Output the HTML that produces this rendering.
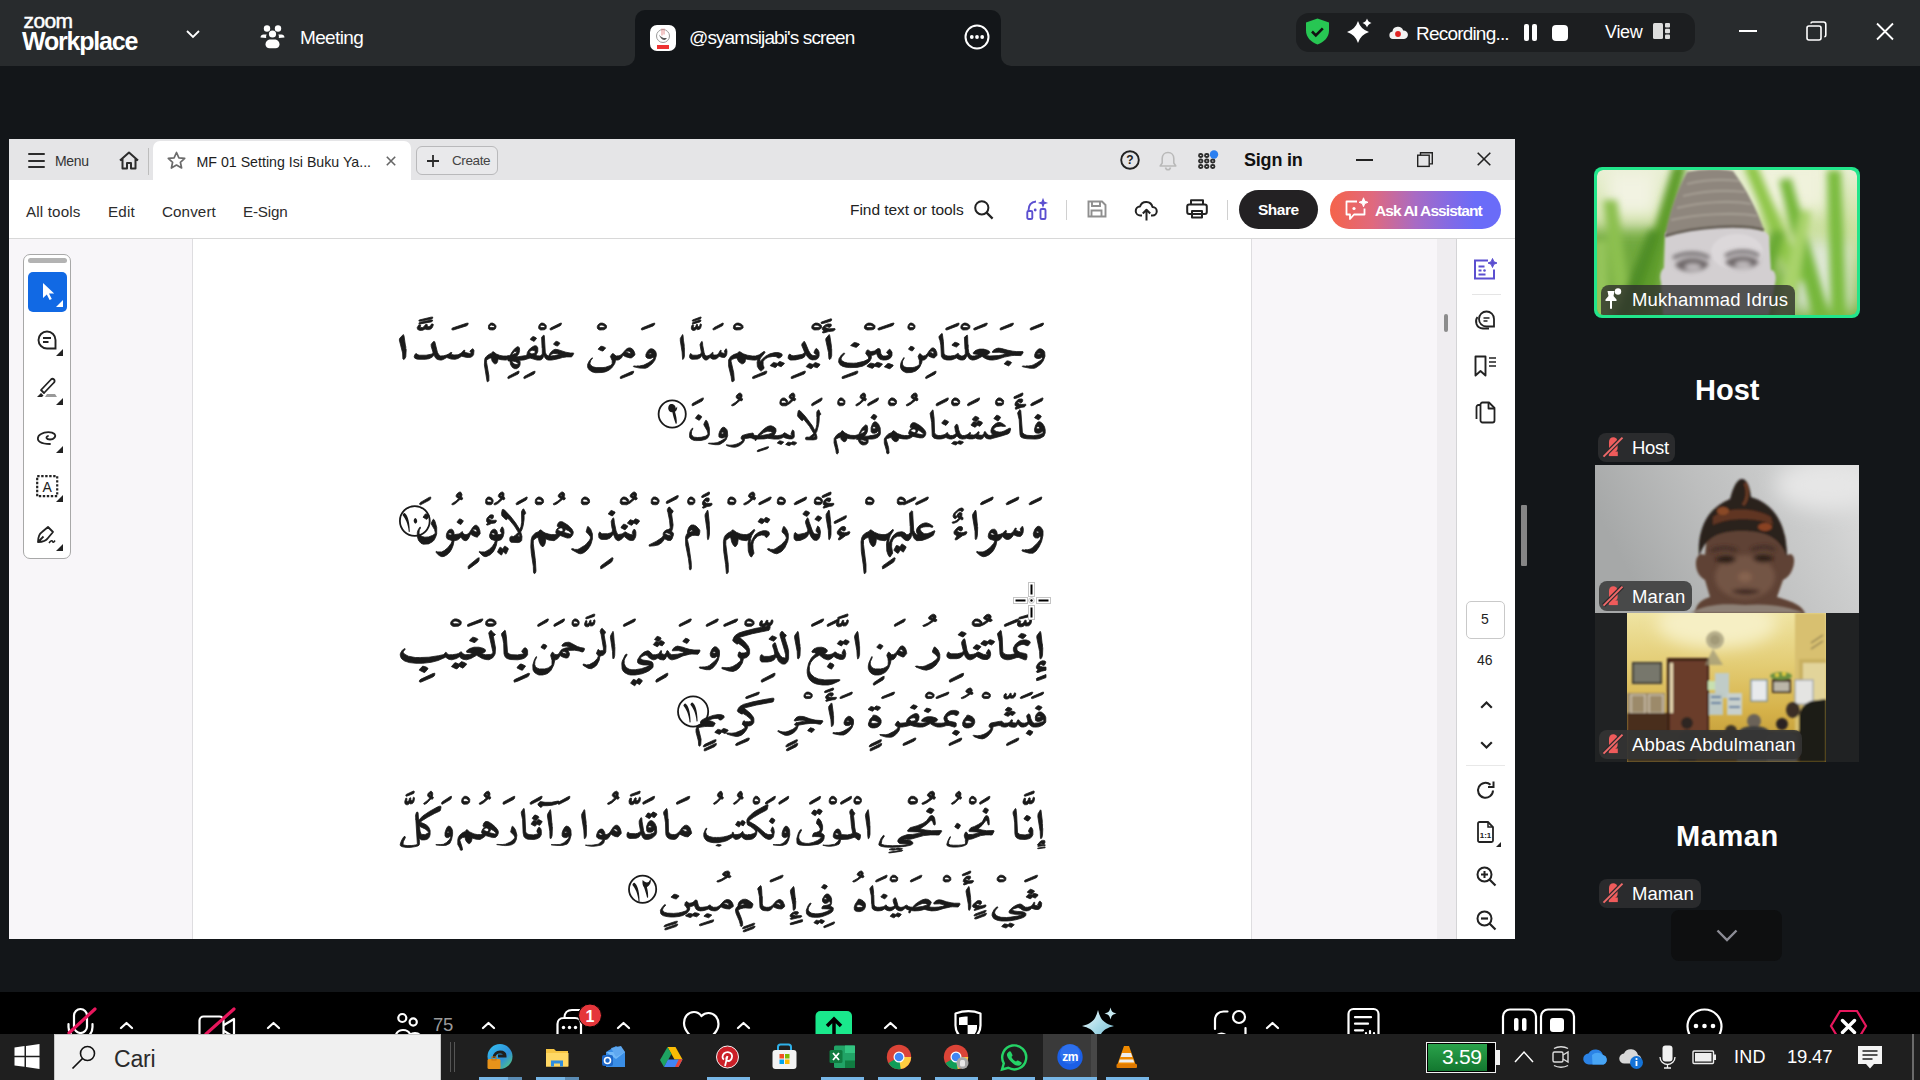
<!DOCTYPE html>
<html><head><meta charset="utf-8">
<style>
*{box-sizing:border-box;margin:0;padding:0}
html,body{width:1920px;height:1080px;overflow:hidden;background:#131619;font-family:"Liberation Sans",sans-serif}
.a{position:absolute}
.t{position:absolute;white-space:nowrap;line-height:1}
svg{overflow:visible}
</style></head><body>
<div class="a" style="left:0px;top:0px;width:1920px;height:66px;background:#282b2d;"></div>
<div class="a" style="left:625px;top:56px;width:386px;height:10px;background:#131619;"></div>
<div class="a" style="left:635px;top:10px;width:366px;height:56px;background:#131619;border-radius:10px 10px 0 0"></div>
<div class="a" style="left:625px;top:56px;width:10px;height:10px;background:#282b2d;border-radius:0 0 10px 0"></div>
<div class="a" style="left:1001px;top:56px;width:10px;height:10px;background:#282b2d;border-radius:0 0 0 10px"></div>
<div class="t" style="left:23.5px;top:9.9px;font-size:21px;font-weight:400;color:#fff;letter-spacing:-0.6px;-webkit-text-stroke:0.5px #fff">zoom</div>
<div class="t" style="left:22px;top:28.5px;font-size:25px;font-weight:700;color:#fff;letter-spacing:-1.2px;">Workplace</div>
<svg class="a" style="left:186px;top:30px;" width="14" height="9" viewBox="0 0 14 9"><path d="M1 1l6 6 6-6" fill="none" stroke="#fff" stroke-width="1.8"/></svg>
<svg class="a" style="left:260px;top:24px;" width="25" height="25" viewBox="0 0 25 25"><g fill="#fff"><circle cx="7" cy="4.5" r="3.2"/><circle cx="18" cy="4.5" r="3.2"/><circle cx="12.5" cy="10" r="3.6"/><path d="M0.5 13.5c0-2 1.5-3 3-3h3.2c-0.6 1-0.8 2.2-0.5 3.5z"/><path d="M24.5 13.5c0-2-1.5-3-3-3h-3.2c0.6 1 0.8 2.2 0.5 3.5z"/><path d="M5.5 20.5c0-3.3 2.5-5 5-5h4c2.5 0 5 1.7 5 5c0 2.2-1.8 3.8-4 3.8h-6c-2.2 0-4-1.6-4-3.8z"/></g></svg>
<div class="t" style="left:300px;top:28.1px;font-size:19px;font-weight:400;color:#fff;letter-spacing:-0.65px;">Meeting</div>
<div class="a" style="left:650px;top:25px;width:26px;height:26px;background:#fff;border-radius:7px;overflow:hidden"><svg width="26" height="26" viewBox="0 0 26 26"><circle cx="13" cy="11" r="6.5" fill="none" stroke="#999" stroke-width="1"/><path d="M9 9.5c2 3 5 4 8 3.5l-2 2c-3 0-5-2-6-5.5z" fill="#555"/><path d="M12 3.5v7M14 3.5v6" stroke="#d77" stroke-width="0.8"/><rect x="7" y="20" width="12" height="4" fill="#e33"/></svg></div>
<div class="t" style="left:689px;top:27.5px;font-size:19px;font-weight:400;color:#fff;letter-spacing:-0.9px;">@syamsijabi's screen</div>
<svg class="a" style="left:964px;top:24px;" width="26" height="26" viewBox="0 0 26 26"><circle cx="13" cy="13" r="11.5" fill="none" stroke="#fff" stroke-width="2"/><circle cx="7.8" cy="13" r="1.9" fill="#fff"/><circle cx="13" cy="13" r="1.9" fill="#fff"/><circle cx="18.2" cy="13" r="1.9" fill="#fff"/></svg>
<div class="a" style="left:1296px;top:13px;width:399px;height:39px;background:#1c1e20;border-radius:13px"></div>
<svg class="a" style="left:1305px;top:18px;" width="25" height="27" viewBox="0 0 25 27"><path d="M12.5 0.5L24 4.5v8c0 7-5 11.5-11.5 14c-6.5-2.5-11.5-7-11.5-14v-8z" fill="#27c653"/><path d="M7 13.5l3.8 3.8 7-7" fill="none" stroke="#111" stroke-width="2.6"/></svg>
<svg class="a" style="left:1344px;top:17px;" width="28" height="28" viewBox="0 0 28 28"><g fill="#fff"><path d="M14 4Q16.6 12.4 25 15Q16.6 17.6 14 26Q11.4 17.6 3 15Q11.4 12.4 14 4z"/><path d="M23 1.5Q24 5 27.5 6Q24 7 23 10.5Q22 7 18.5 6Q22 5 23 1.5z"/></g></svg>
<svg class="a" style="left:1389px;top:27px;" width="19" height="12" viewBox="0 0 19 12"><path d="M3.8 12a3.8 3.8 0 0 1-0.4-7.5a5.6 5.6 0 0 1 10.8-1a4.2 4.2 0 0 1 0.9 8.5z" fill="#f2f2f2"/><circle cx="9" cy="7" r="2.9" fill="#e02424"/></svg>
<div class="t" style="left:1416px;top:23.6px;font-size:19px;font-weight:400;color:#fff;letter-spacing:-0.8px;">Recording...</div>
<div class="a" style="left:1524px;top:24px;width:5px;height:17px;background:#fff;border-radius:2px"></div>
<div class="a" style="left:1532px;top:24px;width:5px;height:17px;background:#fff;border-radius:2px"></div>
<div class="a" style="left:1552px;top:25px;width:16px;height:16px;background:#fff;border-radius:4px"></div>
<div class="t" style="left:1605px;top:23.1px;font-size:18px;font-weight:400;color:#fff;letter-spacing:-0.3px;">View</div>
<svg class="a" style="left:1653px;top:23px;" width="17" height="16" viewBox="0 0 17 16"><g fill="#ddd"><rect x="0" y="0" width="10" height="16" rx="1.5"/><rect x="12" y="0" width="5" height="4.5" rx="1"/><rect x="12" y="5.7" width="5" height="4.5" rx="1"/><rect x="12" y="11.4" width="5" height="4.6" rx="1"/></g></svg>
<div class="a" style="left:1739px;top:30px;width:18px;height:2px;background:#fff;"></div>
<svg class="a" style="left:1806px;top:21px;" width="21" height="20" viewBox="0 0 21 20"><g fill="none" stroke="#fff" stroke-width="1.6"><rect x="1" y="5" width="14" height="14" rx="2"/><path d="M5 2.5c0-1 0.7-1.5 1.5-1.5h11c1.2 0 2.3 1 2.3 2.3v11c0 0.8-0.5 1.5-1.5 1.5"/></g></svg>
<svg class="a" style="left:1876px;top:23px;" width="18" height="17" viewBox="0 0 18 17"><path d="M1 0.5l16 16M17 0.5l-16 16" stroke="#fff" stroke-width="1.8"/></svg>
<div class="a" style="left:9px;top:139px;width:1506px;height:800px;background:#fff;"></div>
<div class="a" style="left:9px;top:139px;width:1506px;height:41px;background:#e5e5e7;"></div>
<div class="a" style="left:153px;top:141px;width:258px;height:39px;background:#fff;border-radius:7px 7px 0 0"></div>
<div class="a" style="left:9px;top:238px;width:1506px;height:1px;background:#d8d8d8;"></div>
<div class="a" style="left:9px;top:239px;width:183px;height:700px;background:#f8f6f9;"></div>
<div class="a" style="left:192px;top:239px;width:1px;height:700px;background:#dedde0;"></div>
<div class="a" style="left:1251px;top:239px;width:186px;height:700px;background:#f8f6f9;"></div>
<div class="a" style="left:1251px;top:239px;width:1px;height:700px;background:#dedde0;"></div>
<div class="a" style="left:1437px;top:239px;width:19px;height:700px;background:#efedf0;"></div>
<div class="a" style="left:1456px;top:239px;width:1px;height:700px;background:#d4d4d6;"></div>
<div class="a" style="left:28px;top:153px;width:17px;height:2px;background:#2c2c2c;border-radius:1px"></div>
<div class="a" style="left:28px;top:159.5px;width:17px;height:2px;background:#2c2c2c;border-radius:1px"></div>
<div class="a" style="left:28px;top:166px;width:17px;height:2px;background:#2c2c2c;border-radius:1px"></div>
<div class="t" style="left:55px;top:154.1px;font-size:14px;font-weight:400;color:#333;letter-spacing:-0.3px;">Menu</div>
<svg class="a" style="left:118px;top:151px;" width="22" height="19" viewBox="0 0 22 19"><path d="M2 9.5L11 1.5l9 8M4.5 7.5v10h4.5v-5.5h4v5.5h4.5v-10" fill="none" stroke="#2c2c2c" stroke-width="2" stroke-linejoin="round"/></svg>
<div class="a" style="left:148px;top:148px;width:1px;height:27px;background:#bdbdbd;"></div>
<svg class="a" style="left:167px;top:151px;" width="19" height="19" viewBox="0 0 19 19"><path d="M9.5 1.5l2.4 5.3 5.8 0.6-4.3 3.9 1.2 5.7-5.1-2.9-5.1 2.9 1.2-5.7-4.3-3.9 5.8-0.6z" fill="none" stroke="#6b6b6b" stroke-width="1.7" stroke-linejoin="round"/></svg>
<div class="t" style="left:196.5px;top:155.0px;font-size:14.2px;font-weight:400;color:#1e1e1e;letter-spacing:0.0px;">MF 01 Setting Isi Buku Ya...</div>
<svg class="a" style="left:386px;top:156px;" width="10" height="10" viewBox="0 0 10 10"><path d="M0.8 0.8l8.4 8.4M9.2 0.8l-8.4 8.4" stroke="#666" stroke-width="1.6"/></svg>
<div class="a" style="left:416px;top:146px;width:82px;height:29px;background:#e9e9eb;border:1.5px solid #b9b9bb;border-radius:6px"></div>
<svg class="a" style="left:427px;top:155px;" width="12" height="12" viewBox="0 0 12 12"><path d="M6 0v12M0 6h12" stroke="#2a2a2a" stroke-width="1.8"/></svg>
<div class="t" style="left:452px;top:154.0px;font-size:13.5px;font-weight:400;color:#444;letter-spacing:-0.4px;">Create</div>
<svg class="a" style="left:1120px;top:150px;" width="20" height="20" viewBox="0 0 20 20"><circle cx="10" cy="10" r="8.8" fill="none" stroke="#222" stroke-width="1.9"/><text x="10" y="14.3" font-family="Liberation Sans" font-weight="700" font-size="12" text-anchor="middle" fill="#222">?</text></svg>
<svg class="a" style="left:1159px;top:151px;" width="18" height="20" viewBox="0 0 18 20"><path d="M9 1.5c-3.5 0-5.8 2.6-5.8 6v4.5l-2 3h15.6l-2-3v-4.5c0-3.4-2.3-6-5.8-6zM6.5 16.5c0.4 1.5 1.3 2.3 2.5 2.3s2.1-0.8 2.5-2.3" fill="none" stroke="#b9b9b9" stroke-width="1.6" stroke-linejoin="round"/></svg>
<svg class="a" style="left:1198px;top:152px;" width="19" height="18" viewBox="0 0 19 18"><g fill="none" stroke="#2e2e2e" stroke-width="1.8"><rect x="1" y="2.0" width="3.5" height="3" rx="1.5"/><rect x="7" y="2.0" width="3.5" height="3" rx="1.5"/><rect x="1" y="7.5" width="3.5" height="3" rx="1.5"/><rect x="7" y="7.5" width="3.5" height="3" rx="1.5"/><rect x="13" y="7.5" width="3.5" height="3" rx="1.5"/><rect x="1" y="13.0" width="3.5" height="3" rx="1.5"/><rect x="7" y="13.0" width="3.5" height="3" rx="1.5"/><rect x="13" y="13.0" width="3.5" height="3" rx="1.5"/></g><circle cx="16" cy="2.5" r="4.2" fill="#2b7ff0"/></svg>
<div class="t" style="left:1244px;top:151.3px;font-size:18px;font-weight:700;color:#111;letter-spacing:-0.2px;">Sign in</div>
<div class="a" style="left:1356px;top:159px;width:17px;height:2px;background:#222;"></div>
<svg class="a" style="left:1417px;top:152px;" width="16" height="15" viewBox="0 0 16 15"><g fill="none" stroke="#222" stroke-width="1.4"><rect x="0.7" y="3.2" width="11.5" height="11.2"/><path d="M3.5 3.2v-2.5h11.8v11.2h-3"/></g></svg>
<svg class="a" style="left:1477px;top:152px;" width="14" height="14" viewBox="0 0 14 14"><path d="M0.7 0.7l12.6 12.6M13.3 0.7l-12.6 12.6" stroke="#222" stroke-width="1.6"/></svg>
<div class="t" style="left:26px;top:203.5px;font-size:15.2px;font-weight:400;color:#2c2c2c;letter-spacing:0.15px;">All tools</div>
<div class="t" style="left:108px;top:203.5px;font-size:15.2px;font-weight:400;color:#2c2c2c;letter-spacing:0.2px;">Edit</div>
<div class="t" style="left:162px;top:203.5px;font-size:15.2px;font-weight:400;color:#2c2c2c;letter-spacing:0.1px;">Convert</div>
<div class="t" style="left:243px;top:203.5px;font-size:15.2px;font-weight:400;color:#2c2c2c;letter-spacing:-0.2px;">E-Sign</div>
<div class="t" style="left:850px;top:202.3px;font-size:15.5px;font-weight:400;color:#222;letter-spacing:-0.05px;">Find text or tools</div>
<svg class="a" style="left:974px;top:200px;" width="20" height="19" viewBox="0 0 20 19"><circle cx="7.8" cy="7.8" r="6.6" fill="none" stroke="#222" stroke-width="2"/><path d="M12.6 12.6l6 6" stroke="#222" stroke-width="2.2"/></svg>
<svg class="a" style="left:1026px;top:198px;" width="23" height="22" viewBox="0 0 23 22"><g fill="none" stroke="#5b4fd0" stroke-width="1.9"><path d="M2.5 12.5c0-5 2.5-8.5 7.5-9"/><rect x="1.3" y="13" width="5" height="8" rx="1.3"/><rect x="14.5" y="11" width="5" height="10" rx="1.3"/></g><circle cx="9.2" cy="12" r="1.4" fill="#5b4fd0"/><path d="M17 1.5l0.9 2.5 2.5 0.9-2.5 0.9-0.9 2.5-0.9-2.5-2.5-0.9 2.5-0.9z" fill="#5b4fd0" stroke="#5b4fd0" stroke-width="1.2"/></svg>
<div class="a" style="left:1066px;top:200px;width:1px;height:20px;background:#d0d0d0;"></div>
<svg class="a" style="left:1087px;top:200px;" width="20" height="18" viewBox="0 0 20 18"><g fill="none" stroke="#8f8f8f" stroke-width="1.9"><path d="M1.5 1.5h13.5l3.5 3.5v11.5h-17z"/><path d="M5 1.5v4.5h8v-4.5M4.5 16.5v-6h10v6"/></g></svg>
<svg class="a" style="left:1135px;top:200px;" width="23" height="21" viewBox="0 0 23 21"><g fill="none" stroke="#222" stroke-width="2" stroke-linejoin="round"><path d="M7 15.5h-1.5a4.5 4.5 0 0 1-0.5-9a6.5 6.5 0 0 1 12.5 0.5a4 4 0 0 1 0 8.5h-1.5"/><path d="M11.5 20.5v-10M7.8 13.5l3.7-3.7 3.7 3.7"/></g></svg>
<svg class="a" style="left:1186px;top:199px;" width="22" height="20" viewBox="0 0 22 20"><g fill="none" stroke="#222" stroke-width="2" stroke-linejoin="round"><path d="M5 5.5v-4.3h12v4.3"/><rect x="1.2" y="5.5" width="19.6" height="9.5" rx="2"/><rect x="6" y="12" width="10" height="6.5"/></g></svg>
<div class="a" style="left:1227px;top:200px;width:1px;height:20px;background:#d0d0d0;"></div>
<div class="a" style="left:1239px;top:190px;width:79px;height:39px;background:#232123;border-radius:20px"></div>
<div class="t" style="left:1258px;top:201.8px;font-size:15.5px;font-weight:700;color:#fff;letter-spacing:-0.5px;">Share</div>
<div class="a" style="left:1330px;top:191px;width:171px;height:38px;border-radius:19px;background:linear-gradient(90deg,#f5634a 0%,#e0697e 25%,#a86bc4 50%,#7f6ae8 72%,#6a6cf8 85%,#6a6cf8 100%)"></div>
<svg class="a" style="left:1344px;top:197px;" width="25" height="25" viewBox="0 0 25 25"><g fill="none" stroke="#fff" stroke-width="1.8" stroke-linejoin="round"><path d="M13 4.5h-10.5v13h3.5v4.5l4-4.5h10.5v-6"/></g><circle cx="10" cy="11.5" r="1.6" fill="#fff"/><path d="M19.5 0.8l1.2 3.3 3.3 1.2-3.3 1.2-1.2 3.3-1.2-3.3-3.3-1.2 3.3-1.2z" fill="#fff" stroke="#fff" stroke-width="1"/></svg>
<div class="t" style="left:1375px;top:202.5px;font-size:15.5px;font-weight:700;color:#fff;letter-spacing:-0.9px;">Ask AI Assistant</div>
<div class="a" style="left:23px;top:254px;width:48px;height:305px;background:#fff;border:1.3px solid #a8a8a8;border-radius:7px"></div>
<div class="a" style="left:28px;top:258px;width:39px;height:5px;background:#b3b3b3;border-radius:3px"></div>
<div class="a" style="left:28px;top:272px;width:39px;height:40px;background:#1169e4;border-radius:5px"></div>
<svg class="a" style="left:42px;top:282px;" width="13" height="19" viewBox="0 0 13 19"><path d="M1 1v15l3.8-3.5 2.8 5.5 2.2-1.1-2.8-5.4h5.2z" fill="#fff"/></svg>
<svg class="a" style="left:56px;top:300px;" width="7" height="7" viewBox="0 0 7 7"><path d="M7 0v7h-7z" fill="#fff"/></svg>
<svg class="a" style="left:37px;top:330px;" width="21" height="21" viewBox="0 0 21 21"><path d="M10 1.5a8.5 8.5 0 1 0 0 17h8.5v-8.5a8.5 8.5 0 0 0-8.5-8.5z" fill="none" stroke="#222" stroke-width="1.9"/><path d="M6 8h8M6 12h5.5" stroke="#222" stroke-width="1.9"/></svg>
<svg class="a" style="left:56px;top:349px;" width="7" height="7" viewBox="0 0 7 7"><path d="M7 0v7h-7z" fill="#222"/></svg>
<svg class="a" style="left:36px;top:378px;" width="23" height="21" viewBox="0 0 23 21"><path d="M8 15l10-10.5a2 2 0 0 0-3-3l-10 10.5z" fill="none" stroke="#222" stroke-width="1.8" stroke-linejoin="round"/><path d="M1 19l4-4 2.5 2.5-1.5 1.5z" fill="#222"/><path d="M9 19h12l-2-3h-8z" fill="#999"/></svg>
<svg class="a" style="left:56px;top:398px;" width="7" height="7" viewBox="0 0 7 7"><path d="M7 0v7h-7z" fill="#222"/></svg>
<svg class="a" style="left:36px;top:429px;" width="23" height="17" viewBox="0 0 23 17"><path d="M4 13c-3-1.5-3-6 1-8c4-2.5 11-2.5 13.5 0c2 2.2-0.5 5.5-4.5 5.5c-4 0-4.5-2.5-2-3.5M4 13c2.5 1.5 6 2 10 2" fill="none" stroke="#222" stroke-width="1.8" stroke-linecap="round"/></svg>
<svg class="a" style="left:56px;top:446px;" width="7" height="7" viewBox="0 0 7 7"><path d="M7 0v7h-7z" fill="#222"/></svg>
<svg class="a" style="left:36px;top:475px;" width="23" height="23" viewBox="0 0 23 23"><rect x="1.2" y="1.2" width="20" height="20" fill="none" stroke="#222" stroke-width="2.2" stroke-dasharray="2.4 1.6"/><text x="11.2" y="16.5" font-family="Liberation Sans" font-size="14" text-anchor="middle" fill="#222">A</text></svg>
<svg class="a" style="left:56px;top:495px;" width="7" height="7" viewBox="0 0 7 7"><path d="M7 0v7h-7z" fill="#222"/></svg>
<svg class="a" style="left:36px;top:525px;" width="23" height="20" viewBox="0 0 23 20"><path d="M2 17c0-4 1-8 4-10l6-5 5 5-5 6c-2 3-6 4-10 4zM2 17l5.5-5.5" fill="none" stroke="#222" stroke-width="1.8" stroke-linejoin="round"/><path d="M13 18c1.5-2 3-3 3.5-1.5s1.5 0.5 2.5-1" fill="none" stroke="#222" stroke-width="1.5"/></svg>
<svg class="a" style="left:56px;top:544px;" width="7" height="7" viewBox="0 0 7 7"><path d="M7 0v7h-7z" fill="#222"/></svg>
<svg class="a" style="left:1473px;top:258px;" width="24" height="22" viewBox="0 0 24 22"><g fill="none" stroke="#5b4fd0" stroke-width="2"><path d="M15 2.5h-13v18h19v-9"/><path d="M5.5 8.5h6M5.5 12.5h3M5.5 16.5h7"/></g><circle cx="11.5" cy="12.5" r="1.3" fill="#5b4fd0"/><path d="M19.5 0.5l1.3 3.2 3.2 1.3-3.2 1.3-1.3 3.2-1.3-3.2-3.2-1.3 3.2-1.3z" fill="#5b4fd0" stroke="#5b4fd0" stroke-width="1"/></svg>
<div class="a" style="left:1472px;top:294px;width:29px;height:1px;background:#e5e5e5;"></div>
<svg class="a" style="left:1474px;top:310px;" width="22" height="20" viewBox="0 0 22 20"><path d="M12.5 1.5a7.5 7.5 0 1 0 0 15h7.5v-7.5a7.5 7.5 0 0 0-7.5-7.5z" fill="none" stroke="#222" stroke-width="1.8"/><path d="M9.5 8h6M9.5 11h4" stroke="#222" stroke-width="1.6"/><path d="M3.5 7c-3 4-1.5 11 5.5 11.5h6" fill="none" stroke="#222" stroke-width="1.8"/></svg>
<svg class="a" style="left:1474px;top:355px;" width="23" height="22" viewBox="0 0 23 22"><path d="M1.5 1.5h10v19l-5-4.5-5 4.5z" fill="none" stroke="#222" stroke-width="1.9" stroke-linejoin="round"/><path d="M15 3h7M15 7h7M15 11h7" stroke="#222" stroke-width="1.7"/></svg>
<svg class="a" style="left:1475px;top:401px;" width="21" height="22" viewBox="0 0 21 22"><g fill="none" stroke="#222" stroke-width="1.8" stroke-linejoin="round"><path d="M5 4h-1.5a2 2 0 0 0-2 2v12"/><path d="M5.5 3.5a2 2 0 0 1 2-2h6.5l5.5 5.5v12.5a2 2 0 0 1-2 2h-10a2 2 0 0 1-2-2z"/><path d="M13.5 1.5v6h6"/></g></svg>
<div class="a" style="left:1466px;top:601px;width:39px;height:38px;background:#fff;border:1px solid #c9c9c9;border-radius:5px"></div>
<div class="t" style="left:1481px;top:611.8px;font-size:14px;font-weight:400;color:#222;letter-spacing:0px;">5</div>
<div class="t" style="left:1477px;top:653.0px;font-size:14px;font-weight:400;color:#222;letter-spacing:0px;">46</div>
<svg class="a" style="left:1480px;top:701px;" width="13" height="8" viewBox="0 0 13 8"><path d="M1.2 6.8l5.3-5.3 5.3 5.3" fill="none" stroke="#222" stroke-width="2.2"/></svg>
<svg class="a" style="left:1480px;top:741px;" width="13" height="8" viewBox="0 0 13 8"><path d="M1.2 1.2l5.3 5.3 5.3-5.3" fill="none" stroke="#222" stroke-width="2.2"/></svg>
<div class="a" style="left:1466px;top:765px;width:39px;height:1px;background:#e8e8e8;"></div>
<svg class="a" style="left:1475px;top:780px;" width="21" height="21" viewBox="0 0 21 21"><path d="M18 10.5a7.5 7.5 0 1 1-2.5-5.8" fill="none" stroke="#222" stroke-width="2"/><path d="M18.5 1.5v5.5h-5.5" fill="none" stroke="#222" stroke-width="2"/></svg>
<svg class="a" style="left:1476px;top:821px;" width="26" height="26" viewBox="0 0 26 26"><path d="M2 2.5a1.5 1.5 0 0 1 1.5-1.5h8.5l5 5v13.5a1.5 1.5 0 0 1-1.5 1.5h-12a1.5 1.5 0 0 1-1.5-1.5z" fill="none" stroke="#222" stroke-width="1.8"/><path d="M12 1v5h5" fill="none" stroke="#222" stroke-width="1.5"/><text x="9.5" y="17" font-family="Liberation Sans" font-weight="700" font-size="8" text-anchor="middle" fill="#222">1:1</text><path d="M25 21v5h-5z" fill="#222"/></svg>
<svg class="a" style="left:1476px;top:866px;" width="21" height="21" viewBox="0 0 21 21"><circle cx="8.5" cy="8.5" r="7" fill="none" stroke="#222" stroke-width="2"/><path d="M13.5 13.5l6 6" stroke="#222" stroke-width="2.2"/><path d="M5 8.5h7M8.5 5v7" stroke="#222" stroke-width="2"/></svg>
<svg class="a" style="left:1476px;top:910px;" width="21" height="21" viewBox="0 0 21 21"><circle cx="8.5" cy="8.5" r="7" fill="none" stroke="#222" stroke-width="2"/><path d="M13.5 13.5l6 6" stroke="#222" stroke-width="2.2"/><path d="M5 8.5h7" stroke="#222" stroke-width="2.2"/></svg>
<div class="a" style="left:1444px;top:314px;width:4px;height:18px;background:#8c8c8c;border-radius:2px"></div>
<svg class="a" style="left:0;top:0" width="1920" height="1080" viewBox="0 0 1920 1080"><g fill="#1a1a1a" fill-rule="evenodd"><path stroke="#1a1a1a" stroke-width="0.8" d="M936.1 371.2 934.5 371.6 926.4 376.3 925.7 376.9 925.7 378.4 926.4 378.6 934.9 374.2 935.8 373.1ZM857.9 371.2 856.5 371.2 843.2 376.3 842.1 376.9 842.1 378.4 843.2 378.6 856.5 374.0 857.6 372.9ZM805.4 371.2 804.2 371.2 792.2 376.3 791.2 376.9 791.2 378.4 792.2 378.6 804.2 374.0 805.1 372.9ZM766.9 371.2 765.6 371.2 753.6 376.3 752.6 376.9 752.6 378.4 753.6 378.6 765.6 374.0 766.5 372.9ZM633.7 371.2 631.6 371.6 621.1 376.3 620.3 376.9 620.3 378.4 621.1 378.6 632.2 374.2 633.4 373.1ZM535.1 371.2 533.3 371.6 524.6 376.3 523.9 376.9 523.9 378.4 524.6 378.6 533.8 374.2 534.8 373.1ZM519.1 371.2 518.1 371.2 508.6 376.3 507.9 376.9 507.9 378.4 508.6 378.6 518.1 374.0 518.9 372.9ZM887.8 363.6 884.3 366.8 889.2 368.7 889.9 368.7 893.1 365.9 893.1 365.1 889.2 363.6ZM820.0 364.3 815.6 362.6 814.6 363.0 813.0 364.5 809.6 363.4 808.9 363.6 806.1 366.6 810.8 368.7 811.8 368.3 813.4 366.6 817.2 367.8 819.4 365.7ZM882.5 364.0 878.3 362.4 876.9 362.4 874.8 364.0 871.6 363.2 870.2 363.2 867.4 365.5 867.1 366.4 872.0 368.3 873.0 368.1 874.8 366.2 879.0 367.4 880.1 366.8ZM784.3 363.2 780.2 361.5 779.5 361.5 777.3 363.4 773.5 362.4 770.3 365.3 770.3 365.7 775.1 367.6 775.7 367.4 777.6 365.3 781.1 366.8 784.3 363.8ZM1006.9 360.9 1004.5 363.2 1004.3 364.0 1008.7 365.9 1011.0 363.6 1011.6 362.6 1009.9 361.5 1008.1 360.9ZM781.4 353.6 778.3 352.6 774.8 352.6 770.0 353.8 765.6 356.2 762.4 358.9 760.2 361.7 759.9 359.7 760.5 358.1 765.0 352.6 764.7 351.6 763.7 351.6 759.3 354.8 755.5 356.0 752.3 356.0 747.3 355.2 743.2 353.8 740.0 351.8 739.0 351.8 737.1 353.4 733.7 354.6 730.5 356.7 728.6 359.9 728.6 366.2 731.1 376.5 731.8 381.4 733.0 381.8 734.3 380.3 733.7 372.7 731.1 361.5 731.1 360.1 732.4 359.3 734.9 358.3 736.8 358.1 738.7 361.7 741.6 363.8 742.8 363.8 744.4 362.8 745.1 361.9 745.4 359.9 746.0 358.9 748.2 359.5 753.3 360.1 755.2 360.1 757.4 359.7 757.7 359.9 757.1 362.4 757.4 366.6 759.3 369.7 760.5 370.8 761.5 370.8 764.0 368.5 764.0 367.2 763.1 365.1 763.1 361.5 765.0 359.1 768.1 357.3 772.9 356.4 776.0 356.6 777.9 357.9 778.6 358.1 779.5 357.9 781.4 356.7 782.1 355.8 782.1 354.4ZM759.6 361.7 759.9 361.5 760.2 361.7 759.9 361.9ZM1041.7 349.1 1039.7 348.7 1037.9 349.5 1035.8 352.0 1034.7 354.6 1034.7 356.9 1035.3 357.7 1037.3 358.5 1039.4 358.5 1040.3 358.3 1041.7 357.3 1042.3 357.9 1042.3 358.7 1041.5 359.7 1036.7 363.0 1033.2 364.9 1031.4 365.5 1028.8 365.9 1025.8 365.9 1025.5 366.2 1022.6 365.9 1022.3 366.4 1022.6 366.8 1030.2 368.3 1034.1 368.3 1036.1 367.6 1040.6 364.3 1043.2 360.9 1045.0 356.2 1044.7 352.2 1043.8 350.6ZM1037.3 353.8 1039.1 353.0 1040.9 354.0 1038.8 354.6 1037.6 354.2ZM653.0 349.1 650.9 348.7 648.8 349.7 647.4 351.4 645.9 354.4 645.9 356.9 647.1 358.1 648.3 358.5 650.6 358.5 653.0 357.3 653.6 358.5 652.4 359.9 648.3 362.8 643.8 365.1 639.6 365.9 636.6 365.9 636.3 366.2 633.7 365.9 633.4 366.2 633.7 366.8 639.6 368.1 645.3 368.3 647.7 367.4 652.4 363.6 654.8 360.3 656.3 355.8 656.3 353.4 655.7 351.6 654.5 350.1ZM648.6 353.8 650.3 353.0 651.8 354.0 650.0 354.6 649.2 354.4ZM890.2 349.5 889.5 349.3 888.8 349.7 886.7 352.2 886.7 352.8 888.1 353.8 888.8 355.2 886.0 356.0 883.2 356.0 881.8 355.2 880.8 353.4 880.1 349.3 879.4 348.7 878.0 348.5 874.4 351.0 871.3 351.6 870.2 351.4 868.1 349.9 867.4 349.9 866.4 351.2 865.7 353.4 868.5 357.1 868.5 359.1 863.9 361.3 856.5 363.0 853.7 363.2 847.7 363.0 844.2 362.1 841.4 360.3 841.1 358.7 841.8 356.9 844.6 353.8 844.6 353.2 843.9 353.0 841.4 355.0 839.0 358.7 838.6 362.1 840.0 364.7 842.8 366.4 846.0 367.2 849.8 367.6 856.9 367.4 862.5 366.2 867.4 363.6 869.9 361.1 871.3 358.3 871.3 355.6 874.1 354.8 876.5 353.6 878.3 357.7 880.1 359.3 883.2 360.1 886.4 359.9 888.5 359.3 890.6 357.9 892.0 355.4 892.0 352.2ZM935.4 349.3 933.5 347.9 932.4 347.9 931.5 348.3 929.8 349.9 927.1 354.0 925.4 355.4 923.8 356.0 922.2 355.8 921.3 354.6 919.9 353.6 919.2 354.2 918.1 356.6 919.4 360.5 919.4 364.5 917.1 366.2 914.4 367.2 912.3 367.6 907.0 367.6 904.4 366.8 903.0 365.5 902.4 364.0 902.6 361.1 904.2 358.3 904.2 357.7 903.7 357.7 901.4 361.5 900.5 364.5 900.5 367.6 901.9 370.2 903.7 371.6 906.5 372.7 911.6 372.5 915.7 371.0 918.5 368.7 920.1 366.4 921.8 362.6 922.2 360.3 924.3 359.9 925.4 359.3 926.4 358.3 928.0 355.4 928.9 356.2 931.7 357.5 933.3 357.9 934.2 357.9 934.9 357.5 937.0 355.2 936.8 352.6ZM929.8 351.8 930.8 351.2 932.4 351.2 933.3 351.8 933.8 352.6 933.8 353.4 933.5 353.6 932.6 353.4ZM632.5 349.1 630.4 347.9 628.9 347.9 627.7 348.3 625.9 349.5 622.0 354.0 620.0 355.4 618.8 355.8 616.1 356.0 613.1 353.6 612.2 353.8 610.4 356.4 612.2 360.7 612.2 364.0 610.4 365.5 605.7 367.2 603.0 367.6 596.1 367.6 592.9 366.8 590.5 364.9 589.9 363.2 590.8 360.5 592.6 358.1 592.0 357.7 589.3 360.9 587.8 364.0 587.5 365.5 587.8 367.8 589.3 370.0 592.3 371.9 595.5 372.7 602.1 372.5 605.1 371.9 608.6 370.4 611.6 368.1 613.7 365.3 614.9 363.2 615.5 360.5 616.1 360.1 617.6 360.1 619.1 359.7 621.5 357.9 622.6 355.8 623.2 355.4 625.6 356.7 629.8 357.9 631.3 357.9 632.8 356.9 634.9 355.0 634.9 353.8 634.0 351.2ZM625.6 351.8 626.8 351.2 628.9 351.2 630.4 352.2 630.7 353.4 630.4 353.6 629.2 353.4ZM910.7 346.3 908.6 348.9 908.6 349.3 911.4 350.8 912.3 351.0 914.1 348.7 914.4 347.9 912.7 346.7ZM600.9 346.3 598.5 348.5 598.2 349.3 602.1 351.0 603.0 351.0 605.7 347.9 603.9 346.9 602.1 346.3ZM854.1 342.6 850.6 345.5 855.5 347.3 856.5 347.3 859.3 344.7 859.3 344.0 856.2 342.8ZM954.9 342.2 952.0 344.7 952.0 345.3 956.4 347.1 958.8 344.9 959.4 344.0 957.6 343.0ZM689.6 357.5 690.5 358.7 692.1 359.3 697.5 359.1 699.8 358.1 700.9 356.9 701.8 355.4 703.2 358.5 704.6 359.7 705.7 360.1 706.4 360.1 707.7 359.5 710.0 357.5 712.0 358.9 713.2 359.3 715.7 359.1 717.5 358.1 719.1 356.2 721.8 357.3 724.5 357.5 725.9 356.4 726.8 354.2 727.0 351.2 726.5 349.1 726.1 348.7 724.5 350.8 724.5 351.8 725.2 353.2 725.0 353.4 723.1 353.2 721.3 352.4 720.9 352.0 721.3 350.5 720.4 350.3 718.6 353.4 717.2 354.6 716.3 355.0 714.3 355.0 713.2 354.6 712.7 354.2 713.2 352.8 712.9 352.4 712.3 352.4 711.6 353.4 709.3 355.2 707.7 355.8 705.9 356.0 704.8 354.6 704.1 352.6 702.7 345.3 702.5 342.4 702.1 341.4 701.4 341.8 700.0 344.7 701.2 351.4 701.2 353.2 700.7 353.8 699.3 354.6 697.1 355.2 693.0 355.2 692.1 355.0 691.2 353.8 690.5 353.6 689.6 355.6ZM555.8 341.4 553.6 344.0 553.6 344.3 556.1 345.7 557.6 346.1 559.6 343.8 559.8 343.0 558.3 342.0 556.8 341.4ZM414.2 356.2 414.5 357.9 416.3 358.9 418.2 359.3 425.4 359.3 429.0 358.7 431.9 357.3 433.8 355.6 434.5 355.8 435.2 357.5 436.6 358.9 437.7 359.5 440.3 360.1 441.4 360.1 443.2 359.5 446.8 357.5 451.2 359.1 455.1 359.3 458.0 358.5 461.7 356.2 466.0 357.3 468.2 357.5 470.7 357.3 472.5 356.2 473.6 354.6 474.0 350.5 472.9 348.7 471.5 349.5 470.0 351.0 470.0 351.6 471.1 352.8 470.7 353.4 469.3 353.4 465.7 352.6 464.6 352.0 464.9 350.3 463.8 350.3 461.3 353.0 458.0 354.8 454.0 355.0 451.5 354.4 451.2 354.0 451.9 352.6 450.8 352.4 448.6 354.0 446.4 355.0 443.5 355.8 440.6 356.0 438.8 354.8 437.4 352.2 434.8 341.8 434.1 341.4 433.4 341.6 431.2 344.3 431.2 346.3 433.0 352.2 432.7 353.4 431.2 354.2 426.1 355.2 419.6 355.2 417.8 354.8 417.1 354.0 416.0 353.6 415.3 354.0ZM804.2 341.2 802.0 343.8 801.7 345.3 804.2 351.2 804.5 353.0 802.0 354.4 793.8 355.8 791.9 355.6 790.0 354.2 789.3 354.2 788.4 356.0 788.1 358.1 788.7 359.1 790.0 359.9 790.9 360.1 795.6 359.9 802.3 358.3 804.5 356.9 805.4 354.8 806.1 354.4 806.7 355.8 809.2 358.7 812.1 359.9 815.6 359.7 817.8 358.5 818.4 357.7 819.1 356.0 819.1 352.2 818.4 350.5 817.2 348.9 816.2 348.5 815.6 348.9 814.0 352.2 814.3 353.2 816.8 355.2 815.9 355.6 813.7 355.6 812.1 355.2 810.5 353.8 808.6 350.6 805.4 343.0ZM532.8 336.5 530.4 339.0 530.4 339.6 534.1 341.4 536.6 338.3 534.8 337.1ZM573.8 353.4 573.3 353.0 570.3 353.0 565.8 352.2 558.1 349.7 555.3 349.3 553.6 349.9 551.6 351.4 550.1 353.2 548.8 355.6 548.3 356.0 546.3 354.6 545.3 352.2 544.3 335.7 543.8 335.1 541.8 336.9 541.6 337.5 542.1 348.3 542.3 348.5 542.3 354.2 540.1 356.0 537.6 355.8 535.8 355.2 536.8 353.8 537.8 351.4 537.8 347.9 537.1 346.5 536.3 345.9 534.8 345.7 532.6 346.7 529.3 349.3 527.4 352.2 526.9 355.0 525.6 355.6 518.1 356.7 516.4 356.6 517.6 355.4 518.9 353.4 519.6 350.6 519.4 347.7 518.1 346.7 517.4 346.7 515.4 348.1 513.6 349.9 511.4 353.0 510.6 354.8 509.6 355.4 506.4 356.0 503.1 356.0 499.9 355.4 496.4 354.0 493.4 351.8 492.6 351.8 491.6 353.2 488.9 354.4 486.4 356.4 485.1 358.1 484.7 359.5 484.4 364.9 487.1 381.6 487.9 381.8 488.9 380.7 488.9 375.7 486.6 362.6 486.6 359.9 489.6 358.3 490.4 358.1 491.4 358.3 492.1 361.1 493.1 362.6 494.6 363.8 495.9 363.8 496.9 363.0 497.6 361.5 498.1 358.9 500.9 359.7 505.6 360.1 507.9 359.5 508.1 360.9 509.9 361.1 510.6 364.7 512.4 367.4 514.6 368.7 516.6 368.7 518.9 367.2 519.9 365.3 520.1 364.3 520.1 361.7 519.6 360.7 519.9 360.3 524.1 359.9 530.1 358.1 537.1 360.1 540.1 360.1 541.3 359.7 542.8 358.3 543.8 355.6 545.3 358.3 546.6 359.5 548.3 360.1 551.6 360.1 557.6 358.9 562.6 357.5 566.6 356.9 571.3 356.9 572.3 356.2ZM511.9 361.3 512.9 361.1 515.6 361.7 516.9 362.4 518.4 363.8 517.1 364.5 514.9 364.3 512.9 363.0ZM550.3 355.8 550.3 355.4 551.6 354.2 553.6 353.4 557.1 353.6 559.6 354.4 554.6 355.6 550.8 356.0ZM517.1 352.0 515.4 353.4 512.4 354.6 511.9 354.4 512.9 353.0 514.6 351.6 516.4 351.4ZM534.1 350.5 535.1 351.6 535.1 352.8 534.1 353.4 532.8 353.8 531.3 353.8 529.6 352.6 529.3 352.0 531.1 350.6 532.8 350.3ZM829.2 334.5 826.0 338.3 825.7 339.8 828.5 352.6 828.9 358.5 829.5 359.5 830.1 359.3 830.8 358.5 831.7 355.6 831.7 348.7 831.4 348.5 831.4 345.9 829.8 335.7ZM682.6 334.5 680.3 338.4 680.3 340.8 682.1 352.0 682.6 359.3 683.0 359.5 683.9 358.1 684.4 356.2 684.4 347.5 684.2 347.3 684.2 344.9 683.5 340.8 683.0 335.3ZM403.3 334.5 399.7 338.3 399.3 340.0 402.6 353.0 402.9 358.9 403.7 359.5 404.7 358.9 405.8 356.7 406.2 349.3 405.8 349.1 405.8 346.3 405.5 346.1 404.0 335.9ZM939.0 336.5 939.0 337.9 939.9 340.2 940.8 345.1 941.4 356.4 942.8 358.5 943.7 359.1 946.4 359.9 948.5 360.1 951.4 359.9 953.5 359.3 956.4 357.9 959.1 359.5 960.3 359.9 962.6 360.1 964.1 359.7 965.3 358.9 967.1 355.6 969.4 358.9 972.1 360.1 974.4 359.9 977.4 358.9 982.1 356.4 983.6 357.5 986.2 358.9 989.5 359.9 992.7 360.1 997.5 359.3 1004.3 357.1 1011.9 355.6 1014.3 355.4 1021.1 355.6 1023.1 352.8 1022.9 351.6 1016.7 351.6 1012.8 351.2 1007.2 350.1 1001.6 348.5 998.3 348.1 996.0 348.7 993.9 349.9 992.7 351.0 992.4 352.4 999.2 352.2 1003.4 353.0 1005.7 353.8 1002.8 354.8 998.3 355.6 989.8 356.0 986.8 355.6 986.2 355.2 989.2 353.4 989.8 352.4 989.5 351.4 987.7 350.3 983.6 349.1 979.7 349.1 977.4 349.7 975.3 350.6 973.3 352.6 973.3 353.8 977.4 354.4 978.3 355.0 974.4 356.0 972.1 356.0 970.3 355.0 968.8 352.4 968.2 348.5 968.2 344.7 967.9 344.5 967.6 336.5 967.3 335.1 967.1 335.1 964.4 337.3 965.0 349.5 965.3 349.7 965.3 354.0 964.7 354.8 963.5 355.6 962.3 356.0 961.1 356.0 958.5 354.4 958.5 353.6 957.6 353.4 955.8 354.8 954.4 355.4 950.5 356.0 947.9 356.0 945.8 355.4 944.0 353.8 943.4 341.6 942.3 333.7 941.9 333.5 941.4 333.7ZM831.1 324.1 827.9 323.9 825.7 324.7 823.5 326.4 822.5 327.6 822.2 329.4 824.1 331.0 822.5 331.8 822.5 332.7 823.8 332.9 828.5 331.6 833.3 331.0 835.2 329.6 834.9 328.6 829.5 328.8 827.9 328.6 825.4 327.6 825.4 327.0 826.0 326.6 827.0 326.6 829.5 327.6 830.4 327.0 831.4 325.7ZM701.2 324.1 700.5 323.9 700.0 324.3 699.8 325.5 699.3 326.2 698.7 326.6 698.2 326.6 697.5 326.0 697.5 324.5 696.6 324.3 695.7 326.4 694.6 327.6 693.9 327.6 693.2 327.0 693.7 325.3 693.2 324.7 692.5 324.7 691.9 325.5 691.4 326.8 691.4 329.0 691.9 329.8 693.0 330.4 694.1 330.4 695.3 330.0 696.4 329.0 697.3 329.6 699.3 329.4 700.5 328.2 700.9 327.2 701.4 325.1ZM433.0 324.1 431.9 323.9 431.2 324.3 430.5 325.9 429.0 326.6 428.3 326.6 427.2 326.0 427.2 324.5 425.8 324.3 423.6 327.0 422.5 327.6 420.7 327.4 420.3 327.0 420.7 324.9 418.9 324.7 417.1 327.8 417.8 329.6 420.0 330.4 422.9 330.2 425.0 329.0 426.9 329.6 429.4 329.6 431.2 328.8 432.3 327.6 433.4 324.7ZM1043.5 323.1 1042.0 323.3 1031.1 327.8 1030.2 328.4 1030.2 329.8 1031.4 330.0 1042.0 325.9 1043.2 324.9ZM1013.4 323.1 1011.3 323.5 1001.0 327.8 1000.1 328.4 1000.1 329.8 1001.0 330.0 1011.9 325.9 1013.1 324.7ZM987.4 323.3 987.1 323.1 985.7 323.3 974.4 328.0 973.8 328.6 973.8 329.8 975.0 330.0 985.4 326.0 986.5 325.3ZM964.1 323.1 962.3 324.1 961.4 325.1 960.9 326.4 960.9 328.0 961.4 329.0 962.6 329.8 963.5 330.0 967.3 329.8 969.7 328.2 970.0 325.9 969.1 324.7 967.6 323.7 965.9 323.1ZM962.6 326.0 963.8 325.3 964.7 325.1 966.2 325.3 968.5 326.6 968.5 327.0 967.6 327.6 963.8 327.6 962.6 326.8ZM959.1 323.1 957.6 323.3 946.7 327.8 945.8 328.4 945.8 329.8 947.0 330.0 957.6 325.9 958.8 324.9ZM910.4 323.1 909.0 324.1 908.4 325.1 907.9 326.4 907.9 328.0 908.4 329.0 909.3 329.8 910.0 330.0 913.0 329.8 914.8 328.2 915.1 325.9 914.4 324.7 913.2 323.7 911.8 323.1ZM909.3 326.0 910.2 325.3 910.9 325.1 912.1 325.3 913.9 326.6 913.9 327.0 913.2 327.6 910.2 327.6 909.3 326.8ZM894.1 323.3 893.8 323.1 892.0 323.3 878.6 328.0 878.0 328.6 878.0 329.8 879.4 330.0 891.7 326.0 893.1 325.3ZM868.1 323.1 866.4 323.9 864.9 325.3 864.3 327.0 864.6 328.6 866.0 329.6 867.4 330.0 872.0 329.8 873.4 329.4 874.8 328.4 875.1 325.9 874.4 324.9 872.0 323.5 870.2 323.1ZM866.4 326.2 867.8 325.3 870.6 325.3 873.0 326.2 873.4 327.0 872.3 327.6 867.8 327.6 866.4 326.8ZM815.3 323.1 813.4 324.1 812.4 325.1 811.8 326.4 811.8 328.0 812.4 329.0 813.7 329.8 814.6 330.0 818.7 329.8 821.3 328.2 821.6 325.9 820.6 324.7 819.1 323.7 817.2 323.1ZM813.7 326.0 814.9 325.3 815.9 325.1 817.5 325.3 820.0 326.6 820.0 327.0 819.1 327.6 814.9 327.6 813.7 326.8ZM736.8 323.1 734.6 324.3 733.7 325.5 733.3 328.2 734.3 329.4 736.2 330.0 740.3 329.8 742.8 328.2 743.2 327.4 742.8 325.5 741.9 324.5 740.0 323.5 738.7 323.1ZM735.2 325.9 736.2 325.3 737.5 325.1 739.0 325.3 741.3 326.4 741.6 327.0 740.3 327.6 736.5 327.6 735.2 327.0ZM723.4 323.3 722.7 323.1 714.1 327.6 712.9 328.8 713.2 330.0 714.8 329.6 722.5 325.7 722.9 325.1ZM654.8 323.1 652.7 323.5 642.3 327.8 641.4 328.4 641.4 329.8 642.3 330.0 653.3 325.9 654.5 324.7ZM600.6 323.1 598.8 324.1 597.9 325.1 597.3 326.4 597.3 328.0 597.9 329.0 599.1 329.8 600.0 330.0 603.9 329.8 606.3 328.2 606.6 325.9 605.7 324.7 604.2 323.7 602.4 323.1ZM599.1 326.0 600.3 325.3 601.2 325.1 602.7 325.3 605.1 326.6 605.1 327.0 604.2 327.6 600.3 327.6 599.1 326.8ZM561.6 323.3 561.3 323.1 560.1 323.3 550.6 328.0 550.1 328.6 550.1 329.8 551.1 330.0 559.8 326.0 560.8 325.3ZM541.3 323.1 540.1 323.9 539.1 325.3 538.6 327.0 538.8 328.6 539.8 329.6 540.8 330.0 544.1 329.8 545.1 329.4 546.1 328.4 546.3 325.9 545.8 324.9 544.1 323.5 542.8 323.1ZM540.1 326.2 541.1 325.3 543.1 325.3 544.8 326.2 545.1 327.0 544.3 327.6 541.1 327.6 540.1 326.8ZM490.9 323.1 489.9 323.7 488.6 325.3 488.4 328.4 488.9 329.2 489.9 329.8 492.9 330.0 494.4 329.6 495.4 328.8 496.1 326.8 495.9 325.7 494.9 324.3 492.6 323.1ZM489.6 326.4 490.6 325.3 491.6 325.1 493.6 325.7 494.9 326.8 493.9 327.6 490.6 327.6ZM468.2 323.1 466.4 323.3 453.0 327.8 451.9 328.4 451.9 329.8 453.3 330.0 466.4 325.9 467.8 324.9ZM700.9 320.1 699.8 320.1 693.2 322.3 692.5 322.7 692.3 323.7 693.2 323.9 700.0 321.9 700.9 321.1ZM432.7 320.1 430.8 320.1 421.1 322.1 418.9 322.9 418.9 323.7 420.3 323.9 431.2 321.9 432.3 321.3ZM831.7 319.0 830.8 318.8 821.3 322.1 821.0 322.7 821.3 323.7 823.8 323.3 830.4 321.3 831.4 320.7ZM701.2 317.2 700.5 317.0 693.0 319.8 692.3 320.3 692.3 321.1 693.2 321.3 700.2 319.0 700.9 318.4ZM432.7 317.0 430.8 317.2 420.0 319.8 418.9 320.3 418.9 321.1 420.3 321.3 431.6 319.0 432.7 318.2Z"/><path stroke="#1a1a1a" stroke-width="0.8" d="M768.5 446.7 766.8 447.0 758.0 450.1 757.3 450.6 757.3 451.6 758.0 451.7 767.3 448.7 768.3 448.0ZM796.6 442.8 795.6 442.2 793.6 441.7 792.6 441.7 791.1 442.8 789.1 442.2 787.8 442.2 785.6 444.4 789.1 445.7 790.1 445.4 791.3 444.2 794.3 445.1 796.4 443.4ZM963.3 441.9 961.9 441.4 959.5 440.8 958.7 441.1 957.4 442.1 954.4 441.4 953.9 441.5 951.5 443.5 955.5 445.0 956.3 444.7 957.7 443.5 960.9 444.4 963.3 442.5ZM779.8 440.8 777.6 442.5 777.3 443.1 780.8 444.4 781.3 444.4 783.6 442.4 783.6 441.9 782.3 441.4ZM724.9 427.6 723.2 427.2 721.7 428.1 719.9 431.0 718.9 433.9 718.9 436.6 719.4 437.3 721.2 437.9 722.9 437.9 723.7 437.8 724.9 437.1 725.4 437.5 725.4 438.1 724.7 438.8 720.7 441.1 717.7 442.4 716.2 442.8 713.9 443.1 711.4 443.1 711.2 443.2 708.6 443.1 708.4 443.4 708.6 443.7 715.2 444.7 718.4 444.7 720.2 444.2 723.9 441.9 726.2 439.6 727.7 435.7 727.4 431.2 726.7 429.4ZM721.2 433.0 722.7 432.1 724.2 433.3 722.4 433.9 721.4 433.5ZM794.1 431.7 793.6 430.6 792.8 429.9 792.3 430.3 791.1 433.5 791.1 434.4 791.8 435.3 791.6 435.7 789.1 435.3 784.8 432.8 784.3 432.8 782.8 434.2 781.1 435.1 777.1 435.7 774.3 435.5 774.0 435.1 774.8 434.2 776.1 431.2 775.8 428.5 773.6 426.7 771.0 425.8 768.8 426.1 766.8 427.0 764.5 428.5 760.3 432.4 757.3 435.7 754.5 435.3 753.7 434.6 753.0 433.0 747.5 433.9 742.2 435.5 741.2 437.2 741.0 438.6 742.5 439.9 742.5 440.5 740.7 442.1 738.7 443.2 736.2 444.2 733.0 445.0 729.9 445.2 726.4 444.8 726.2 445.1 727.2 445.8 731.5 447.0 734.7 447.3 737.0 446.8 739.7 445.5 742.7 443.1 744.2 440.9 744.5 439.1 745.7 438.5 749.5 437.9 751.2 437.9 752.5 438.6 753.5 438.9 754.5 438.9 755.0 439.2 754.8 439.5 755.0 440.4 755.8 440.4 756.3 440.1 756.5 439.4 757.0 439.1 764.0 438.9 767.8 438.3 774.0 439.1 778.6 439.1 780.6 438.6 783.6 437.2 785.1 437.9 789.1 438.9 791.6 438.9 792.3 438.8 793.6 438.1 794.3 436.6ZM772.5 432.4 772.0 433.0 768.8 434.2 760.8 435.7 759.8 435.5 763.8 432.6 767.8 431.2 770.5 431.5ZM916.4 423.4 914.8 422.7 912.7 422.7 911.1 424.0 910.0 427.0 910.5 427.6 911.3 427.6 911.6 428.1 910.0 429.7 908.7 432.4 908.7 433.7 909.5 434.6 909.2 435.1 907.6 435.5 904.4 435.5 901.7 435.1 897.4 433.5 893.9 430.8 893.1 430.8 891.5 432.6 888.6 433.9 885.9 436.4 884.3 438.9 884.3 443.2 886.4 450.3 886.7 453.0 887.5 453.9 888.6 453.6 889.1 452.9 888.6 447.7 886.4 440.1 886.4 439.1 887.5 438.5 889.7 437.8 891.3 437.6 892.6 439.9 894.7 441.5 896.3 441.7 898.2 440.4 898.5 438.9 899.0 438.2 903.0 438.9 907.1 439.1 910.3 438.1 912.9 436.4 919.9 437.9 922.9 437.8 924.7 436.6 925.8 434.2 925.8 432.4 925.0 430.6 922.9 428.1 919.9 425.6ZM916.4 433.0 917.2 432.4 917.8 430.8 918.6 430.3 920.7 431.5 923.4 433.7 923.7 434.6 922.0 434.8 917.2 433.7ZM910.8 430.3 912.9 429.0 914.3 429.0 915.4 429.7 915.9 430.6 915.9 431.7 914.6 432.6 914.0 432.6 911.3 431.5 910.8 431.0ZM877.0 422.5 875.4 421.8 874.2 422.0 872.7 423.4 871.1 427.6 871.1 431.5 871.3 432.1 872.3 433.0 874.7 433.3 876.8 432.4 877.8 431.2 878.5 431.7 878.5 433.0 875.9 434.6 872.0 435.5 870.1 435.5 869.2 436.0 864.9 436.4 864.6 436.2 866.8 433.0 867.5 430.8 867.7 428.5 867.2 425.8 866.3 424.9 865.6 424.9 863.2 427.0 861.7 428.8 858.6 434.6 855.0 435.5 850.7 435.3 848.1 434.6 844.8 432.8 842.6 430.8 841.9 430.8 840.9 432.4 838.5 433.5 836.4 435.3 834.2 438.5 834.0 442.8 835.9 450.0 836.2 452.7 836.6 453.7 837.4 453.9 838.3 453.0 838.3 450.1 835.9 439.6 836.2 438.9 838.3 437.9 840.2 437.6 840.7 438.1 841.2 439.5 842.4 440.8 843.8 441.7 845.0 441.7 846.4 440.4 847.2 438.2 849.8 438.8 854.1 439.1 856.5 438.6 856.7 439.6 857.9 439.6 858.4 439.9 858.9 441.8 860.3 443.8 862.2 444.8 862.9 445.0 865.3 444.8 866.8 444.1 868.0 442.5 868.2 440.4 867.7 439.4 869.2 439.1 872.0 439.1 874.2 438.8 877.8 437.5 879.9 435.1 880.4 433.3 880.2 427.9 878.7 424.5ZM860.3 439.9 861.3 439.8 863.2 440.1 865.1 440.6 866.5 441.7 865.3 442.1 863.2 441.9 861.0 440.9ZM865.3 431.0 863.2 432.8 860.8 433.9 860.3 433.7 861.5 431.7 862.5 430.8 863.4 430.3 864.6 430.3ZM872.7 427.6 873.5 426.7 874.4 426.7 875.9 428.1 874.7 428.8 873.2 428.8 872.7 428.3ZM982.3 422.5 980.9 421.6 978.3 420.7 976.7 422.7 974.8 421.8 973.5 421.8 971.0 424.9 971.3 425.4 974.8 427.2 975.3 427.2 977.2 425.2 979.9 426.3 982.3 423.4ZM706.1 420.2 705.6 420.4 703.9 424.0 703.9 424.9 707.1 430.6 707.9 433.0 707.9 434.4 705.4 436.2 701.1 437.3 697.4 437.5 694.6 437.2 693.6 436.9 691.9 435.3 691.4 434.2 691.6 431.0 692.9 429.0 692.6 427.9 691.1 429.7 690.1 431.7 689.6 433.5 689.6 437.2 690.9 438.9 693.4 440.2 695.6 440.6 701.1 440.5 705.1 439.5 706.4 438.9 708.1 437.6 709.4 434.8 709.4 428.3 707.9 422.9 706.9 420.9ZM944.5 419.8 941.9 422.7 941.9 423.4 945.9 425.4 948.0 422.9 948.6 421.8 946.9 420.7ZM975.1 416.2 972.6 418.9 972.4 419.8 976.4 421.8 979.1 418.2 977.5 417.1ZM996.5 415.3 993.8 418.6 997.8 420.9 998.4 420.7 1000.5 417.7 1000.5 417.1 998.9 415.9 997.3 415.3ZM697.9 414.8 695.4 418.2 698.9 420.2 699.4 420.2 701.6 417.3 701.6 416.4 698.9 414.8ZM1037.2 414.4 1034.5 417.7 1037.7 419.5 1038.8 419.8 1041.2 416.8 1041.2 416.2 1040.1 415.3 1038.0 414.4ZM873.2 414.4 870.8 417.7 874.2 419.8 874.9 419.8 877.0 416.4 875.1 414.8ZM930.1 413.5 931.7 422.7 932.2 435.5 932.8 437.1 934.1 438.2 936.8 438.9 938.7 439.1 941.3 438.9 943.2 438.5 945.9 437.5 948.3 438.6 949.4 438.9 951.5 439.1 954.2 438.3 955.2 437.8 956.9 436.0 959.3 438.3 962.2 439.1 965.2 438.8 966.5 438.2 969.2 438.9 972.6 438.9 975.6 438.1 977.5 438.9 980.9 439.2 982.6 438.6 983.9 436.6 984.4 436.2 985.2 437.5 986.8 438.5 988.4 438.9 990.6 439.1 992.2 438.5 1000.8 436.2 1008.0 433.9 1009.6 432.8 1010.7 429.0 1010.4 428.3 1009.3 428.3 1004.2 431.0 1001.3 431.9 999.2 432.1 996.2 431.5 993.8 429.7 993.5 429.2 994.1 428.3 995.1 427.4 996.7 426.7 1001.0 426.1 1003.4 426.5 1005.6 426.3 1005.3 425.6 1002.4 423.4 1000.2 422.5 998.1 422.5 995.7 423.6 992.7 426.3 991.7 428.1 990.9 430.6 991.1 432.6 992.7 434.4 990.3 435.5 988.4 435.1 986.6 433.5 985.2 431.5 984.2 431.9 983.9 433.5 982.3 435.3 979.3 435.1 978.5 434.2 979.1 433.0 979.1 431.9 978.0 431.7 976.7 433.5 974.5 434.8 973.5 435.1 970.5 434.8 970.0 434.4 970.5 433.7 970.5 432.6 969.7 432.4 968.6 433.7 967.0 434.8 964.4 435.5 962.2 435.5 960.1 433.7 958.7 429.7 957.9 425.4 957.1 424.3 956.0 424.5 954.7 426.7 955.5 431.7 956.0 432.8 956.0 433.5 954.7 434.6 952.6 435.5 950.2 435.5 947.8 433.7 947.8 432.8 946.9 432.6 945.3 434.2 944.0 434.8 940.5 435.5 938.1 435.5 936.2 434.8 935.2 433.9 934.6 432.8 934.1 418.2 933.0 409.9 932.0 410.5ZM818.9 409.9 818.4 409.9 817.7 410.5 816.8 412.1 816.8 416.8 817.0 417.1 816.8 424.3 816.1 427.9 814.9 430.6 812.2 425.6 805.2 416.2 800.1 410.8 799.2 410.3 798.3 410.8 797.6 414.4 797.6 415.9 798.1 416.8 801.3 420.2 802.2 420.7 802.9 420.2 803.6 419.1 809.4 426.3 813.5 433.0 813.5 433.5 812.6 434.6 809.2 437.2 806.8 437.1 805.7 437.6 805.5 438.1 805.7 439.4 806.6 439.8 813.3 439.9 815.4 439.6 816.3 439.4 816.8 438.9 817.0 436.9 815.8 433.0 816.8 431.5 818.4 425.8 819.1 421.6 819.3 415.9 820.7 414.4 820.7 413.7 819.8 412.3ZM814.5 435.5 814.9 437.1 813.3 437.2 813.1 437.1ZM1020.0 409.6 1019.2 410.3 1017.6 413.0 1019.2 419.8 1020.0 434.6 1020.8 436.9 1021.9 437.6 1023.5 438.2 1027.0 438.8 1035.6 439.1 1038.0 438.8 1040.4 438.2 1043.9 436.2 1045.2 433.0 1045.2 429.7 1044.4 426.5 1042.5 423.6 1040.4 422.0 1039.0 421.8 1037.7 422.2 1035.6 425.2 1034.5 429.2 1034.8 431.7 1035.3 432.6 1036.1 433.0 1038.8 433.3 1040.4 432.8 1042.5 431.2 1043.1 431.9 1042.8 433.3 1039.3 434.8 1033.2 435.7 1027.0 435.3 1024.9 434.6 1023.0 433.3 1022.4 432.1 1020.8 410.8ZM1036.6 427.4 1037.4 426.7 1038.5 426.7 1039.9 427.9 1039.9 428.3 1038.8 428.8 1037.2 428.8 1036.6 428.3ZM1021.9 398.9 1019.0 399.1 1017.1 400.4 1015.8 402.0 1015.0 403.8 1015.0 405.1 1015.5 406.0 1016.6 406.7 1015.2 407.8 1015.5 409.2 1016.3 409.2 1021.1 407.4 1024.3 406.9 1025.4 406.0 1025.9 405.1 1025.7 404.2 1021.1 404.5 1019.8 404.2 1017.6 403.1 1017.6 402.4 1018.2 402.0 1019.5 402.2 1020.6 403.1 1021.9 402.4 1022.7 400.9 1022.7 399.5ZM1043.1 398.2 1042.3 397.9 1032.1 403.1 1030.7 404.5 1031.0 405.8 1032.9 405.4 1042.0 400.9 1042.5 400.2ZM998.4 397.9 997.0 398.9 995.9 400.4 995.4 402.4 995.7 404.2 996.7 405.4 997.8 405.8 1001.3 405.6 1002.4 405.1 1003.4 404.0 1003.7 401.1 1003.2 400.0 1001.3 398.4 1000.0 397.9ZM997.0 401.6 998.1 400.4 1000.2 400.4 1002.1 401.6 1002.4 402.4 1001.6 403.1 998.1 403.1 997.0 402.2ZM979.6 397.9 977.7 398.4 968.4 403.3 967.6 404.0 967.6 405.6 968.4 405.8 978.3 401.1 979.3 399.7ZM954.4 397.9 952.8 399.1 952.0 400.2 951.5 401.8 951.5 403.6 952.0 404.7 953.1 405.6 953.9 405.8 957.4 405.6 959.5 403.8 959.8 401.1 959.0 399.7 957.7 398.6 956.0 397.9ZM953.1 401.3 954.2 400.4 955.0 400.2 956.3 400.4 958.5 402.0 958.5 402.4 957.7 403.1 954.2 403.1 953.1 402.2ZM948.3 397.9 946.9 398.2 937.0 403.3 936.2 404.0 936.2 405.6 937.3 405.8 946.9 401.1 948.0 400.0ZM891.3 397.9 889.7 399.1 888.9 400.2 888.3 401.8 888.3 403.6 888.9 404.7 889.9 405.6 890.7 405.8 894.2 405.6 896.3 403.8 896.6 401.1 895.8 399.7 894.5 398.6 892.9 397.9ZM889.9 401.3 891.0 400.4 891.8 400.2 893.1 400.4 895.3 402.0 895.3 402.4 894.5 403.1 891.0 403.1 889.9 402.2ZM878.5 397.9 876.8 398.4 868.4 403.3 867.7 404.0 867.7 405.6 868.4 405.8 877.3 401.1 878.2 399.7ZM840.2 397.9 839.0 398.9 838.1 400.4 837.6 402.4 837.8 404.2 838.8 405.4 839.7 405.8 842.8 405.6 843.8 405.1 844.8 404.0 845.0 401.1 844.5 400.0 842.8 398.4 841.7 397.9ZM839.0 401.6 840.0 400.4 841.9 400.4 843.6 401.6 843.8 402.4 843.1 403.1 840.0 403.1 839.0 402.2ZM822.1 397.9 820.5 398.4 812.4 403.3 811.7 404.0 811.7 405.6 812.4 405.8 820.9 401.1 821.9 399.7ZM703.4 397.9 701.6 398.4 692.9 403.3 692.1 404.0 692.1 405.6 692.9 405.8 702.1 401.1 703.1 399.7ZM1023.0 393.2 1022.2 393.0 1014.1 396.8 1013.9 397.5 1014.1 398.6 1016.3 398.2 1021.9 395.9 1022.7 395.2ZM916.2 393.2 915.6 393.0 914.3 393.2 912.9 393.9 911.9 395.0 911.1 396.4 911.1 397.5 913.5 399.7 910.5 402.2 906.3 404.7 906.5 405.8 907.9 405.8 910.8 404.2 915.4 400.4 917.0 400.9 917.8 400.2 918.0 398.6 916.7 397.9 917.2 396.8 917.2 394.8ZM912.9 396.2 914.0 395.7 914.8 396.4 914.8 397.0 914.6 397.3ZM864.6 393.2 864.1 393.0 862.9 393.2 861.7 393.9 860.8 395.0 860.1 396.4 860.1 397.5 862.2 399.7 859.6 402.2 855.8 404.7 856.0 405.8 857.2 405.8 859.8 404.2 863.9 400.4 865.3 400.9 866.1 400.2 866.3 398.6 865.1 397.9 865.6 396.8 865.6 394.8ZM861.7 396.2 862.7 395.7 863.4 396.4 863.4 397.0 863.2 397.3ZM793.8 393.2 793.3 393.0 792.1 393.2 790.8 393.9 789.8 395.0 789.1 396.4 789.1 397.5 791.3 399.7 787.8 402.7 787.1 400.0 785.3 398.4 784.1 397.9 782.1 398.2 780.8 399.5 780.1 401.1 779.8 403.1 780.3 404.7 782.1 405.8 786.1 405.8 790.1 403.3 793.1 400.4 794.6 400.9 795.6 399.7 795.6 398.6 794.3 397.9 794.8 396.8 794.8 394.8ZM781.3 401.6 782.3 400.4 784.3 400.4 786.1 401.6 786.3 402.4 785.6 403.1 782.3 403.1 781.3 402.2ZM790.8 396.2 791.8 395.7 792.6 396.4 792.6 397.0 792.3 397.3ZM740.2 393.0 739.0 393.2 736.7 395.2 736.2 396.2 736.2 397.7 738.5 399.7 736.0 402.0 731.5 404.9 731.9 405.8 733.0 405.8 735.2 404.7 740.0 400.4 741.2 400.9 742.2 400.4 742.7 398.9 741.5 397.9 742.0 396.6 742.0 395.0 741.5 393.9ZM738.0 396.2 738.5 395.7 739.2 395.9 739.7 397.0 739.5 397.3Z"/><path stroke="#1a1a1a" stroke-width="0.8" d="M895.2 558.0 894.1 557.7 882.9 565.7 882.3 566.6 882.6 568.9 885.4 567.6 893.5 562.2 894.6 560.6ZM613.1 558.0 612.0 557.7 601.1 565.7 600.5 566.6 600.8 568.9 603.5 567.6 611.4 562.2 612.5 560.6ZM479.2 557.7 477.5 558.3 468.9 565.4 468.2 566.3 468.2 568.6 468.9 568.9 478.0 562.2 479.0 560.6ZM508.4 549.0 507.9 548.1 505.2 546.2 504.5 546.2 502.8 549.0 500.8 547.4 499.8 547.4 497.6 551.6 497.6 552.2 501.1 555.1 501.8 554.8 503.0 551.9 503.5 551.9 505.5 553.8 506.2 553.8ZM906.1 546.8 902.5 544.2 901.6 544.2 900.0 547.1 898.0 545.8 896.3 545.5 893.8 550.3 897.4 553.2 898.3 553.2 900.2 550.0 903.3 552.2 905.8 548.1ZM769.1 532.3 768.0 531.4 766.1 530.7 763.1 530.7 759.1 532.1 757.5 533.0 755.0 535.0 752.1 539.7 750.4 543.6 750.2 542.0 750.7 538.5 751.8 535.3 754.8 530.5 754.5 529.6 753.7 529.6 751.2 532.1 749.1 533.7 746.7 534.6 743.7 534.6 740.2 533.9 736.4 532.3 733.1 529.9 732.3 529.9 731.2 531.4 728.3 532.8 725.6 535.0 724.2 537.5 723.4 541.7 723.7 551.3 725.6 564.4 726.4 573.4 727.2 573.7 728.3 572.1 728.3 564.4 725.8 544.5 725.8 540.4 729.1 537.8 730.7 537.5 731.8 542.3 732.9 544.5 734.5 546.5 735.8 546.5 737.5 543.9 738.3 538.8 741.2 540.1 746.4 540.7 748.3 539.7 748.5 540.1 748.0 543.6 748.3 551.0 749.6 555.1 751.0 557.0 751.5 557.0 754.0 553.2 753.1 549.0 752.9 544.2 753.4 541.7 754.5 539.4 757.5 536.2 761.5 535.0 764.2 535.3 765.8 537.2 766.4 537.5 767.2 537.2 769.1 535.0 769.4 534.1ZM502.5 526.9 501.8 527.1 500.3 530.1 500.3 531.2 501.8 533.2 501.1 534.1 499.6 534.6 497.9 534.6 497.4 534.1 497.4 533.0 496.7 530.7 494.9 529.2 493.0 529.4 491.0 531.2 489.5 535.3 489.8 537.5 491.2 539.4 495.4 540.7 494.4 543.3 492.5 546.2 489.3 549.4 484.9 551.9 480.9 551.9 479.4 551.3 479.2 552.2 482.4 555.4 484.1 556.4 486.1 556.7 490.3 554.8 493.2 551.9 494.9 549.0 496.4 545.2 497.1 541.0 501.1 539.7 503.0 536.9 504.0 533.0 503.8 529.6ZM491.5 533.7 492.2 533.0 493.7 533.0 494.9 534.1 495.2 534.8 493.2 535.0 492.5 534.8ZM960.9 526.5 959.5 526.5 958.1 527.1 955.6 529.4 953.9 531.9 954.2 534.1 957.0 535.9 955.0 539.1 955.6 540.1 957.3 539.4 962.5 535.7 965.8 534.6 966.9 532.8 966.7 531.7 965.3 531.7 963.3 532.6 961.1 532.8 959.2 532.3 957.5 531.4 957.3 530.3 957.8 529.9 958.6 529.9 960.6 531.0 961.4 531.0 962.5 529.6 962.5 527.6 962.0 526.9ZM844.0 526.5 842.6 526.5 841.3 527.1 838.8 529.4 837.2 531.9 837.5 534.1 840.2 535.9 838.3 539.1 838.8 540.1 840.5 539.4 845.6 535.7 848.8 534.6 849.9 532.8 849.7 531.7 848.3 531.7 846.4 532.6 844.2 532.8 842.4 532.3 840.7 531.4 840.5 530.3 841.0 529.9 841.8 529.9 843.7 531.0 844.5 531.0 845.6 529.6 845.6 527.6 845.1 526.9ZM784.5 526.7 784.0 526.5 783.4 526.7 782.1 530.7 782.1 532.1 784.8 534.6 786.1 536.9 786.4 538.1 785.3 540.4 781.5 544.5 775.8 548.4 773.7 549.4 770.7 549.4 769.4 548.7 767.7 548.7 767.5 549.0 768.0 550.0 774.0 553.2 776.9 553.8 780.4 552.2 782.1 551.0 785.0 547.4 787.7 541.4 788.3 538.5 788.3 534.1 786.9 529.9ZM588.3 526.5 587.5 526.7 586.1 531.9 588.3 533.9 590.2 536.5 590.5 538.1 589.6 540.1 586.4 543.9 584.5 545.5 579.3 548.7 577.6 549.4 574.7 549.4 573.3 548.7 571.7 548.7 571.7 549.7 578.7 553.5 580.9 553.8 583.4 552.9 585.8 551.3 587.7 549.4 589.9 546.2 591.0 543.9 592.4 539.1 592.4 533.7 590.7 529.2ZM1040.5 526.9 1039.7 526.5 1038.0 526.2 1036.1 527.6 1034.7 529.6 1033.3 533.5 1033.6 535.9 1035.0 537.8 1037.7 538.1 1038.6 537.8 1040.0 536.2 1040.8 537.8 1040.0 539.7 1037.5 542.9 1032.5 547.7 1030.3 549.0 1027.8 549.7 1025.0 549.7 1024.7 550.0 1022.3 549.7 1022.0 550.6 1022.5 551.3 1029.2 553.2 1033.0 553.2 1036.1 551.0 1039.1 546.8 1041.6 541.4 1043.0 535.3 1043.0 531.0 1042.4 529.4ZM1035.8 532.1 1036.6 531.4 1037.7 531.2 1039.1 532.3 1038.6 532.8 1037.2 533.0ZM1022.8 526.7 1022.3 526.2 1020.3 528.7 1020.3 529.9 1021.1 531.4 1020.9 531.7 1018.7 531.4 1016.4 530.5 1015.9 530.1 1016.4 528.3 1015.3 528.0 1013.1 531.7 1011.5 533.0 1010.4 533.5 1007.9 533.5 1006.5 533.0 1005.9 532.6 1006.5 531.0 1006.2 530.5 1005.4 530.5 1002.6 533.2 1000.7 534.1 998.7 534.6 997.6 534.6 997.1 534.1 997.1 533.0 996.3 530.7 994.9 529.4 994.3 529.2 992.1 529.4 990.4 530.5 989.6 531.7 988.5 534.1 988.2 536.5 988.8 538.1 989.6 539.1 994.9 540.7 993.8 543.3 989.9 547.7 986.0 550.6 983.0 551.9 978.6 551.9 976.9 551.3 976.6 552.2 978.8 554.5 981.3 556.1 983.3 556.7 985.7 556.4 989.1 554.8 992.4 551.9 994.3 549.0 996.0 545.2 996.8 541.0 999.9 539.7 1002.6 536.5 1005.1 538.8 1006.5 539.4 1008.7 539.4 1010.6 538.5 1012.0 537.2 1013.7 534.8 1017.0 536.2 1020.3 536.5 1022.0 535.0 1023.1 532.6 1023.4 529.2ZM990.4 533.7 991.3 533.0 992.9 533.0 994.3 534.1 994.6 534.8 992.4 535.0 991.6 534.8ZM478.5 526.9 476.5 525.3 475.3 525.3 474.3 525.8 472.6 527.6 469.6 532.3 467.9 533.9 466.2 534.6 465.0 534.6 464.0 534.1 462.7 533.0 462.5 531.7 461.8 531.7 460.3 533.2 459.1 533.9 454.6 534.6 454.1 534.1 453.9 532.1 452.9 530.1 451.7 529.2 449.7 529.4 448.3 530.5 447.5 531.7 446.5 534.1 446.3 536.5 446.8 538.1 447.5 539.1 452.2 540.7 451.2 543.3 447.8 547.7 444.3 550.6 441.6 551.9 437.7 551.9 436.2 551.3 436.0 552.2 437.9 554.5 440.1 556.1 441.9 556.7 444.1 556.4 447.0 554.8 450.0 551.9 451.7 549.0 453.2 545.2 454.1 540.7 457.3 540.1 459.6 538.5 460.8 536.9 461.8 538.5 463.5 540.1 465.2 540.7 466.7 540.4 467.9 539.4 468.9 537.8 470.6 533.9 471.6 534.8 474.5 536.5 477.2 537.2 478.0 536.5 480.2 533.7 479.9 530.7ZM448.3 533.7 449.0 533.0 450.5 533.0 451.7 534.1 451.9 534.8 450.0 535.0 449.2 534.8ZM472.6 529.9 473.6 529.2 475.3 529.2 476.3 529.9 476.8 530.7 476.8 531.7 476.5 531.9 475.5 531.7ZM693.6 524.9 691.2 525.1 689.8 526.2 688.8 527.6 687.6 530.5 687.4 533.2 686.5 534.4 685.5 537.2 685.7 544.9 688.4 558.6 689.3 565.7 689.3 567.9 689.8 569.8 690.7 569.8 691.2 568.9 691.4 567.6 691.2 562.2 689.1 547.4 687.4 539.4 689.1 537.2 692.2 535.5 695.0 535.3 698.6 535.7 699.3 534.6 699.8 532.1 699.8 530.3 698.3 528.3 696.0 526.0ZM689.5 531.9 689.8 531.0 691.0 530.1 691.7 530.1 693.3 531.2 690.3 532.1ZM623.4 524.2 621.2 526.9 621.0 527.8 625.0 529.9 627.2 527.4 627.8 526.0 625.0 524.4ZM563.2 522.2 562.1 521.7 559.9 521.7 558.6 522.6 557.5 524.4 557.2 526.2 558.3 526.7 558.6 527.4 556.9 529.0 555.9 531.2 555.9 533.0 556.7 533.9 554.8 534.6 551.2 534.6 548.8 534.1 545.2 533.0 543.6 532.1 540.9 529.9 540.1 529.9 538.4 531.7 535.4 533.0 532.2 536.2 531.1 540.1 530.8 546.8 531.3 553.2 533.3 566.3 533.5 572.4 534.3 573.7 535.4 573.0 536.0 571.1 535.4 560.6 533.3 543.9 533.3 540.7 534.6 539.1 536.5 537.8 538.2 537.5 539.2 542.0 540.6 544.9 542.0 546.5 543.3 546.5 544.4 545.2 545.2 543.3 545.8 538.8 548.8 540.1 554.0 540.7 556.7 539.1 560.2 535.5 567.3 538.1 570.3 537.8 572.2 535.7 573.0 534.1 573.3 531.9 571.9 529.0 567.8 525.1ZM563.5 532.3 564.9 531.0 565.1 529.6 565.7 529.4 568.4 530.7 570.6 532.6 571.1 533.5 570.6 533.9 569.5 533.9ZM557.8 529.6 559.1 528.5 560.2 528.0 561.6 528.0 562.7 528.7 563.2 530.7 561.0 531.7 558.6 530.5ZM433.5 519.3 433.0 519.5 431.3 523.1 431.3 524.0 434.5 529.6 435.2 532.1 435.2 533.5 432.8 535.3 428.6 536.9 424.9 537.2 422.2 536.5 421.2 535.9 419.5 534.4 419.0 533.2 419.3 530.1 420.5 528.0 420.2 526.9 418.8 528.7 417.8 530.7 417.3 532.6 417.3 536.5 418.5 540.4 421.0 543.3 423.2 544.2 428.6 543.9 432.5 541.7 433.8 540.4 435.5 537.5 436.7 533.9 436.7 527.4 435.2 522.0 434.3 519.9ZM639.5 520.8 638.4 519.9 635.7 518.8 634.6 519.5 633.5 520.8 630.2 519.7 627.5 522.9 627.5 523.3 631.3 525.3 632.1 525.1 633.8 522.9 636.5 524.4 637.0 524.4 639.5 521.3ZM459.6 518.8 457.3 521.5 457.1 522.4 460.5 524.4 461.0 524.4 463.2 521.3 463.2 520.8 462.3 519.9ZM598.6 533.9 598.9 537.5 600.0 538.8 601.6 539.4 606.8 539.4 610.1 538.1 612.0 535.9 613.3 533.9 615.0 538.1 615.8 539.4 618.0 540.7 618.8 540.7 621.2 539.4 624.2 536.5 628.3 539.7 630.2 540.4 632.9 540.4 633.8 540.1 635.4 537.5 635.9 535.3 635.9 532.1 635.4 530.3 634.3 529.0 633.2 530.3 632.4 532.3 632.4 533.7 633.2 534.6 632.9 534.8 630.8 534.6 628.0 533.5 625.6 531.9 625.0 531.9 622.1 533.9 618.2 534.6 617.4 533.9 616.1 531.0 614.4 522.9 613.9 518.4 613.3 517.9 612.5 518.6 611.2 521.5 611.7 526.5 612.5 529.9 612.2 531.7 610.9 532.8 607.6 533.7 602.4 533.7 601.6 533.5 599.7 531.9ZM807.5 517.7 805.6 521.1 805.6 523.1 807.7 529.6 807.7 531.2 806.9 532.1 804.5 533.2 798.8 534.4 796.9 534.1 795.8 532.8 795.0 532.6 794.5 533.2 794.0 535.3 794.0 538.1 794.5 539.4 796.1 540.7 800.4 540.4 805.6 538.1 807.7 535.9 809.1 532.8 811.3 537.2 813.7 540.1 816.7 540.4 818.6 539.1 819.9 536.5 820.5 531.7 819.4 527.4 817.7 526.0 816.1 529.9 816.1 531.2 818.3 533.7 817.5 534.1 814.8 533.9 813.4 532.8 812.1 530.1 809.1 521.7 808.6 519.3ZM769.9 519.3 766.7 517.5 765.6 517.5 764.0 519.5 761.5 518.4 760.4 518.4 758.0 521.7 761.8 523.8 762.9 523.3 764.2 521.5 767.5 522.9 769.4 520.6ZM817.5 515.9 814.8 519.3 818.6 521.3 819.1 521.3 821.5 518.4 821.5 517.5 818.6 515.9ZM846.4 515.7 845.1 515.9 835.1 521.1 834.2 521.7 834.2 523.3 835.3 523.5 845.1 518.8 846.1 517.7ZM493.2 515.0 491.0 514.8 489.8 515.2 487.1 518.1 486.6 519.3 486.6 521.5 487.8 522.9 486.6 524.0 486.8 525.1 487.8 525.1 491.5 523.5 495.2 522.9 496.4 521.3 496.2 520.2 491.7 520.4 488.8 519.0 488.8 518.6 489.5 517.9 490.5 518.1 491.5 519.0 492.5 518.8 493.5 517.0ZM425.4 513.9 423.0 517.2 426.4 519.3 426.9 519.3 429.1 516.3 429.1 515.4 426.4 513.9ZM805.3 510.9 802.9 513.9 802.9 514.3 806.4 516.3 807.2 516.3 809.4 513.6 809.6 512.7 808.0 511.6 806.4 510.9ZM933.0 526.2 930.2 524.2 926.9 522.9 924.9 522.9 922.1 523.8 919.0 525.8 917.1 528.3 916.5 529.9 916.5 531.9 917.6 534.4 917.3 534.6 916.5 534.4 914.8 533.0 913.7 530.3 912.6 511.4 912.0 510.7 909.8 512.7 909.5 513.4 910.1 525.8 910.3 526.0 910.3 532.6 908.4 534.4 907.8 534.6 906.4 534.4 904.4 532.6 901.9 531.7 897.7 532.3 896.0 533.2 893.2 535.5 891.0 539.1 889.0 543.6 888.8 542.0 889.3 538.5 890.4 535.3 893.5 530.5 893.2 529.6 892.4 529.6 889.9 532.1 887.6 533.7 885.1 534.6 882.0 534.6 878.4 533.9 874.5 532.3 871.1 529.9 870.2 529.9 869.1 531.4 866.0 532.8 863.2 535.0 861.8 537.5 861.0 541.7 861.3 551.3 863.2 564.4 864.1 573.4 864.9 573.7 866.0 572.1 866.0 564.4 863.5 544.5 863.5 540.4 865.2 538.8 866.9 537.8 868.6 537.5 869.7 542.3 870.8 544.5 872.5 546.5 873.9 546.5 875.0 545.2 875.9 542.9 876.4 538.8 879.5 540.1 884.8 540.7 886.8 539.7 887.1 540.1 886.5 543.6 886.8 551.0 888.2 555.1 889.6 557.0 890.1 557.0 892.7 553.2 891.6 546.8 891.8 542.6 893.0 539.7 894.6 537.8 897.7 536.2 900.8 536.2 904.2 539.4 905.8 540.4 907.8 540.7 909.2 540.1 910.9 537.8 912.0 534.1 914.3 538.8 916.8 540.7 922.1 540.4 927.7 538.5 931.4 536.5 933.3 535.3 935.0 531.0 934.7 530.7 933.6 531.0 930.5 532.6 927.1 533.7 924.1 533.7 921.5 531.7 919.9 529.0 920.7 528.0 923.2 527.1 925.8 526.7 929.7 526.7 932.2 527.4 932.8 527.1ZM610.9 510.5 608.2 513.9 612.0 515.9 612.5 515.9 615.0 513.0 615.0 512.1 611.7 510.5ZM975.5 510.0 972.7 514.3 972.5 516.3 975.0 531.2 975.2 538.8 975.8 539.7 976.6 538.8 977.4 535.5 977.7 526.9 977.4 526.7 977.4 523.5 977.2 523.3 976.1 511.6ZM828.8 510.0 826.1 514.5 826.1 517.5 828.3 530.3 828.8 539.4 829.4 539.7 830.5 537.5 831.0 534.6 831.0 525.3 830.7 525.1 830.7 522.4 829.4 510.9ZM707.6 510.0 705.2 514.3 705.0 516.1 707.1 530.7 707.4 538.1 707.8 539.7 708.3 539.4 708.8 538.1 709.5 534.1 709.5 526.2 709.3 526.0 709.3 523.1 708.1 511.4ZM523.7 508.9 522.9 509.1 521.5 511.6 521.7 522.2 521.0 526.5 519.8 529.6 515.4 522.6 510.3 516.1 504.3 509.8 503.3 509.4 502.3 509.6 501.6 513.0 501.8 515.7 505.7 519.5 506.2 519.7 506.9 519.5 507.7 518.4 508.9 519.3 514.4 526.0 518.3 532.3 515.4 535.3 513.5 536.5 511.3 536.2 510.3 536.9 509.8 538.1 509.8 540.4 510.1 541.4 511.1 542.3 518.1 542.6 520.3 542.0 521.7 540.4 522.0 536.5 520.7 531.9 522.0 529.6 523.2 525.6 524.1 519.5 524.1 515.2 525.6 513.6 525.6 512.5ZM519.1 534.6 519.5 535.0 519.8 536.2 518.1 536.5 517.8 535.9ZM962.5 508.0 961.1 508.0 958.6 509.1 954.2 513.0 953.1 515.4 953.1 516.6 953.9 518.1 954.8 518.6 955.9 518.6 957.0 516.6 958.9 518.4 956.4 520.6 954.5 521.5 952.6 522.0 952.0 522.4 952.6 523.3 954.5 523.1 957.5 521.7 960.3 519.0 961.4 519.7 962.8 519.7 963.1 517.7 961.7 516.8 962.0 513.6 961.4 512.7 959.5 512.5 958.6 513.0 957.3 514.8 956.7 516.3 955.0 515.7 955.3 513.9 958.4 511.1 960.3 510.7 961.4 511.4 962.5 511.4 963.1 510.9 963.6 509.4ZM956.7 516.3 957.0 516.1 957.3 516.3 957.0 516.6ZM958.9 515.2 959.5 515.0 960.0 515.7 959.7 515.9ZM669.7 507.1 668.9 507.1 668.4 507.5 667.4 509.4 667.4 511.1 667.9 512.3 669.5 520.2 670.3 528.3 668.2 529.6 666.3 529.9 664.0 531.7 663.2 533.5 663.2 535.9 661.6 537.8 656.1 541.4 649.0 544.9 649.3 546.2 654.2 545.8 658.4 544.9 661.9 542.6 664.7 538.8 667.9 540.4 670.8 540.4 672.1 538.8 673.4 535.0 673.4 533.2 671.6 531.2 672.6 528.5 673.1 524.9 671.6 513.9 673.1 511.6 673.1 510.7 671.6 509.6ZM664.7 533.5 666.1 532.8 667.9 533.0 669.5 533.7 671.0 535.5 670.5 535.7 667.4 535.0 665.3 534.1ZM830.5 498.1 827.8 497.9 826.7 498.3 824.5 500.1 823.2 502.4 823.2 504.4 824.5 505.7 823.2 507.1 823.2 507.8 823.7 508.2 829.4 506.4 832.3 506.0 834.0 504.4 833.7 503.3 829.1 503.5 826.7 502.8 825.6 501.9 826.4 501.0 827.2 501.0 829.1 502.1 830.2 501.2 830.7 500.1ZM709.0 498.1 706.6 497.9 705.0 498.8 703.3 500.8 702.6 502.1 702.4 504.2 703.8 506.0 702.6 506.9 702.6 508.0 703.6 508.2 707.1 506.6 710.7 506.0 712.1 504.4 711.9 503.3 707.8 503.5 706.6 503.3 704.7 502.1 704.7 501.5 705.2 501.0 705.9 501.0 707.8 502.1 708.6 501.5 709.3 499.9ZM1041.9 497.2 1041.1 497.0 1030.6 502.1 1029.2 503.5 1029.4 504.8 1031.4 504.4 1040.8 499.9 1041.3 499.2ZM1018.9 497.2 1018.1 497.0 1007.6 502.1 1006.2 503.5 1006.5 504.8 1008.4 504.4 1017.8 499.9 1018.4 499.2ZM993.2 497.2 992.4 497.0 981.9 502.1 980.5 503.5 980.8 504.8 982.7 504.4 992.1 499.9 992.7 499.2ZM928.3 497.0 926.9 497.2 916.5 502.4 915.7 503.0 915.7 504.6 916.8 504.8 926.9 500.1 928.0 499.0ZM897.2 503.0 898.3 504.4 899.7 504.8 902.5 504.6 904.2 504.8 914.5 500.1 915.7 498.8 915.9 497.0 914.0 497.4 906.1 501.5 905.6 500.8 905.6 499.9 904.4 498.3 901.9 497.0 900.0 497.0 898.8 497.6 897.4 499.4ZM898.6 500.8 899.7 499.4 900.8 499.2 903.0 499.9 904.4 501.2 903.3 502.1 899.7 502.1ZM868.3 497.0 867.2 497.6 865.8 499.4 865.5 503.0 866.0 503.9 867.2 504.6 870.5 504.8 872.2 504.4 873.3 503.5 874.2 501.2 873.9 499.9 872.8 498.3 870.2 497.0ZM866.9 500.8 868.0 499.4 869.1 499.2 871.4 499.9 872.8 501.2 871.6 502.1 868.0 502.1ZM816.9 497.0 815.9 497.6 814.5 499.4 814.2 503.0 814.8 503.9 815.9 504.6 819.1 504.8 820.7 504.4 821.8 503.5 822.6 501.2 822.3 499.9 821.3 498.3 818.8 497.0ZM815.6 500.8 816.7 499.4 817.7 499.2 819.9 499.9 821.3 501.2 820.2 502.1 816.7 502.1ZM806.7 497.2 805.9 497.0 795.6 502.1 794.2 503.5 794.5 504.8 796.4 504.4 805.6 499.9 806.1 499.2ZM779.9 497.0 778.8 497.6 777.5 499.4 777.2 503.0 777.7 503.9 778.8 504.6 782.1 504.8 783.7 504.4 784.8 503.5 785.6 501.2 785.3 499.9 784.2 498.3 781.8 497.0ZM778.6 500.8 779.6 499.4 780.7 499.2 782.9 499.9 784.2 501.2 783.1 502.1 779.6 502.1ZM771.3 497.2 771.0 497.0 769.6 497.2 759.4 502.6 758.8 503.3 758.8 504.6 759.9 504.8 769.4 500.3 770.4 499.4ZM730.4 497.0 729.3 497.6 728.0 499.4 727.7 503.0 728.3 503.9 729.3 504.6 732.6 504.8 734.2 504.4 735.3 503.5 736.1 501.2 735.8 499.9 734.8 498.3 732.3 497.0ZM729.1 500.8 730.2 499.4 731.2 499.2 733.4 499.9 734.8 501.2 733.7 502.1 730.2 502.1ZM690.3 497.0 688.8 498.1 688.1 499.2 687.6 500.8 687.6 502.6 688.1 503.7 689.1 504.6 689.8 504.8 692.9 504.6 694.8 502.8 695.0 500.1 694.3 498.8 693.1 497.6 691.7 497.0ZM689.1 500.3 690.0 499.4 690.7 499.2 691.9 499.4 693.8 501.0 693.8 501.5 693.1 502.1 690.0 502.1 689.1 501.2ZM653.7 497.0 652.7 497.6 651.4 499.4 651.1 503.0 651.6 503.9 652.7 504.6 655.8 504.8 657.4 504.4 658.4 503.5 659.2 501.2 659.0 499.9 657.9 498.3 655.6 497.0ZM652.4 500.8 653.5 499.4 654.5 499.2 656.6 499.9 657.9 501.2 656.9 502.1 653.5 502.1ZM584.2 497.0 582.3 498.3 581.5 499.7 581.2 502.8 582.0 504.2 583.6 504.8 587.2 504.6 589.4 502.8 589.6 501.9 589.4 499.7 588.5 498.5 586.9 497.4 585.8 497.0ZM582.8 500.1 583.6 499.4 584.7 499.2 586.1 499.4 588.0 500.8 588.3 501.5 587.2 502.1 583.9 502.1 582.8 501.5ZM538.2 497.0 536.3 498.3 535.4 499.7 535.2 502.8 536.0 504.2 537.6 504.8 541.2 504.6 543.3 502.8 543.6 501.9 543.3 499.7 542.5 498.5 540.9 497.4 539.8 497.0ZM536.8 500.1 537.6 499.4 538.7 499.2 540.1 499.4 542.0 500.8 542.2 501.5 541.2 502.1 537.9 502.1 536.8 501.5ZM527.3 497.2 526.6 497.0 517.4 502.1 516.1 503.5 516.4 504.8 518.1 504.4 526.3 499.9 526.8 499.2ZM488.0 497.0 487.1 497.6 485.8 499.4 485.6 503.0 486.1 503.9 487.1 504.6 490.0 504.8 491.5 504.4 492.5 503.5 493.2 501.2 493.0 499.9 492.0 498.3 489.8 497.0ZM486.8 500.8 487.8 499.4 488.8 499.2 490.8 499.9 492.0 501.2 491.0 502.1 487.8 502.1ZM430.8 497.0 429.1 497.4 420.5 502.4 419.8 503.0 419.8 504.6 420.5 504.8 429.6 500.1 430.6 498.8ZM678.4 495.8 678.1 495.6 676.8 495.8 666.8 501.2 666.3 501.9 666.3 503.3 667.4 503.5 676.5 499.0 677.6 498.1ZM831.0 492.0 829.1 492.5 822.6 495.6 822.1 496.1 822.1 497.4 823.2 497.6 830.5 494.7 831.0 494.3ZM753.7 492.2 753.1 492.0 751.8 492.2 750.4 492.9 749.4 494.0 748.5 495.4 748.5 496.5 751.0 498.8 748.0 501.2 743.7 503.7 743.9 504.8 745.3 504.8 748.3 503.3 752.9 499.4 754.5 499.9 755.3 499.2 755.6 497.6 754.2 497.0 754.8 495.8 754.8 493.8ZM750.4 495.2 751.5 494.7 752.3 495.4 752.3 496.1 752.1 496.3ZM709.5 492.2 708.8 492.0 702.4 495.4 701.7 496.1 701.7 497.4 701.9 497.6 703.1 497.4 709.0 494.7 709.5 494.0ZM634.6 492.0 633.2 492.2 630.8 494.3 630.2 495.2 630.2 496.7 632.7 498.8 628.9 501.7 628.6 500.1 627.8 498.8 626.4 497.6 624.8 497.0 623.1 497.0 621.5 498.1 620.4 499.9 620.1 502.6 620.7 503.7 621.8 504.6 626.7 504.8 630.2 503.0 634.3 499.4 635.7 499.9 636.8 499.4 637.3 497.9 635.9 497.0 636.5 495.6 636.5 494.0 635.9 492.9ZM621.8 500.3 622.9 499.4 623.7 499.2 625.0 499.4 627.2 501.0 627.2 501.5 626.4 502.1 622.9 502.1 621.8 501.2ZM632.1 495.2 632.7 494.7 633.5 494.9 634.0 496.1 633.8 496.3ZM562.7 492.0 561.3 492.2 558.9 494.3 558.3 495.2 558.3 496.7 560.8 498.8 558.0 501.0 553.1 503.9 553.7 504.8 554.8 504.8 557.2 503.7 562.4 499.4 563.8 499.9 564.9 499.4 565.4 497.9 564.0 497.0 564.6 495.6 564.6 494.0 564.0 492.9ZM560.2 495.2 560.8 494.7 561.6 494.9 562.1 496.1 561.9 496.3ZM503.0 492.2 502.5 492.0 501.3 492.2 500.1 492.9 499.1 494.0 498.4 495.4 498.4 496.5 500.6 498.8 497.6 501.5 493.9 503.7 494.2 504.8 495.4 504.8 497.9 503.5 502.3 499.4 503.8 499.9 504.5 499.2 505.0 498.1 503.8 497.0 504.0 493.6ZM500.3 495.2 501.1 494.7 501.8 495.4 501.8 495.8 501.3 496.1ZM460.8 492.2 460.3 492.0 459.1 492.2 457.1 493.8 456.1 495.6 456.1 496.3 456.6 497.2 458.6 498.5 456.4 500.8 451.7 503.9 452.2 504.8 453.2 504.8 455.6 503.5 460.0 499.4 461.8 499.9 462.5 499.0 462.7 497.9 461.5 497.0 462.0 494.5ZM458.1 495.2 458.8 494.7 459.8 496.1 459.6 496.3Z"/><path stroke="#1a1a1a" stroke-width="0.8" d="M642.2 680.4 640.1 678.9 638.3 678.4 636.4 680.7 634.5 679.6 633.2 679.4 630.6 683.2 634.5 685.7 635.1 685.5 636.7 682.9 639.6 684.7 642.2 681.2ZM884.2 676.3 882.5 676.8 874.1 682.4 873.4 683.2 873.4 685.0 874.1 685.2 883.0 679.9 884.0 678.6ZM1046.0 674.5 1037.0 678.1 1036.4 678.6 1036.7 680.7 1039.3 680.1 1046.0 677.6ZM963.6 673.3 961.4 673.8 950.3 679.4 949.4 680.1 949.4 681.9 950.3 682.2 962.0 676.8 963.3 675.6ZM775.1 673.3 773.9 673.3 762.2 679.4 761.3 680.1 761.3 681.9 762.2 682.2 773.9 676.6 774.8 675.3ZM668.0 673.5 667.7 673.3 666.4 673.5 657.1 679.1 656.0 680.1 655.8 681.7 656.8 682.2 666.1 677.1 667.5 675.8ZM529.6 673.5 528.3 673.3 514.6 679.6 513.9 680.4 514.3 682.2 517.7 681.2 527.6 676.8 529.0 675.6ZM435.0 673.5 434.7 673.3 433.0 673.5 421.0 679.1 419.7 680.1 419.3 681.7 420.7 682.2 432.7 677.1 434.4 675.8ZM422.7 666.1 419.7 669.2 419.3 670.2 424.1 672.5 424.8 672.5 427.9 668.9 427.9 668.2 426.2 667.1ZM520.1 664.1 517.4 666.9 517.0 667.9 521.1 670.0 522.5 670.2 525.6 666.1 523.5 664.9 521.5 664.1ZM829.9 662.8 827.2 666.6 828.0 667.4 831.5 669.2 833.7 666.1 833.9 664.9 832.6 663.8ZM466.5 663.8 463.7 662.3 462.0 661.8 461.0 661.8 458.9 664.1 455.9 662.8 454.8 662.8 451.4 666.6 456.2 668.9 457.6 668.4 459.3 666.4 463.0 668.2 466.5 664.6ZM1045.0 661.0 1042.2 660.8 1039.6 662.0 1037.7 664.1 1036.4 666.4 1036.4 668.2 1038.3 670.0 1037.0 670.7 1036.4 671.7 1037.0 672.5 1038.3 672.5 1041.5 671.2 1046.0 670.2 1046.0 667.1 1042.8 667.1 1040.6 666.4 1039.3 665.4 1040.2 664.6 1041.8 664.6 1043.1 665.6 1043.8 665.6 1044.7 664.9 1045.7 662.8 1045.7 661.8ZM817.5 647.4 813.9 648.9 811.8 651.5 812.3 652.5 814.8 652.7 816.1 653.4 811.5 657.7 808.6 663.3 807.2 669.7 807.2 673.0 808.0 676.8 809.4 679.4 811.3 681.4 813.7 682.9 816.4 684.0 822.3 685.0 828.3 685.0 832.6 684.0 839.3 680.9 840.2 680.1 839.1 679.6 824.8 679.9 818.3 678.9 814.5 677.3 811.0 674.3 809.9 672.2 809.4 670.5 809.4 666.4 810.7 662.6 812.6 660.0 815.0 657.7 819.1 655.3 819.6 655.3 823.7 658.5 827.5 659.8 828.8 659.8 831.2 658.7 833.9 656.4 836.1 658.0 840.2 659.5 843.4 659.3 844.7 658.0 845.5 655.9 845.8 653.6 845.0 650.4 844.2 649.3 843.7 649.5 842.0 653.0 842.0 653.6 842.9 654.4 842.6 654.9 839.9 654.4 837.4 653.4 835.6 652.1 834.7 652.1 832.9 653.6 831.2 654.2 829.1 654.7 827.2 654.7 824.2 653.8 825.3 653.4 827.2 651.5 827.2 650.0 826.1 648.9 823.9 647.8 821.5 647.2ZM935.4 647.2 934.8 647.0 934.1 647.2 932.5 651.0 932.5 652.3 935.7 654.7 937.3 656.7 937.6 657.7 936.3 659.5 931.9 662.8 925.2 665.9 922.7 666.6 919.2 666.6 917.6 666.1 915.7 666.1 915.4 666.4 916.0 667.1 923.0 669.7 926.5 670.2 930.6 668.9 932.5 667.9 936.0 665.1 939.2 660.3 939.8 658.0 939.8 654.2 938.2 650.2ZM717.1 647.4 716.3 647.0 714.7 646.7 712.9 648.0 711.5 650.0 710.2 653.6 710.5 655.9 711.8 657.5 714.5 657.7 715.3 657.5 716.6 656.2 717.4 657.5 716.6 659.0 714.2 661.5 709.4 665.4 707.3 666.4 704.9 666.9 702.2 666.9 702.0 667.1 699.6 666.9 699.3 667.7 699.9 668.2 706.2 669.7 709.9 669.7 712.9 667.9 715.8 664.6 718.2 660.3 719.5 655.3 719.5 651.2 719.0 649.7ZM712.6 652.3 713.4 651.7 714.5 651.5 715.8 652.5 715.3 653.0 713.9 653.2ZM700.1 650.4 699.6 650.0 694.0 650.0 689.5 649.3 685.5 648.2 682.9 647.2 677.6 646.1 675.4 646.7 673.0 648.7 672.2 650.8 678.3 650.6 682.1 651.5 684.2 652.3 682.3 653.2 677.6 654.2 671.7 654.7 669.6 653.4 668.0 650.8 666.9 650.8 666.1 653.0 664.8 654.4 663.7 654.4 661.4 653.4 661.6 650.8 660.8 650.6 659.2 653.2 658.2 654.0 655.8 654.7 653.4 654.7 652.6 654.4 648.9 651.0 647.3 650.8 644.1 652.1 640.7 654.9 637.7 659.5 637.5 662.3 638.5 663.6 640.4 664.3 643.0 664.9 648.4 665.1 649.4 665.6 646.2 667.1 641.4 668.7 635.3 669.7 631.9 669.7 629.2 669.2 626.6 667.7 625.3 666.1 624.2 663.6 624.2 660.5 625.0 658.2 627.1 654.9 627.1 654.4 626.3 654.0 625.0 655.3 622.3 661.0 621.8 663.3 622.1 668.9 623.1 671.0 624.7 672.7 628.2 674.5 630.6 675.0 635.3 675.0 642.0 673.8 646.2 672.2 649.1 670.7 652.6 667.9 653.1 666.6 653.1 663.8 652.1 662.0 649.4 661.0 642.8 660.0 640.4 658.5 640.4 658.0 642.0 656.4 645.2 655.1 647.0 655.3 649.4 658.0 652.1 659.5 653.4 659.8 655.3 659.5 657.9 658.0 660.0 659.5 663.7 660.0 665.3 659.0 666.9 655.7 668.0 657.5 669.6 659.0 671.5 659.8 672.5 659.8 676.8 658.7 682.9 655.9 689.8 654.2 691.9 654.0 698.0 654.2 699.6 651.9ZM904.5 647.0 902.8 645.9 901.9 645.9 900.4 646.5 895.8 653.0 893.7 654.4 891.5 654.7 889.3 652.3 888.8 652.1 888.3 652.3 886.9 654.9 886.9 655.9 887.9 658.2 888.3 661.5 888.1 665.1 886.9 666.4 883.8 668.2 880.6 668.9 875.3 668.9 873.6 668.4 871.9 667.4 871.0 666.1 870.2 664.1 870.5 661.5 872.2 657.7 872.2 656.7 871.7 656.7 869.0 662.6 868.3 665.9 868.3 668.4 869.5 671.5 870.5 672.7 872.2 674.0 874.8 675.0 878.7 675.0 881.1 674.5 885.0 672.5 886.9 670.7 888.8 667.7 890.5 663.3 891.0 660.0 893.4 659.5 894.1 659.0 895.6 657.2 897.0 654.2 899.2 655.5 902.6 657.0 903.8 657.0 906.7 653.6 906.7 652.7 906.0 649.7ZM899.2 650.2 900.2 649.5 901.6 649.5 902.8 650.4 903.3 651.7 903.1 651.9 901.4 651.7ZM976.0 644.8 973.2 647.6 973.2 648.2 977.9 650.2 981.1 646.7 979.5 645.7 977.0 644.8ZM879.2 644.2 876.7 647.2 878.2 648.2 880.6 649.3 882.8 646.5 882.8 645.7 880.1 644.2ZM543.1 644.2 541.0 647.0 541.0 647.4 543.8 649.1 544.8 649.3 546.6 646.7 546.9 645.9 545.2 644.6ZM584.6 648.9 584.2 648.2 580.7 647.6 577.4 646.5 570.3 642.7 568.9 642.2 565.4 642.5 563.5 643.5 561.9 645.2 562.1 646.1 562.6 646.3 566.3 646.1 568.0 646.5 569.6 647.4 565.4 648.0 562.1 649.3 560.7 650.6 559.1 653.4 558.1 654.2 557.0 654.7 554.8 654.4 552.7 652.1 551.8 652.7 550.6 655.3 552.0 660.3 552.0 665.1 548.3 667.9 544.8 668.9 539.4 668.9 536.8 667.9 535.4 666.4 534.7 664.6 534.9 661.0 536.6 657.5 536.6 656.7 536.1 656.7 534.4 659.8 532.8 665.1 533.0 670.0 534.2 672.0 535.4 673.3 538.9 675.0 542.7 675.0 546.4 674.0 548.3 673.0 551.1 670.2 553.7 665.1 554.8 660.0 557.4 659.3 558.6 658.0 560.0 655.5 562.6 657.0 565.6 658.0 567.5 658.0 568.5 657.0 569.4 654.9 569.4 653.2 568.0 650.8 568.5 650.4 574.6 650.2 579.2 651.0 581.8 651.9 583.0 651.9 583.7 651.2ZM561.7 652.1 562.4 651.5 564.0 651.5 565.4 652.1 567.0 653.6 565.6 653.8 563.5 653.2ZM664.5 642.5 662.7 641.2 660.6 640.5 658.7 642.5 656.8 641.6 655.8 641.6 653.4 644.4 653.4 644.8 657.1 646.7 657.9 646.5 659.2 644.8 662.2 645.9 664.3 643.3ZM994.7 641.6 992.8 640.5 990.3 639.7 989.3 639.9 987.8 641.6 983.9 640.5 981.1 643.1 980.8 644.0 985.2 645.9 985.8 645.9 988.1 643.5 991.6 645.0 994.1 642.7ZM849.1 641.4 847.7 640.5 845.3 639.7 843.1 641.6 840.2 640.5 839.6 640.8 837.2 643.7 841.2 645.9 842.0 645.5 843.4 643.7 846.6 645.0 849.1 642.2ZM946.8 654.9 947.1 657.0 948.7 658.2 950.3 658.7 956.7 658.7 959.8 658.0 962.4 656.2 963.6 654.4 964.3 654.2 965.2 656.4 966.5 658.2 967.4 659.0 969.7 659.8 970.6 659.8 973.5 658.7 976.7 656.4 981.7 659.0 983.9 659.5 987.1 659.5 988.4 659.0 989.7 657.7 990.6 654.9 990.6 653.0 989.7 650.2 988.4 649.3 986.2 653.2 987.4 654.7 987.1 654.9 983.6 654.4 978.6 652.1 977.3 652.3 975.4 653.6 973.5 654.2 970.0 654.7 968.4 653.4 967.1 650.6 964.9 639.3 964.3 638.8 963.6 639.0 961.7 642.0 961.7 644.2 963.3 650.6 963.0 651.9 961.7 652.7 957.3 653.8 951.6 653.8 950.0 653.4 949.4 652.5 948.4 652.1 947.8 652.5ZM685.5 638.2 682.9 641.0 682.9 641.6 686.8 643.5 687.6 642.9 689.5 640.1 687.6 638.8ZM472.6 637.3 469.9 639.7 469.5 640.8 474.0 642.5 475.0 642.5 478.1 639.3 476.4 638.2 473.6 637.3ZM657.1 636.3 654.5 639.5 658.2 641.6 658.7 641.6 660.6 639.5 661.1 638.0 659.2 636.9ZM772.1 635.8 769.3 638.4 769.0 639.3 773.6 641.2 776.0 638.8 776.7 637.8 774.8 636.7ZM1021.1 633.5 1018.2 636.3 1018.2 636.7 1022.0 638.4 1023.3 638.6 1025.9 636.0 1026.2 635.2 1023.9 633.9ZM961.1 631.8 958.2 634.5 958.2 635.0 962.7 636.9 963.3 636.9 965.9 634.3 966.2 633.5 964.3 632.4 962.4 631.8ZM782.5 631.5 781.6 631.5 781.0 632.0 780.0 633.9 780.0 635.4 784.6 650.6 785.6 654.7 785.6 657.5 785.0 658.0 782.5 657.5 780.3 655.7 777.9 651.2 775.4 642.9 774.5 642.7 772.7 644.8 772.7 646.5 773.9 649.7 774.8 654.0 773.3 655.3 769.0 656.4 764.7 656.4 763.8 656.2 762.2 654.9 761.6 654.7 761.0 654.9 760.1 657.0 760.1 660.0 761.0 661.5 761.9 662.0 767.5 662.0 771.4 661.3 774.2 659.8 776.0 657.0 777.0 658.0 778.5 661.3 781.3 663.6 782.8 664.1 784.6 664.1 785.9 663.6 787.7 661.5 788.6 658.5 788.6 651.2 787.7 647.0 785.0 638.4 785.0 637.3 786.2 635.8 786.2 635.0 784.3 633.7 783.4 632.2ZM1040.2 631.3 1037.0 635.4 1036.7 637.3 1039.6 651.5 1039.9 658.2 1040.6 659.0 1041.5 658.2 1042.5 655.5 1042.8 647.4 1042.5 647.2 1042.5 644.2 1042.2 644.0 1040.9 632.8ZM857.4 631.3 855.0 635.0 854.5 636.9 856.9 650.8 857.2 656.2 857.7 659.0 858.2 658.7 858.8 657.7 859.6 654.4 859.6 646.3 859.3 646.1 859.3 643.5 858.0 632.4ZM797.8 631.3 794.8 635.4 794.5 637.3 797.2 651.5 797.5 658.2 798.2 659.0 799.1 658.2 800.0 655.5 800.3 647.4 800.0 647.2 800.0 644.2 799.7 644.0 798.5 632.8ZM613.0 631.3 610.7 635.4 610.4 637.3 612.5 651.5 612.8 658.2 613.3 659.0 614.0 658.2 614.7 655.5 614.9 647.4 614.7 647.2 614.7 644.2 614.4 644.0 613.5 632.8ZM495.5 634.5 493.1 632.8 491.4 630.5 490.4 630.7 488.7 633.0 492.8 651.5 492.8 653.4 490.7 654.4 485.6 654.7 481.5 653.8 484.2 652.5 485.6 651.2 485.2 649.5 482.9 648.2 478.8 647.2 474.0 647.2 469.9 648.5 467.5 650.0 466.8 650.8 466.5 652.1 467.1 652.5 470.2 652.7 472.3 653.4 471.9 653.8 469.5 654.4 465.1 654.7 462.0 653.2 461.7 651.9 460.7 651.9 458.6 653.4 456.9 654.0 452.5 654.7 449.4 654.7 448.4 654.4 446.6 653.4 446.6 652.7 445.6 652.3 444.3 654.0 443.2 654.7 438.5 655.7 428.9 657.2 420.4 657.5 420.0 657.7 419.7 657.5 415.2 657.5 408.4 656.2 404.3 654.0 403.3 652.5 403.3 651.7 405.3 648.9 404.0 648.7 401.9 650.8 400.5 653.2 400.2 654.9 400.9 657.5 401.9 659.0 404.6 661.0 409.4 662.6 415.9 663.3 422.7 663.3 431.3 662.3 438.1 660.5 445.6 657.2 448.7 659.3 451.8 659.8 456.6 658.5 459.3 656.7 460.7 658.0 463.0 659.3 466.5 659.8 470.9 658.5 476.7 655.3 482.2 658.5 485.6 659.5 489.0 659.8 492.8 657.7 494.5 655.3 495.2 653.6 495.5 648.0 493.4 636.5ZM1000.6 630.3 998.4 632.4 997.4 633.9 999.3 641.8 1000.0 654.2 1001.2 657.2 1003.2 658.7 1005.4 659.5 1007.6 659.8 1010.5 659.5 1016.9 657.5 1018.8 657.5 1024.6 659.8 1026.2 659.8 1027.1 657.0 1026.8 654.2 1024.6 653.4 1020.1 652.5 1017.5 650.8 1016.9 649.3 1016.9 647.2 1019.1 645.5 1022.0 644.4 1023.9 644.4 1026.8 645.7 1028.1 645.7 1030.0 643.3 1030.3 642.5 1030.0 641.6 1028.7 640.8 1026.2 639.9 1023.0 639.9 1019.5 641.0 1015.6 644.0 1013.4 647.8 1013.4 650.6 1014.7 653.6 1014.0 654.0 1010.2 654.7 1007.0 654.7 1005.4 654.2 1003.8 653.4 1002.8 651.9 1002.2 637.5 1001.2 630.9ZM504.7 630.3 501.6 633.5 501.6 635.4 502.7 638.0 503.7 643.7 504.0 653.8 504.7 655.9 505.7 657.5 507.1 658.5 510.2 659.5 517.7 659.8 522.1 659.0 524.2 658.2 526.2 656.7 527.6 654.7 527.6 650.6 526.9 649.1 525.6 647.8 524.2 648.0 521.8 651.0 521.8 651.7 523.5 653.4 523.2 654.0 517.4 654.9 511.9 654.7 509.8 654.2 507.5 652.5 506.4 636.9 505.4 630.7ZM602.2 628.3 601.1 629.0 600.1 631.3 601.1 634.5 603.4 648.0 603.4 650.2 602.7 650.6 600.6 650.8 599.7 650.6 598.5 649.5 598.0 649.5 596.6 653.0 596.6 654.0 598.2 655.5 598.2 656.7 597.3 658.5 594.0 662.0 589.3 664.6 586.5 664.9 583.9 664.1 583.0 664.3 583.2 665.4 588.4 668.4 591.4 668.7 595.2 666.6 596.8 664.9 599.2 660.3 599.9 656.2 603.4 655.1 604.8 653.8 605.8 651.9 606.0 645.9 604.1 634.8 605.5 632.6 605.5 631.8 603.2 629.6ZM772.7 620.0 772.1 619.8 771.4 620.0 770.8 621.9 769.6 622.8 768.7 622.8 768.1 622.3 767.8 621.5 768.1 620.6 766.8 620.2 766.2 620.6 765.3 622.8 763.8 623.8 762.8 623.8 762.2 623.4 762.5 620.9 761.0 620.6 759.8 622.6 759.5 624.9 760.1 626.0 762.2 627.1 761.9 627.3 755.8 628.3 744.1 631.3 738.9 633.0 735.5 635.2 734.0 637.1 732.8 639.9 732.8 640.8 733.4 641.6 736.7 644.0 738.0 644.0 738.6 643.5 742.0 645.9 745.6 649.3 746.6 650.6 746.9 651.9 746.0 652.5 744.1 653.0 741.3 653.0 739.8 651.9 738.9 652.1 738.0 654.7 738.0 656.4 740.4 658.7 740.7 660.0 740.1 661.3 736.4 664.3 732.8 666.4 729.7 667.4 726.9 667.7 722.0 667.4 721.7 667.9 722.0 668.7 728.8 671.0 733.1 671.5 736.4 670.2 739.2 667.9 742.3 663.1 743.5 658.5 746.6 657.5 748.4 655.9 749.6 653.6 749.6 649.5 748.1 645.9 744.7 641.8 739.5 637.3 752.4 633.7 769.0 630.3 769.6 629.6 770.2 627.1 769.9 626.0 771.7 624.7 773.0 621.9ZM767.5 626.0 765.6 626.6 764.7 626.4 766.2 625.3ZM595.0 620.2 594.3 619.8 593.8 620.0 593.3 621.9 592.4 622.8 591.7 622.8 591.2 622.3 591.0 621.5 591.2 620.6 590.3 620.2 589.8 620.6 589.1 622.8 587.9 623.8 587.2 623.8 586.8 623.4 587.0 620.9 585.8 620.6 584.6 623.6 584.6 624.9 585.1 626.0 585.8 626.6 587.5 626.8 589.1 626.2 589.8 625.3 590.7 626.0 592.8 625.8 594.3 624.3 595.0 621.9ZM905.3 618.9 903.6 619.3 895.1 624.1 894.4 624.7 894.4 626.2 895.1 626.4 904.0 621.9 905.0 620.6ZM823.7 618.9 821.8 619.3 812.3 624.1 811.5 624.7 811.5 626.2 812.3 626.4 822.3 621.9 823.4 620.6ZM748.1 618.9 746.0 620.2 745.0 621.5 744.7 624.5 745.6 625.8 747.5 626.4 751.5 626.2 753.9 624.5 754.2 623.6 753.9 621.5 753.0 620.4 751.2 619.3 750.0 618.9ZM746.6 621.9 747.5 621.3 748.7 621.1 750.3 621.3 752.4 622.6 752.7 623.2 751.5 623.8 747.8 623.8 746.6 623.2ZM737.7 618.9 735.5 619.3 724.8 624.1 723.8 624.7 723.8 626.2 724.8 626.4 736.1 621.9 737.4 620.6ZM718.4 619.1 718.2 618.9 716.8 619.1 706.8 624.3 706.2 624.9 706.2 626.2 707.3 626.4 716.6 622.1 717.6 621.3ZM691.4 619.1 691.1 618.9 689.8 619.1 679.7 624.3 679.1 624.9 679.1 626.2 680.2 626.4 689.5 622.1 690.6 621.3ZM635.6 619.1 635.3 618.9 634.0 619.1 623.9 624.3 623.4 624.9 623.4 626.2 624.5 626.4 633.7 622.1 634.8 621.3ZM574.6 618.9 573.1 620.0 572.4 621.1 572.0 622.6 572.0 624.3 572.4 625.3 573.4 626.2 574.1 626.4 577.1 626.2 579.0 624.5 579.2 621.9 578.5 620.6 577.4 619.6 576.0 618.9ZM573.4 622.1 574.3 621.3 575.0 621.1 576.2 621.3 578.1 622.8 578.1 623.2 577.4 623.8 574.3 623.8 573.4 623.0ZM564.5 618.9 563.3 619.1 554.6 624.1 553.9 624.7 553.9 626.2 554.8 626.4 563.3 621.9 564.2 620.9ZM548.5 619.1 548.3 618.9 547.1 619.1 538.2 624.3 537.7 624.9 537.7 626.2 538.7 626.4 546.9 622.1 547.8 621.3ZM489.3 618.9 487.0 620.2 485.9 621.5 485.6 624.5 486.6 625.8 488.7 626.4 493.1 626.2 495.8 624.5 496.2 623.6 495.8 621.5 494.8 620.4 492.8 619.3 491.4 618.9ZM487.6 621.9 488.7 621.3 490.0 621.1 491.7 621.3 494.1 622.6 494.5 623.2 493.1 623.8 489.0 623.8 487.6 623.2ZM482.9 618.9 480.5 619.3 468.5 624.1 467.5 624.7 467.5 626.2 468.5 626.4 481.2 621.9 482.5 620.6ZM454.5 618.9 452.5 620.0 451.4 621.1 450.7 622.6 450.7 624.3 451.4 625.3 452.8 626.2 453.8 626.4 458.3 626.2 461.0 624.5 461.3 621.9 460.3 620.6 458.6 619.6 456.6 618.9ZM452.8 622.1 454.2 621.3 455.2 621.1 456.9 621.3 459.6 622.8 459.6 623.2 458.6 623.8 454.2 623.8 452.8 623.0ZM990.3 614.9 988.4 614.2 986.8 614.6 984.9 615.9 983.6 617.6 983.6 618.3 984.3 619.1 986.8 620.4 982.4 623.4 981.7 621.5 979.8 619.8 977.6 618.9 975.1 619.1 973.5 620.2 972.2 622.3 972.2 624.5 973.2 625.8 975.1 626.4 979.8 626.4 984.3 624.5 988.7 621.3 990.9 621.7 992.2 620.4 992.2 619.8 990.6 618.9 991.2 616.6ZM974.1 621.9 975.1 621.3 976.3 621.1 977.9 621.3 980.1 622.6 980.5 623.2 979.2 623.8 975.4 623.8 974.1 623.2ZM986.2 617.2 987.1 616.8 988.4 618.1 988.1 618.3ZM933.8 614.2 932.2 614.4 929.4 616.4 928.7 617.2 928.7 618.7 931.6 620.6 928.4 622.8 922.7 625.6 923.3 626.4 924.6 626.4 927.5 625.3 933.5 621.3 935.1 621.7 936.3 621.3 937.0 619.8 935.4 618.9 936.0 617.6 936.0 616.1 935.4 615.1ZM931.0 617.2 931.6 616.8 932.5 617.0 933.2 618.1 932.9 618.3ZM1031.0 614.2 1030.6 614.0 1019.1 617.4 1018.8 618.9 1016.6 619.3 1005.4 624.1 1004.4 624.7 1004.4 626.2 1005.4 626.4 1017.9 621.5 1018.2 621.9 1017.5 623.0 1017.5 625.3 1018.5 626.4 1019.8 626.8 1021.4 626.8 1023.0 626.4 1024.6 625.3 1025.9 626.0 1028.7 625.8 1030.3 624.5 1031.0 623.4 1031.6 621.1 1031.3 620.0 1030.3 619.8 1029.7 620.2 1029.4 621.5 1028.7 622.3 1027.8 622.8 1027.1 622.8 1026.2 622.1 1026.2 620.4 1024.9 620.2 1023.6 622.6 1022.0 623.8 1021.1 623.8 1020.1 623.2 1020.7 621.3 1020.1 620.6 1018.8 620.9 1018.5 620.2 1019.1 618.7 1020.1 618.9 1030.6 616.4ZM848.0 614.2 847.7 614.0 846.6 614.2 838.3 617.2 837.7 617.6 838.0 619.1 828.0 624.1 827.2 624.7 827.2 626.2 828.0 626.4 836.4 622.6 836.6 622.8 836.4 624.9 836.9 626.0 837.7 626.6 838.5 626.8 840.4 626.6 841.5 626.2 842.3 625.3 843.4 626.0 845.8 625.8 847.4 624.3 848.3 621.9 848.3 620.2 847.4 619.8 846.9 620.0 846.4 621.9 845.3 622.8 844.5 622.8 843.9 622.3 843.7 621.5 843.9 620.6 842.9 620.2 842.3 620.6 841.5 622.8 840.2 623.8 839.3 623.8 838.8 623.4 839.3 618.7 847.4 616.4 848.0 615.3ZM594.7 614.2 594.5 614.0 593.5 614.2 586.3 617.2 585.8 617.6 585.8 618.7 586.5 618.9 594.3 616.4 594.7 615.3Z"/><path stroke="#1a1a1a" stroke-width="0.8" d="M881.7 743.4 879.9 743.9 870.3 748.8 870.0 750.8 871.1 750.8 879.9 746.7 881.4 745.2ZM797.9 743.6 797.6 743.4 796.5 743.6 787.5 748.4 786.7 749.1 786.4 750.6 787.8 750.8 796.2 746.7 797.3 745.4ZM716.4 743.4 714.6 743.9 704.4 748.8 704.1 750.8 705.3 750.8 714.6 746.7 716.1 745.2ZM881.4 739.7 879.7 739.9 871.1 744.1 869.7 745.2 869.2 746.7 870.0 746.9 879.9 742.6 881.1 741.5ZM797.6 739.9 796.5 739.7 787.2 744.3 786.2 745.4 785.9 746.9 787.8 746.5 796.5 742.3ZM716.1 739.7 714.3 739.9 705.3 744.1 703.8 745.2 703.2 746.7 704.1 746.9 714.6 742.6 715.8 741.5ZM1018.8 738.0 1016.9 738.4 1007.4 743.2 1006.6 743.9 1006.6 745.4 1007.4 745.6 1017.4 741.0 1018.5 739.9ZM961.7 738.0 959.8 738.4 949.8 743.2 949.0 743.9 949.0 745.4 949.8 745.6 960.3 741.0 961.5 739.9ZM916.0 738.2 914.9 738.0 903.5 743.4 903.0 744.1 903.2 745.6 906.1 744.7 914.3 741.0 915.4 739.9ZM749.4 738.2 749.1 738.0 747.6 738.2 737.1 743.0 735.9 743.9 735.6 745.2 736.8 745.6 747.3 741.2 748.8 740.2ZM1028.5 730.3 1026.1 733.4 1029.9 735.4 1030.4 735.4 1032.3 733.2 1032.8 731.7 1029.9 730.3ZM954.9 730.3 952.4 733.0 952.4 733.4 955.8 735.2 956.9 735.4 959.5 732.4 959.5 731.9 957.5 730.7ZM728.1 730.1 725.7 729.0 724.2 728.6 723.3 728.6 721.2 730.3 718.8 729.4 717.6 729.4 714.9 731.9 714.9 732.4 719.1 734.3 720.0 734.1 721.8 732.1 724.5 733.4 725.4 733.4 728.1 730.5ZM810.4 727.7 808.0 729.9 807.7 730.7 811.8 732.6 814.5 729.8 814.5 729.4 813.4 728.6ZM851.0 716.9 850.2 716.5 848.6 716.3 846.7 717.4 845.3 719.1 844.0 722.3 844.2 724.3 845.6 725.5 848.3 725.6 849.1 725.5 850.5 724.5 851.3 725.5 850.5 726.6 848.1 728.4 843.1 731.3 841.0 732.1 838.5 732.6 835.8 732.6 835.5 732.8 833.0 732.6 832.8 733.2 833.3 733.7 839.9 735.0 843.7 735.0 846.7 733.4 849.7 730.7 852.1 727.5 853.5 723.8 853.5 720.2 853.0 718.9ZM846.4 721.2 847.2 720.6 848.3 720.4 849.7 721.4 849.1 721.7 847.8 721.9ZM823.0 721.0 822.1 720.6 815.1 720.1 809.9 718.8 803.6 716.5 799.5 716.3 797.3 716.9 796.0 717.8 794.3 720.1 794.3 720.8 795.1 721.0 799.2 720.2 803.1 720.2 805.5 721.0 804.7 721.4 803.1 721.4 797.3 722.5 796.2 722.5 794.6 724.2 794.6 724.9 796.8 725.8 796.2 726.6 793.0 729.2 788.6 731.1 785.9 731.9 782.9 731.9 780.2 731.3 778.2 730.5 777.7 731.3 780.7 733.2 784.8 735.2 787.2 735.4 789.4 735.0 792.7 733.4 794.9 731.7 796.8 729.4 798.4 725.5 799.0 725.1 805.2 724.0 810.1 723.4 815.1 723.4 819.4 724.2 820.8 724.2 822.4 722.3ZM968.8 715.2 967.5 715.2 966.7 715.6 966.7 716.1 963.7 720.1 962.6 723.0 962.9 726.0 964.0 727.1 966.1 727.9 968.8 727.9 972.1 726.8 973.7 725.1 974.8 722.3 974.5 719.7 973.7 718.2 972.1 716.7ZM965.0 721.7 965.8 720.8 967.7 720.4 970.2 721.0 972.3 722.5 970.4 723.2 966.9 723.4 965.0 722.7ZM873.4 715.2 872.6 715.8 872.6 716.5 870.0 719.3 868.3 724.0 868.9 726.2 870.6 727.5 872.3 727.9 874.8 727.9 877.7 727.1 879.9 725.3 881.1 722.9 881.1 720.1 879.9 718.0 877.4 716.1 875.1 715.2ZM870.9 721.9 872.3 720.6 874.0 720.4 877.1 721.4 878.5 722.7 876.8 723.2 873.1 723.4 872.0 723.2 870.9 722.5ZM721.5 714.7 718.2 714.5 713.1 715.4 704.7 718.4 701.4 720.4 700.5 721.9 700.5 723.0 701.1 723.4 698.1 725.3 696.9 727.0 696.0 729.2 696.0 732.1 698.4 741.0 698.7 745.6 699.3 746.2 700.2 745.8 700.8 744.3 701.1 739.3 698.4 728.1 699.9 727.3 704.4 726.6 707.1 726.4 712.8 726.6 713.4 726.4 715.2 723.6 714.9 722.9 712.8 721.7 708.3 720.2 712.2 718.9 714.9 718.4 717.6 718.4 718.8 718.9 719.4 719.9 720.0 720.1 721.2 719.9 722.7 718.9 724.2 717.3 723.9 715.8ZM1045.0 715.6 1043.6 713.7 1041.2 712.0 1040.1 711.9 1038.8 712.0 1037.2 713.3 1036.1 714.8 1035.3 717.1 1035.5 720.4 1037.4 721.4 1039.3 721.4 1041.5 720.8 1042.8 719.7 1043.4 719.7 1043.9 720.8 1042.8 721.7 1039.0 722.9 1034.2 723.2 1032.6 722.3 1030.9 718.9 1029.9 714.7 1029.0 713.9 1028.5 713.9 1027.7 714.5 1026.6 716.1 1028.0 721.5 1026.4 722.7 1024.5 723.2 1022.0 723.0 1020.1 721.7 1018.8 719.9 1017.7 719.9 1016.9 721.9 1015.5 723.0 1013.1 722.7 1012.0 722.1 1012.6 720.1 1011.8 719.7 1011.0 720.1 1009.9 722.1 1008.0 723.0 1004.2 723.2 1002.9 722.5 1002.0 721.2 999.3 721.4 991.0 723.0 989.9 723.8 989.1 725.5 989.1 726.6 990.7 728.3 990.7 729.0 988.8 731.1 986.6 732.8 983.9 734.3 980.4 735.4 977.2 735.8 973.4 735.2 973.1 735.6 974.2 736.7 978.8 738.4 982.3 738.9 984.8 738.2 987.7 736.3 991.0 732.6 992.6 729.6 992.9 727.1 994.2 726.4 998.3 725.6 1000.2 725.6 1001.5 726.6 1003.9 727.1 1006.1 727.0 1008.8 725.8 1009.9 726.6 1011.5 727.1 1014.5 727.3 1015.3 727.1 1016.6 726.2 1017.4 724.3 1018.0 724.2 1020.1 726.4 1021.5 727.0 1023.4 727.1 1025.8 726.4 1027.4 725.3 1028.2 724.2 1029.0 723.8 1030.1 725.3 1032.0 726.6 1033.1 727.0 1036.3 727.1 1038.8 726.8 1042.6 725.3 1045.3 723.0 1045.8 721.7 1045.8 717.6ZM1037.2 717.3 1037.4 716.3 1038.0 716.0 1039.6 716.1 1040.7 717.1 1039.3 717.6 1037.7 717.6ZM1015.5 712.8 1014.7 712.0 1011.5 710.9 1011.0 711.1 1009.6 712.6 1007.7 711.9 1006.6 711.9 1004.5 713.9 1004.2 714.7 1007.7 716.3 1008.3 716.3 1010.1 714.7 1012.8 715.6ZM958.9 712.0 958.0 711.3 955.5 710.4 952.4 710.4 949.8 711.1 948.4 711.9 946.4 713.5 944.1 717.1 943.9 718.9 945.3 722.3 943.9 722.9 941.3 723.2 937.6 723.2 934.8 722.9 934.2 722.5 937.0 720.8 937.6 719.5 937.3 718.9 935.6 717.8 931.6 716.7 927.9 716.7 926.2 717.1 923.7 718.2 922.3 719.3 921.7 720.1 921.7 721.2 925.7 721.7 926.5 722.1 926.2 722.5 922.8 723.2 920.3 723.2 916.9 722.7 916.6 722.5 918.6 719.9 919.1 716.7 918.3 714.5 917.1 713.7 915.4 713.5 912.6 714.7 909.5 716.7 907.2 719.3 906.1 722.7 900.7 723.2 899.5 722.7 898.1 721.0 897.3 721.4 895.3 724.3 895.3 725.3 897.8 727.1 897.8 727.9 896.4 729.4 893.6 731.5 888.5 734.1 885.9 734.7 879.9 734.5 879.9 735.0 881.1 735.6 885.9 737.1 890.5 737.3 892.2 736.9 893.6 736.3 896.4 734.1 899.0 730.7 900.1 727.1 902.4 727.1 907.8 726.0 910.1 725.3 910.9 725.3 913.5 726.2 918.3 727.1 921.4 727.1 922.8 727.0 925.7 726.0 930.2 723.6 933.3 725.6 937.3 727.0 940.4 727.1 943.3 726.6 946.1 725.6 949.0 725.5 954.1 727.1 955.2 727.1 956.1 726.2 956.3 724.7 956.1 723.0 954.6 722.3 949.5 721.2 947.5 719.7 947.0 717.6 947.5 716.3 951.0 714.5 953.2 714.3 956.1 715.4 957.2 715.4 958.6 713.7ZM914.6 718.0 915.7 718.9 915.7 720.2 914.0 721.0 911.5 721.2 909.2 719.7 911.2 718.2 913.2 717.8ZM926.5 708.1 924.0 710.9 927.7 712.6 928.5 712.6 931.1 710.2 931.1 709.6 929.4 708.7ZM1008.0 707.2 1005.5 709.4 1005.3 710.2 1009.3 711.9 1012.0 709.2 1012.0 708.9 1010.4 707.9ZM880.5 707.4 878.8 706.5 876.2 705.9 874.3 707.6 871.7 706.6 870.9 706.6 868.0 709.4 872.6 711.3 874.5 709.2 878.0 710.5 880.2 708.3ZM1037.7 705.7 1035.3 708.1 1035.3 708.5 1038.8 710.2 1039.6 710.2 1042.0 707.6 1042.0 707.2 1040.4 706.3 1038.8 705.7ZM913.2 704.8 910.6 707.0 910.3 707.8 914.6 709.4 915.4 708.9 917.4 706.5 915.4 705.3ZM831.4 702.9 828.7 706.6 828.7 709.1 830.9 719.7 831.4 726.4 832.0 726.6 833.0 725.3 833.6 723.2 833.6 715.6 833.3 715.4 833.3 713.2 832.0 703.7ZM773.7 698.2 772.2 698.2 765.0 699.4 753.0 701.8 743.4 704.4 740.1 706.3 738.6 707.9 737.4 710.4 737.4 711.1 738.0 711.9 741.3 713.9 742.5 713.9 743.1 713.5 746.4 715.6 750.0 718.6 750.9 719.7 751.2 720.8 750.3 721.4 748.5 721.7 745.5 721.7 744.3 720.8 743.4 721.0 742.2 724.3 744.6 726.2 744.9 727.7 744.3 728.4 741.3 730.3 735.3 732.8 731.7 733.2 726.9 733.0 726.6 733.2 726.9 734.1 731.7 735.6 736.2 736.5 737.7 736.5 741.0 735.4 743.7 733.4 746.4 729.9 747.6 727.5 747.6 726.4 748.2 726.0 749.1 726.0 750.9 725.5 752.7 724.3 753.9 722.3 753.9 718.8 753.3 717.1 750.3 713.2 744.0 708.1 756.6 705.0 772.8 702.0 773.4 701.4 774.0 699.2ZM1015.5 693.0 1014.7 692.8 1014.2 693.2 1013.9 694.3 1013.4 695.1 1012.6 695.5 1012.0 695.5 1011.2 694.9 1011.2 693.4 1010.1 693.2 1009.1 695.3 1007.7 696.4 1006.9 696.4 1006.1 695.8 1006.6 694.2 1006.1 693.6 1005.3 693.6 1004.5 694.3 1003.9 695.6 1003.9 697.7 1004.5 698.4 1005.8 699.0 1007.2 699.0 1008.5 698.6 1009.9 697.7 1011.0 698.2 1013.4 698.1 1014.7 696.9 1015.3 696.0 1015.8 694.0ZM833.0 693.0 830.3 692.8 829.2 693.2 827.1 694.7 825.7 696.6 825.7 698.2 827.1 699.4 825.7 700.5 825.7 701.0 826.2 701.4 832.0 699.9 835.0 699.6 836.6 698.2 836.3 697.3 831.7 697.5 829.2 696.9 828.1 696.2 829.0 695.5 829.8 695.5 831.7 696.4 832.8 695.6 833.3 694.7ZM1043.6 692.1 1042.3 692.3 1032.3 696.6 1031.5 697.1 1031.5 698.4 1032.6 698.6 1042.3 694.7 1043.4 693.8ZM1032.8 692.3 1032.6 692.1 1031.2 692.3 1020.9 696.8 1020.4 697.3 1020.4 698.4 1021.5 698.6 1030.9 694.9 1032.0 694.2ZM985.0 692.1 983.7 692.8 982.6 694.2 982.0 695.8 982.3 697.3 983.4 698.2 984.5 698.6 988.0 698.4 989.1 698.1 990.2 697.1 990.4 694.7 989.9 693.8 988.0 692.5 986.6 692.1ZM983.7 695.1 984.8 694.2 986.9 694.2 988.8 695.1 989.1 695.8 988.3 696.4 984.8 696.4 983.7 695.6ZM949.0 692.3 948.1 692.1 937.3 696.4 935.9 697.5 936.2 698.6 938.2 698.2 947.8 694.5 948.4 694.0ZM928.5 692.1 926.8 693.0 926.0 694.0 925.4 695.3 925.4 696.8 926.0 697.7 927.1 698.4 927.9 698.6 931.6 698.4 933.9 696.9 934.2 694.7 933.3 693.6 931.9 692.7 930.2 692.1ZM927.1 694.9 928.2 694.2 929.1 694.0 930.5 694.2 932.8 695.5 932.8 695.8 931.9 696.4 928.2 696.4 927.1 695.6ZM894.7 692.3 894.4 692.1 893.0 692.3 882.2 696.8 881.7 697.3 881.7 698.4 882.8 698.6 892.7 694.9 893.9 694.2ZM852.4 692.3 851.6 692.1 841.2 696.4 839.9 697.5 840.1 698.6 842.0 698.2 851.3 694.5 851.9 694.0ZM806.9 692.1 805.5 692.8 804.4 694.2 803.9 695.8 804.1 697.3 805.2 698.2 806.3 698.6 809.9 698.4 811.0 698.1 812.1 697.1 812.3 694.7 811.8 693.8 809.9 692.5 808.5 692.1ZM805.5 695.1 806.6 694.2 808.8 694.2 810.7 695.1 811.0 695.8 810.1 696.4 806.6 696.4 805.5 695.6ZM759.3 692.1 757.8 692.3 746.7 696.6 745.8 697.1 745.8 698.4 747.0 698.6 757.8 694.7 759.0 693.8ZM971.0 688.2 970.4 688.0 969.1 688.2 966.9 689.5 965.8 691.0 965.8 691.5 966.4 692.3 968.5 693.4 966.1 695.3 961.0 697.9 961.5 698.6 962.6 698.6 965.3 697.5 970.2 694.2 972.1 694.5 972.9 693.8 973.1 692.8 971.8 692.1 972.3 690.1ZM968.0 690.6 968.8 690.2 969.9 691.4 969.6 691.5ZM833.6 688.2 832.8 688.0 825.4 690.8 824.6 691.4 824.6 692.5 824.9 692.7 826.2 692.5 833.0 690.2 833.6 689.7Z"/><path stroke="#1a1a1a" stroke-width="0.8" d="M902.8 850.3 902.5 850.3 901.0 850.3 890.2 852.0 889.0 852.3 888.6 852.8 889.9 852.9 900.7 851.4 902.2 851.0ZM902.5 848.7 898.8 848.1 897.6 848.1 895.7 848.8 893.3 848.4 891.7 848.4 889.0 849.6 893.3 850.3 894.5 850.1 896.0 849.5 899.7 850.0 902.2 849.0ZM1045.1 846.9 1038.1 848.0 1037.6 848.1 1037.8 848.7 1038.6 848.7 1045.1 847.8ZM718.0 844.4 715.8 845.5 718.9 846.3 719.3 846.3 721.1 845.4 721.3 845.0 720.2 844.7ZM1044.9 840.8 1043.8 840.4 1042.3 840.4 1040.7 841.1 1038.4 843.6 1037.6 844.4 1037.6 845.1 1039.2 845.5 1037.8 845.8 1037.6 846.0 1037.8 846.3 1039.2 846.3 1043.1 845.8 1045.1 845.7 1045.1 844.7 1042.8 844.7 1041.2 844.5 1039.9 844.2 1039.9 844.1 1041.2 843.6 1042.0 843.8 1042.8 844.2 1043.6 844.2 1044.9 843.1ZM512.7 826.4 512.1 826.4 510.6 831.9 513.7 835.1 514.8 836.9 514.8 837.8 514.0 839.0 510.8 841.8 505.4 844.2 502.5 844.5 499.9 844.5 497.0 844.4 496.7 844.5 497.3 844.7 503.5 845.5 505.9 845.6 509.5 845.2 511.4 844.8 514.5 843.1 516.3 839.5 516.9 835.1 515.5 830.0 514.0 827.5ZM787.4 826.6 785.9 826.1 784.5 827.1 783.0 830.0 782.1 833.0 782.1 835.8 782.6 836.7 784.1 837.6 785.6 837.6 786.3 837.4 787.4 836.2 787.8 836.9 787.8 837.8 787.2 839.0 783.7 842.7 781.0 844.2 779.7 844.5 777.8 844.6 775.6 844.6 775.4 844.7 773.2 844.6 773.0 844.8 773.2 844.9 778.9 845.5 781.7 845.5 783.2 845.2 786.5 844.0 788.5 840.4 789.8 834.9 789.6 830.3 788.9 828.4ZM784.1 832.1 785.4 831.2 786.7 832.3 785.2 833.0 784.3 832.6ZM568.3 826.6 566.5 826.1 564.9 827.1 563.1 830.0 562.1 833.0 562.1 835.8 562.6 836.7 564.4 837.6 566.2 837.6 567.0 837.4 568.3 836.2 568.8 836.9 568.8 837.8 568.1 839.0 563.9 842.7 560.8 844.2 559.2 844.5 556.8 844.6 554.2 844.6 554.0 844.7 551.3 844.6 551.1 844.8 551.3 844.9 558.1 845.5 561.5 845.5 563.4 845.2 567.3 844.0 569.6 840.4 571.2 834.9 570.9 830.3 570.2 828.4ZM564.4 832.1 566.0 831.2 567.5 832.3 565.7 833.0 564.7 832.6ZM450.2 826.6 448.7 826.1 447.1 827.3 446.1 829.4 445.0 832.8 445.0 835.8 445.8 837.2 446.7 837.6 448.5 837.6 450.2 836.2 450.6 837.6 449.8 839.2 446.7 842.4 443.4 844.3 440.4 844.6 438.2 844.6 438.0 844.7 436.0 844.6 435.8 844.7 436.0 844.9 440.4 845.4 444.5 845.5 446.3 845.2 449.8 843.4 451.5 839.7 452.6 834.4 452.6 831.6 452.2 829.6 451.3 827.7ZM446.9 832.1 448.2 831.2 449.3 832.3 448.0 833.0 447.4 832.8ZM619.1 826.6 617.2 825.2 615.9 825.2 614.9 825.7 613.3 827.1 609.9 832.3 608.1 833.9 606.3 834.6 605.0 834.4 604.7 832.3 603.1 829.6 602.1 829.1 600.8 829.1 599.7 829.6 598.4 830.7 597.4 832.6 596.6 834.9 596.6 836.9 597.9 838.3 598.9 838.8 602.9 839.5 601.6 841.5 598.2 844.2 593.2 845.0 591.6 845.2 587.4 845.2 585.9 845.0 585.4 845.2 587.7 845.8 590.6 846.2 592.9 846.3 595.8 846.1 598.9 845.5 601.3 844.9 603.7 843.1 604.7 839.7 607.3 839.0 608.9 837.6 611.0 833.9 612.3 835.1 615.1 836.5 618.0 836.9 621.2 833.5 621.2 832.1 620.4 829.1ZM598.7 833.7 599.5 833.0 600.8 833.0 602.1 833.9 602.6 834.9 600.3 835.1 599.2 834.6ZM613.1 829.8 614.1 829.1 615.9 829.1 617.2 830.3 617.5 831.6 617.2 831.9 616.2 831.6ZM956.8 823.4 954.7 826.8 957.9 828.9 958.4 828.9 960.0 826.6 960.4 825.0 957.9 823.4ZM489.2 822.2 487.6 821.5 485.5 821.5 483.9 822.9 482.9 825.9 483.4 826.6 484.2 826.6 484.5 827.1 482.9 828.7 481.6 831.4 481.6 832.8 482.4 833.7 482.1 834.2 480.5 834.6 477.4 834.6 474.0 833.9 469.6 831.9 467.2 829.8 466.4 829.8 465.4 831.4 462.8 832.6 459.6 835.3 458.3 837.6 457.8 839.7 457.8 844.5 459.9 848.3 460.2 849.7 460.7 850.3 461.5 850.3 462.5 849.9 462.2 847.6 459.9 840.4 460.2 839.2 462.5 837.6 464.6 837.2 465.1 837.8 465.6 840.1 466.9 842.2 468.5 843.6 469.8 843.6 471.4 841.5 472.2 838.1 476.1 839.2 480.0 839.5 483.1 837.8 485.8 835.6 492.6 837.6 495.4 837.4 497.3 835.8 498.3 833.3 498.3 831.4 497.5 829.6 495.4 827.1 492.6 824.5ZM489.2 832.1 489.9 831.4 490.5 829.8 491.2 829.4 493.3 830.5 495.9 832.8 496.2 833.7 494.6 833.9 489.9 832.8ZM483.7 829.4 485.8 828.0 487.1 828.0 488.1 828.7 488.6 829.6 488.6 830.7 487.3 831.6 486.8 831.6 484.2 830.5 483.7 830.0ZM745.2 822.2 744.3 821.3 742.5 820.4 741.9 820.4 740.3 822.5 739.0 821.5 737.7 821.3 735.5 824.8 738.6 826.8 739.3 826.8 740.6 824.5 743.2 825.9 745.2 822.9ZM542.2 821.8 541.7 821.1 539.1 819.7 538.0 819.7 536.4 821.5 534.6 820.6 533.6 820.6 531.5 823.2 531.2 824.3 534.6 826.1 535.4 826.1 537.0 824.1 539.1 825.2 539.8 825.2ZM819.2 818.8 818.2 818.6 817.7 819.0 816.7 821.5 816.5 823.6 818.7 825.7 820.1 828.4 820.1 830.3 818.7 831.4 816.7 832.3 813.8 833.0 812.9 834.6 812.4 836.5 812.6 836.7 814.8 836.5 818.9 836.7 820.9 837.2 821.4 837.8 817.7 840.4 813.1 842.4 808.7 843.4 806.0 843.4 802.6 842.7 801.7 842.2 799.7 840.4 799.0 838.8 798.7 837.2 799.2 834.4 801.7 830.0 801.2 829.4 800.2 830.0 798.5 832.8 796.8 838.5 797.0 843.1 797.8 844.2 799.5 844.9 801.9 845.2 804.1 845.4 809.0 845.4 811.1 845.2 813.8 844.9 818.4 844.2 821.1 842.7 823.1 840.8 824.0 838.8 824.3 835.6 823.3 834.2 820.9 833.0 822.6 829.4 822.6 825.7 821.1 821.3ZM771.4 818.1 769.4 821.1 769.4 821.5 771.6 823.2 773.0 823.6 774.7 820.9 774.9 819.9 773.6 818.8 772.3 818.1ZM654.9 823.4 653.0 821.3 651.2 820.6 649.9 820.9 648.3 822.2 646.5 826.6 646.8 831.2 647.8 832.1 650.4 832.3 652.0 831.9 654.1 830.3 654.6 830.7 654.6 832.1 653.3 833.0 650.2 834.2 645.7 834.6 644.4 832.8 643.6 830.5 642.1 821.8 641.8 818.3 641.3 817.6 640.8 817.9 639.2 820.9 639.2 823.8 640.5 831.0 640.0 831.9 637.6 833.3 635.5 833.7 629.8 833.5 628.2 831.9 627.4 832.8 626.9 834.6 627.2 836.9 628.0 837.8 629.8 838.5 636.1 838.3 638.4 837.4 639.5 836.5 641.0 833.9 642.9 837.8 644.7 839.2 647.6 839.5 649.9 839.0 652.5 837.8 655.7 835.1 656.7 832.3 656.4 826.8ZM648.3 826.6 649.1 825.7 650.2 825.7 651.7 827.1 650.4 827.7 648.9 827.7 648.3 827.3ZM1026.4 815.6 1024.0 818.6 1024.0 819.0 1027.2 820.9 1028.2 821.1 1030.6 818.1 1030.6 817.4 1029.0 816.3 1027.4 815.6ZM988.1 816.5 987.2 815.6 985.6 816.0 984.9 816.7 982.7 821.1 981.3 822.5 978.6 824.3 974.5 826.4 970.9 827.7 969.5 829.4 968.8 831.0 969.3 831.6 976.1 831.9 978.1 832.3 978.8 832.8 978.6 833.0 972.4 834.4 968.6 834.6 967.9 834.2 966.5 832.1 966.1 831.9 965.4 832.3 964.3 834.9 964.3 836.2 965.4 839.5 965.4 841.8 965.6 842.0 965.4 844.1 963.1 844.7 961.8 844.9 958.4 845.2 953.4 845.2 950.4 844.9 949.1 844.3 948.6 843.6 948.8 840.8 950.4 837.4 950.4 836.7 950.0 836.7 948.2 840.1 946.8 844.2 947.0 845.5 948.6 846.3 950.0 846.7 952.9 847.1 956.6 847.1 959.5 846.8 962.5 846.3 964.7 845.5 966.8 844.3 968.4 839.5 971.8 839.0 980.8 835.6 985.8 834.9 989.9 834.9 990.1 835.1 992.2 834.9 994.0 831.6 994.0 830.7 993.5 830.5 986.7 830.7 982.0 830.0 978.1 828.9 982.0 825.4 985.8 820.6 986.5 820.6 987.2 821.3 988.3 825.0 989.2 824.8 989.2 821.1 988.8 818.1ZM933.3 816.0 932.4 815.6 931.4 815.6 929.9 816.3 926.5 820.9 922.8 823.4 917.3 825.7 910.2 827.7 908.4 829.4 907.4 831.0 908.0 831.6 917.3 831.9 920.0 832.3 921.0 832.8 920.7 833.0 912.4 834.4 907.4 834.6 901.9 836.5 899.4 838.1 897.9 840.1 897.9 842.0 899.4 843.4 907.7 844.0 908.7 844.2 905.0 844.9 898.8 845.5 892.7 845.7 887.7 845.5 884.6 845.2 882.2 844.5 881.3 843.6 881.9 839.9 884.3 836.2 884.3 835.8 883.4 835.3 881.0 838.5 879.1 843.1 878.8 844.4 879.1 845.3 881.0 846.3 884.6 847.0 889.6 847.3 893.3 847.3 899.4 847.0 904.7 846.4 908.0 845.8 911.1 845.0 913.0 843.6 912.7 842.2 910.8 840.8 908.0 840.1 904.3 839.9 904.0 839.7 904.3 839.5 906.5 839.2 908.4 839.5 911.4 839.0 923.7 835.6 930.5 834.9 936.1 834.9 936.4 835.1 939.1 834.9 941.6 831.6 941.6 830.7 941.0 830.5 931.7 830.7 925.3 830.0 920.0 828.9 926.2 824.8 930.8 820.6 931.4 820.6 932.7 821.5 933.6 824.5 934.2 825.0 935.1 824.8 935.4 823.6 934.8 819.0 934.2 817.2ZM534.6 815.1 532.3 818.1 532.3 818.6 535.4 820.4 536.4 820.6 538.8 817.4 538.8 817.0 537.8 816.0 535.7 815.1ZM657.0 814.0 653.8 812.1 652.8 812.1 651.0 814.2 648.9 813.0 647.8 813.0 645.5 816.5 649.1 818.6 649.9 818.3 651.5 816.3 653.8 817.6 654.6 817.6 656.7 814.9ZM1040.5 809.8 1038.1 813.7 1037.8 816.5 1040.2 831.6 1040.5 838.3 1041.0 838.8 1042.0 837.4 1042.5 835.1 1042.8 828.2 1042.5 828.0 1042.5 824.1 1042.3 823.8 1042.3 821.1 1041.0 810.3ZM868.1 809.6 865.9 813.5 865.4 815.6 867.6 830.5 867.8 836.2 868.3 838.8 868.8 838.5 869.3 837.6 870.0 834.4 870.0 825.7 869.8 825.4 869.8 822.7 868.5 810.8ZM584.3 809.6 581.7 814.2 581.7 817.0 583.8 830.0 584.3 838.5 584.8 838.8 585.9 837.2 586.4 834.9 586.4 824.8 586.1 824.5 586.1 821.8 585.4 817.0 584.8 810.5ZM550.3 809.6 547.7 814.0 547.4 816.0 549.8 831.2 550.0 838.1 550.6 838.8 551.3 838.1 552.1 835.6 552.4 826.8 552.1 826.6 552.1 823.4 551.9 823.2 550.8 811.2ZM852.2 809.1 851.5 809.1 850.5 810.1 849.8 811.4 849.8 813.0 850.5 815.6 851.5 826.6 852.7 833.3 850.8 834.2 847.4 834.9 841.3 834.6 840.8 832.3 839.6 829.8 838.4 829.1 837.2 829.1 836.2 829.6 835.0 830.7 834.0 832.6 833.3 834.9 833.3 836.9 834.5 838.3 836.4 839.0 838.9 839.2 839.1 839.7 837.9 841.5 834.7 844.2 830.1 845.0 828.7 845.2 824.8 845.2 823.3 845.0 822.8 845.2 825.7 845.9 827.7 846.2 829.9 846.3 832.6 846.1 835.5 845.5 838.9 844.3 839.8 843.1 840.6 840.1 841.1 839.5 847.9 839.2 851.5 838.3 854.2 837.2 855.9 838.1 858.1 839.9 859.5 839.7 860.3 837.8 860.5 834.9 859.5 833.9 856.4 832.6 855.6 831.9 854.7 827.1 853.9 818.3 853.5 816.0 854.9 813.3 853.2 811.2ZM835.2 833.7 835.9 833.0 837.2 833.0 838.4 833.9 838.9 834.9 836.7 835.1 835.7 834.6ZM822.3 811.2 821.8 810.5 819.2 809.1 818.4 809.1 816.7 811.2 814.8 810.1 813.8 810.1 811.9 812.6 811.6 813.5 814.8 815.6 815.5 815.6 817.0 813.3 819.9 814.7ZM1015.4 808.5 1013.1 811.9 1013.1 814.0 1013.9 816.7 1014.7 822.9 1014.9 833.7 1015.4 836.0 1016.2 837.4 1017.3 838.3 1019.6 839.2 1025.3 839.5 1028.7 838.8 1030.3 838.1 1031.9 836.7 1032.9 834.6 1032.9 830.3 1032.4 828.7 1031.3 827.3 1030.3 827.5 1028.5 830.7 1028.5 831.4 1029.8 833.3 1029.5 833.9 1025.1 834.9 1020.9 834.6 1019.4 834.2 1017.5 832.3 1016.7 815.6 1016.0 808.9ZM666.4 808.5 663.7 811.9 663.7 814.0 664.6 816.7 665.5 822.9 665.8 833.7 666.1 835.3 667.3 837.4 669.3 838.8 671.1 839.2 674.4 839.5 676.2 838.8 677.4 837.8 679.7 834.2 684.8 836.5 688.0 836.9 691.6 833.5 691.6 832.6 690.1 828.0 688.9 826.4 686.8 825.2 685.7 825.2 683.9 825.9 682.1 827.7 679.1 831.9 676.2 834.2 674.7 834.6 672.6 834.6 670.8 834.2 669.0 832.8 668.5 831.2 668.2 818.8 667.9 818.6 667.6 812.8 667.0 808.9ZM682.4 829.8 683.6 829.1 685.4 829.1 686.8 830.0 687.4 831.4 687.1 831.6 685.1 831.4ZM523.6 808.5 521.3 811.9 521.3 813.5 522.6 819.7 523.1 832.8 523.9 836.5 525.5 838.3 527.8 839.2 533.8 839.5 537.0 838.8 539.6 837.4 541.2 834.9 541.4 833.5 541.2 830.0 540.6 828.4 539.6 827.3 538.5 827.5 537.0 830.3 537.0 831.9 538.0 833.3 537.8 833.9 533.3 834.9 529.1 834.6 527.3 833.9 525.7 832.1 524.9 814.9 524.2 808.7ZM984.9 808.0 982.7 811.4 985.4 813.3 986.5 813.5 988.3 810.5 988.3 809.6 986.3 808.2ZM929.3 808.0 926.8 810.5 926.5 811.7 930.5 813.5 931.4 813.5 934.2 810.1 933.6 809.4 930.5 808.0ZM440.8 806.2 439.5 806.2 437.3 807.1 429.5 811.4 422.7 816.0 419.0 819.9 418.5 819.0 418.1 813.0 417.7 812.1 416.8 812.1 416.4 812.6 415.7 814.7 415.5 816.7 415.7 817.0 415.7 820.2 415.9 820.4 417.4 844.4 415.7 844.9 413.7 845.3 411.8 845.5 407.2 845.6 405.0 845.3 403.5 844.8 403.0 844.4 403.3 841.8 405.4 837.6 405.4 836.9 405.0 836.5 404.1 836.5 402.6 838.5 401.3 841.1 400.2 844.3 400.4 845.7 401.1 846.2 402.2 846.7 404.1 847.1 406.3 847.4 410.2 847.4 414.4 846.8 416.8 846.3 417.9 845.9 419.0 845.2 419.4 844.4 419.4 839.5 419.2 839.2 419.4 838.5 421.6 839.9 424.4 839.9 426.6 839.5 427.9 838.8 428.8 837.8 429.5 836.7 430.1 834.4 430.1 830.5 429.2 828.2 428.4 826.8 426.4 825.0 423.8 823.6 420.1 822.2 422.5 820.4 427.7 817.2 434.5 813.5 439.9 811.0 440.4 810.3 441.0 807.5ZM419.4 826.6 419.6 826.4 425.1 828.9 427.9 831.2 428.8 832.6 425.5 834.4 424.7 834.6 421.8 834.4 420.9 833.5 420.1 831.2ZM767.9 804.6 764.0 806.2 754.8 811.4 751.1 814.4 748.4 817.2 747.4 818.8 746.9 819.9 746.9 822.7 747.6 825.0 750.6 826.6 753.5 828.7 755.0 830.3 755.9 831.9 753.9 833.5 750.4 834.6 748.0 834.6 747.8 834.9 745.2 834.6 743.2 833.0 743.0 831.6 742.3 831.6 741.0 833.3 739.9 833.9 737.1 834.6 735.1 834.6 734.4 834.4 733.6 833.5 733.3 832.3 732.7 832.1 732.3 832.6 732.0 833.7 731.2 834.6 727.4 836.0 723.5 836.9 719.8 837.4 716.5 837.4 716.3 837.6 716.1 837.4 713.2 837.4 709.5 836.5 707.7 835.6 706.4 834.2 705.6 832.1 706.0 830.3 706.9 828.9 706.9 828.4 706.2 828.2 705.6 828.9 703.8 833.3 703.8 836.2 704.5 838.3 706.2 840.4 708.2 841.5 710.4 842.2 713.6 842.7 718.0 842.7 724.4 841.5 727.4 840.4 732.7 837.2 734.7 839.0 735.8 839.5 738.4 839.0 740.3 837.8 741.4 836.7 743.2 838.5 746.0 839.7 750.4 839.5 752.8 838.8 755.2 836.9 756.5 834.6 757.2 830.5 762.9 836.2 765.5 838.3 768.6 839.5 770.5 839.2 771.9 838.5 773.0 837.4 773.6 836.0 774.3 832.1 773.8 828.9 772.7 826.8 772.3 827.1 770.8 830.5 772.3 833.5 771.6 834.2 770.3 834.6 768.1 834.6 765.3 833.3 759.6 828.2 755.0 824.8 748.9 821.3 749.3 820.6 753.3 817.6 760.0 813.5 766.6 810.1 767.3 809.1 768.1 805.2ZM1034.5 797.7 1033.7 797.2 1033.2 797.4 1032.6 799.5 1031.6 800.4 1030.8 800.4 1030.3 800.0 1030.0 799.0 1030.3 798.1 1029.2 797.7 1028.7 798.1 1028.0 800.4 1026.6 801.6 1025.9 801.6 1025.3 801.1 1025.6 798.4 1024.3 798.1 1023.0 801.3 1023.0 802.7 1023.5 803.9 1024.3 804.6 1026.1 804.8 1028.0 804.1 1028.7 803.2 1029.8 803.9 1032.1 803.6 1033.7 802.0 1034.5 799.5ZM640.5 797.7 639.7 797.2 639.2 797.4 638.7 799.3 637.6 800.4 636.8 800.4 636.1 799.5 636.3 798.1 635.3 797.7 634.5 798.6 633.7 800.6 632.7 801.6 631.9 801.6 631.4 801.1 631.6 799.0 631.4 798.1 630.3 798.1 629.8 798.6 629.0 800.9 629.3 803.6 630.8 804.8 632.9 804.6 634.7 803.2 635.8 803.9 638.1 803.6 639.7 801.8 640.2 800.4ZM414.4 797.7 413.7 797.2 413.3 797.4 412.9 799.5 412.0 800.4 411.3 800.4 410.9 800.0 410.7 799.0 410.9 798.1 410.0 797.7 409.6 798.1 408.9 800.4 407.8 801.6 407.2 801.6 406.8 801.1 407.0 798.4 405.9 798.1 404.8 801.3 404.8 802.7 405.2 803.9 405.9 804.6 407.4 804.8 408.9 804.1 409.6 803.2 410.5 803.9 412.4 803.6 413.7 802.0 414.4 799.5ZM989.9 796.3 988.3 796.7 980.4 801.8 979.7 802.5 979.7 804.1 980.4 804.3 988.8 799.5 989.7 798.1ZM971.8 796.3 970.4 797.4 969.7 798.6 969.3 800.2 969.3 802.0 969.7 803.2 970.6 804.1 971.3 804.3 974.3 804.1 976.1 802.3 976.3 799.5 975.6 798.1 974.5 797.0 973.1 796.3ZM970.6 799.7 971.5 798.8 972.2 798.6 973.3 798.8 975.2 800.4 975.2 800.9 974.5 801.6 971.5 801.6 970.6 800.6ZM911.4 796.3 909.9 797.2 908.7 798.8 908.0 800.9 908.4 802.7 909.6 803.9 910.8 804.3 914.8 804.1 916.0 803.6 917.3 802.5 917.6 799.5 917.0 798.4 914.8 796.7 913.3 796.3ZM909.9 800.0 911.1 798.8 913.6 798.8 915.7 800.0 916.0 800.9 915.1 801.6 911.1 801.6 909.9 800.6ZM856.6 796.3 855.2 797.4 854.4 798.6 853.9 800.2 853.9 802.0 854.4 803.2 855.4 804.1 856.1 804.3 859.3 804.1 861.2 802.3 861.5 799.5 860.8 798.1 859.5 797.0 858.1 796.3ZM855.4 799.7 856.4 798.8 857.1 798.6 858.3 798.8 860.3 800.4 860.3 800.9 859.5 801.6 856.4 801.6 855.4 800.6ZM851.5 796.3 850.3 796.5 841.3 801.8 840.6 802.5 840.6 804.1 841.5 804.3 850.3 799.5 851.3 798.4ZM831.8 796.3 830.6 797.2 829.6 798.8 829.1 800.9 829.4 802.7 830.4 803.9 831.3 804.3 834.5 804.1 835.5 803.6 836.4 802.5 836.7 799.5 836.2 798.4 834.5 796.7 833.3 796.3ZM830.6 800.0 831.6 798.8 833.5 798.8 835.2 800.0 835.5 800.9 834.7 801.6 831.6 801.6 830.6 800.6ZM820.6 796.5 819.9 796.3 810.7 801.6 809.4 802.9 809.7 804.3 811.4 803.9 819.7 799.3 820.1 798.6ZM788.7 796.3 787.6 796.5 779.5 801.8 778.9 802.5 778.9 804.1 779.7 804.3 787.6 799.5 788.5 798.4ZM775.4 796.3 773.8 796.7 766.2 801.8 765.5 802.5 765.5 804.1 766.2 804.3 774.3 799.5 775.1 798.1ZM755.4 796.3 754.3 797.2 753.5 798.8 753.0 800.9 753.3 802.7 754.1 803.9 755.0 804.3 757.9 804.1 758.7 803.6 759.6 802.5 759.8 799.5 759.4 798.4 757.9 796.7 756.8 796.3ZM754.3 800.0 755.2 798.8 757.0 798.8 758.5 800.0 758.7 800.9 758.1 801.6 755.2 801.6 754.3 800.6ZM689.8 796.3 687.7 796.7 677.4 801.8 676.5 802.5 676.5 804.1 677.4 804.3 688.3 799.5 689.5 798.1ZM654.6 796.3 652.8 796.7 643.6 801.8 642.9 802.5 642.9 804.1 643.6 804.3 653.3 799.5 654.3 798.1ZM569.9 796.3 568.6 796.5 559.4 801.6 558.9 801.1 557.6 801.1 551.6 802.3 545.1 802.3 540.4 801.6 539.1 802.5 538.0 803.9 538.0 805.0 540.4 807.3 541.4 807.3 542.7 805.7 547.4 805.7 552.1 805.2 556.6 804.1 557.9 803.4 558.4 804.3 559.2 804.3 568.6 799.5 569.6 798.4ZM542.2 796.5 541.9 796.3 540.6 796.5 530.7 802.0 530.2 802.7 530.2 804.1 531.2 804.3 540.4 799.7 541.4 798.8ZM514.8 796.3 513.5 796.5 503.8 801.8 503.0 802.5 503.0 804.1 504.1 804.3 513.5 799.5 514.5 798.4ZM464.6 796.3 463.0 797.4 462.2 798.6 461.7 800.2 461.7 802.0 462.2 803.2 463.3 804.1 464.1 804.3 467.5 804.1 469.6 802.3 469.8 799.5 469.0 798.1 467.7 797.0 466.2 796.3ZM463.3 799.7 464.3 798.8 465.1 798.6 466.4 798.8 468.5 800.4 468.5 800.9 467.7 801.6 464.3 801.6 463.3 800.6ZM451.5 796.3 450.0 796.7 442.3 801.8 441.7 802.5 441.7 804.1 442.3 804.3 450.4 799.5 451.3 798.1ZM959.3 791.2 958.1 791.5 956.1 793.5 955.6 794.4 955.6 796.0 957.7 798.1 955.4 800.4 951.3 803.4 951.8 804.3 952.7 804.3 954.7 803.2 959.1 798.8 960.2 799.3 961.1 798.8 961.6 797.2 960.4 796.3 960.9 794.9 960.9 793.3 960.4 792.2ZM957.2 794.4 957.7 794.0 958.4 794.2 958.8 795.4 958.6 795.6ZM933.3 791.5 932.7 791.2 931.1 791.5 929.6 792.2 928.4 793.3 927.4 794.7 927.4 795.8 930.2 798.1 926.8 800.6 921.9 803.2 922.2 804.3 923.7 804.3 927.1 802.7 932.4 798.8 934.2 799.3 935.1 798.6 935.4 797.0 933.9 796.3 934.5 795.1 934.5 793.1ZM929.6 794.4 930.8 794.0 931.7 794.7 931.7 795.4 931.4 795.6ZM741.4 791.5 741.0 791.2 739.9 791.5 738.2 793.1 737.3 794.9 737.3 795.6 737.7 796.5 739.5 797.9 737.5 800.2 733.3 803.4 733.8 804.3 734.7 804.3 736.8 802.9 740.8 798.8 742.3 799.3 743.0 798.4 743.2 797.2 742.1 796.3 742.5 793.8ZM739.0 794.4 739.7 794.0 740.6 795.4 740.3 795.6ZM721.5 791.5 721.1 791.2 720.0 791.5 718.2 793.1 717.4 794.9 717.4 795.6 717.8 796.5 719.6 797.9 717.6 800.2 713.4 803.4 713.9 804.3 714.7 804.3 716.9 802.9 720.9 798.8 722.4 799.3 723.1 798.4 723.3 797.2 722.2 796.3 722.6 793.8ZM719.1 794.4 719.8 794.0 720.7 795.4 720.4 795.6ZM617.2 791.5 616.7 791.2 615.4 791.5 614.1 792.2 613.1 793.3 612.3 794.7 612.3 795.8 614.6 798.1 611.5 800.9 607.6 803.2 607.8 804.3 609.1 804.3 611.8 802.9 616.5 798.8 618.0 799.3 618.8 798.6 619.3 797.4 618.0 796.3 618.3 792.8ZM614.4 794.4 615.1 794.0 615.9 794.7 615.9 795.1 615.4 795.4ZM488.9 791.5 488.4 791.2 487.1 791.5 485.8 792.2 484.7 793.3 483.9 794.7 483.9 795.8 486.3 798.1 483.4 800.6 479.2 803.2 479.5 804.3 480.8 804.3 483.7 802.7 488.1 798.8 489.7 799.3 490.5 798.6 490.7 797.0 489.4 796.3 489.9 795.1 489.9 793.1ZM485.8 794.4 486.8 794.0 487.6 794.7 487.6 795.4 487.3 795.6ZM431.2 791.2 430.1 791.5 428.1 793.5 427.7 794.4 427.7 796.0 429.7 798.1 427.5 800.4 423.6 803.4 424.0 804.3 424.9 804.3 426.8 803.2 431.0 798.8 432.1 799.3 432.9 798.8 433.4 797.2 432.3 796.3 432.7 794.9 432.7 793.3 432.3 792.2ZM429.2 794.4 429.7 794.0 430.3 794.2 430.8 795.4 430.5 795.6ZM1034.2 791.2 1033.9 791.0 1032.9 791.2 1024.8 794.4 1024.3 794.9 1024.3 796.0 1025.1 796.3 1033.7 793.5 1034.2 792.4ZM640.0 791.0 630.8 794.4 630.3 794.9 630.3 796.0 631.1 796.3 639.7 793.5 640.2 791.7ZM414.2 791.2 414.0 791.0 413.1 791.2 406.3 794.4 405.9 794.9 405.9 796.0 406.5 796.3 413.7 793.5 414.2 792.4Z"/><path stroke="#1a1a1a" stroke-width="0.8" d="M755.1 926.3 754.9 926.1 753.7 926.3 744.3 930.0 743.4 930.5 743.1 931.7 744.6 931.8 753.4 928.6 754.6 927.6ZM677.8 924.1 675.9 924.4 665.1 928.3 664.8 929.8 666.1 929.8 675.9 926.6 677.4 925.4ZM1014.3 924.7 1012.8 923.9 1010.6 923.2 1009.7 923.2 1008.0 924.7 1006.0 924.1 1004.3 923.9 1002.0 925.9 1001.7 926.6 1006.0 928.1 1008.3 926.3 1011.4 927.4ZM754.9 923.4 753.7 923.2 744.0 926.8 742.8 927.6 742.6 928.8 744.6 928.5 753.7 925.2ZM834.7 922.0 833.8 921.9 824.2 926.1 823.7 926.6 824.0 927.8 826.4 927.1 833.3 924.2 834.3 923.4ZM677.4 921.2 675.5 921.4 666.1 924.6 664.5 925.4 663.9 926.6 664.8 926.8 675.9 923.4 677.1 922.5ZM713.7 919.8 711.5 920.2 700.5 923.9 699.5 924.4 699.5 925.6 700.5 925.8 712.2 922.2 713.4 921.4ZM802.7 919.8 802.4 919.7 801.2 919.8 790.6 923.1 790.1 923.4 790.4 924.7 792.6 924.4 802.4 921.7ZM824.5 920.9 821.4 919.5 820.6 919.5 819.2 921.0 817.5 920.4 816.1 920.2 813.9 922.7 817.1 924.2 817.8 924.2 819.4 922.5 822.1 923.7 824.0 921.9ZM706.8 913.8 704.3 915.6 704.0 916.3 708.7 917.8 711.8 915.1 709.9 914.3 708.1 913.8ZM986.6 913.4 986.3 913.3 985.1 913.4 975.7 917.1 974.9 917.6 974.6 918.8 976.0 919.0 984.9 915.8 986.0 914.8ZM901.3 914.4 900.3 913.8 897.8 912.9 896.8 913.4 895.8 914.4 892.7 913.6 890.2 916.0 890.2 916.3 893.7 917.8 894.5 917.6 896.0 916.0 898.8 917.1 900.0 916.1ZM699.5 914.1 698.3 913.4 695.7 912.8 694.5 912.8 692.6 914.1 689.7 913.4 688.5 913.4 685.6 915.6 685.6 916.0 690.1 917.5 691.0 917.3 692.9 915.8 696.7 916.8 699.5 914.4ZM797.8 911.7 795.2 911.6 792.9 912.4 791.2 913.8 790.1 915.3 790.1 916.5 791.8 917.6 790.6 918.2 790.1 918.8 790.6 919.3 791.8 919.3 797.2 918.0 800.4 917.6 801.8 916.5 801.8 916.0 801.2 915.6 795.8 915.8 793.8 915.3 792.6 914.6 793.5 914.1 794.9 914.1 796.1 914.8 796.7 914.8 797.5 914.3 798.4 912.9 798.4 912.2ZM986.3 910.6 985.1 910.4 975.4 913.9 974.3 914.8 974.0 916.0 976.0 915.6 985.1 912.4ZM1041.1 902.1 1040.3 901.3 1039.4 901.3 1037.7 904.6 1037.7 905.2 1038.6 905.7 1038.3 906.1 1035.4 905.3 1034.3 904.6 1034.8 903.2 1034.8 902.5 1034.3 902.3 1033.7 902.5 1033.1 904.0 1031.7 905.7 1030.0 906.7 1027.4 907.3 1025.4 907.2 1023.4 905.9 1022.8 905.2 1021.1 904.2 1019.7 904.0 1016.6 905.0 1013.4 906.8 1010.6 909.2 1009.1 911.2 1009.1 912.8 1010.6 913.6 1015.1 914.3 1020.8 914.4 1022.0 914.8 1017.7 916.0 1010.9 917.1 1006.6 917.5 1001.1 917.3 998.6 916.6 996.3 915.5 994.9 913.6 994.6 912.2 995.4 910.2 998.0 907.3 997.1 906.8 996.6 907.0 994.0 909.7 992.3 913.1 992.0 915.3 993.1 917.8 994.0 918.7 996.6 920.0 998.3 920.5 1001.7 921.0 1006.9 921.0 1010.6 920.7 1015.7 919.8 1021.1 918.3 1023.7 917.3 1025.7 915.8 1026.0 913.8 1025.4 912.9 1024.3 912.2 1022.0 911.7 1017.1 911.4 1014.0 910.9 1012.3 910.0 1012.3 909.5 1014.0 908.7 1017.4 907.7 1018.8 907.7 1020.3 908.4 1022.3 909.9 1024.8 910.7 1026.3 910.9 1028.6 910.6 1030.6 909.4 1031.7 908.2 1034.3 909.2 1036.0 909.5 1038.3 909.5 1040.0 908.5 1041.4 906.3 1041.7 903.2ZM980.6 900.7 978.3 900.5 976.9 901.1 973.1 904.4 972.6 905.5 972.6 906.7 974.0 907.7 976.0 908.4 974.0 909.7 974.3 910.6 984.6 907.5 985.7 906.7 986.0 905.0 984.6 905.0 982.3 905.7 980.0 905.9 977.4 905.3 976.0 904.4 976.0 904.0 976.9 903.4 978.0 903.6 979.4 904.4 980.6 904.4 981.4 903.4 981.4 901.5ZM732.4 902.8 730.8 900.7 729.2 899.8 727.0 899.6 725.7 899.9 723.8 901.1 719.7 905.5 717.5 906.8 716.3 907.2 713.4 907.3 710.6 905.9 710.6 905.2 709.6 905.0 707.7 906.3 706.2 906.8 702.1 907.3 700.2 907.3 698.6 906.3 697.0 900.3 695.4 900.1 694.5 900.7 693.8 901.7 692.0 902.8 689.7 903.2 688.5 903.0 687.9 902.3 686.3 901.5 685.3 902.5 684.7 905.2 686.3 907.0 687.2 908.7 686.9 910.2 685.3 911.1 681.9 912.2 678.7 912.9 673.7 913.4 667.3 913.1 664.8 912.4 662.9 911.2 662.6 909.2 663.6 907.5 665.8 905.0 664.8 904.6 662.6 906.7 660.4 910.2 660.7 913.6 662.0 914.9 663.6 915.8 667.0 916.6 670.5 917.0 674.3 917.0 679.0 916.5 682.8 915.5 686.6 913.4 689.1 910.6 689.7 909.0 689.7 906.8 692.6 906.1 694.2 905.2 696.1 909.2 698.0 910.4 700.2 910.9 703.0 910.7 705.2 910.2 708.4 909.0 711.2 910.4 712.5 910.7 715.0 910.9 716.6 910.6 718.5 909.5 721.0 906.8 722.6 907.7 726.0 908.7 729.5 909.0 733.3 906.5 733.3 905.3ZM723.5 903.4 724.8 902.8 727.0 902.8 728.6 903.8 728.9 905.0 728.6 905.2 727.3 905.0ZM860.0 899.2 858.7 899.2 858.0 899.6 858.0 900.1 855.2 904.2 854.2 907.2 854.4 909.9 855.5 910.9 857.5 911.6 860.0 911.6 863.0 910.6 864.5 909.0 865.5 906.5 865.3 903.8 864.5 902.3 863.0 900.7ZM856.5 905.9 857.2 905.0 859.0 904.6 861.2 905.2 863.3 906.7 861.5 907.3 858.2 907.5 856.5 906.8ZM745.4 899.2 742.6 899.4 740.0 901.1 738.8 902.6 738.0 904.8 738.0 905.9 736.3 907.7 735.4 909.9 736.0 913.3 739.1 920.5 740.3 924.4 740.3 925.6 740.8 926.3 742.0 926.3 742.6 925.6 742.6 922.5 741.1 917.6 738.0 910.0 740.8 908.7 743.7 908.0 745.7 907.9 749.7 908.2 751.7 908.0 752.9 905.0 752.9 903.8 750.6 901.7 747.4 899.8ZM740.6 905.2 740.8 904.4 742.3 903.6 743.1 903.6 745.1 904.6 741.1 905.3ZM674.0 894.3 671.1 896.9 671.1 897.2 674.3 898.6 676.2 899.0 678.7 896.7 679.0 895.9 677.1 894.9 675.2 894.3ZM883.4 894.0 880.9 896.7 880.9 897.0 884.4 898.8 884.9 898.8 886.9 896.5 887.2 895.5 885.4 894.5ZM828.8 894.3 827.8 894.0 826.6 894.0 824.7 895.3 822.5 899.0 822.5 901.3 823.3 902.5 824.9 903.4 827.3 903.0 829.2 901.3 830.4 902.8 830.4 903.4 829.0 904.6 828.0 905.0 823.0 905.9 822.1 907.2 821.8 908.5 822.1 908.7 828.0 908.9 830.0 909.2 830.4 909.7 826.8 911.6 822.3 913.1 818.0 913.8 815.4 913.8 812.0 913.3 811.1 912.9 809.2 911.6 808.5 910.4 808.2 909.2 808.7 907.2 811.1 903.6 810.6 903.0 809.6 903.6 808.0 905.9 806.3 910.2 806.5 913.6 807.3 914.8 808.9 916.1 811.3 917.0 813.5 917.3 818.2 917.3 820.4 917.0 823.0 916.3 827.6 914.6 830.2 913.3 832.1 911.9 833.1 910.4 833.3 908.0 832.3 907.0 830.2 906.3 831.1 904.6 831.6 902.8 831.6 899.0 830.7 896.5ZM824.0 898.4 824.7 897.8 825.9 897.8 827.1 898.8 826.1 899.4 824.9 899.4 824.0 898.8ZM1038.0 894.7 1036.6 894.0 1033.7 893.2 1032.0 894.9 1030.0 894.2 1028.6 894.2 1026.0 896.9 1030.0 898.8 1031.1 898.4 1032.6 896.9 1034.8 898.0 1035.4 898.0 1038.0 895.5ZM1030.3 889.3 1027.4 891.8 1027.4 892.4 1031.7 894.2 1034.6 891.1 1032.6 889.9ZM968.8 886.4 966.3 890.1 966.0 891.6 968.3 904.2 968.5 909.5 969.0 910.4 969.5 910.2 970.0 909.5 970.8 907.0 970.8 900.3 970.6 900.1 970.6 897.6 969.3 887.6ZM793.5 886.4 790.6 890.1 790.4 891.8 792.9 904.6 793.2 909.9 793.8 910.4 794.6 909.9 795.5 908.0 795.8 900.9 795.5 900.7 795.5 898.0 795.2 897.8 794.1 887.8ZM869.8 888.8 871.3 895.9 871.6 903.8 871.8 904.0 872.1 908.0 872.8 909.2 874.3 910.2 876.1 910.7 877.9 910.9 880.4 910.7 881.9 910.4 884.4 909.0 884.9 909.0 886.7 910.2 888.2 910.7 890.0 910.9 892.2 910.2 894.0 909.0 895.2 907.7 896.0 908.9 897.8 910.2 899.0 910.7 901.0 910.9 902.3 910.6 905.3 908.2 907.1 909.4 909.4 910.2 908.8 911.6 908.8 912.8 909.6 912.9 910.1 912.8 910.9 910.9 911.4 910.6 914.6 910.9 918.7 910.7 922.4 910.0 924.0 909.4 925.0 909.4 926.7 910.0 931.5 910.9 935.5 910.7 938.1 910.2 943.9 908.4 950.4 907.0 952.4 906.8 958.2 907.0 960.0 904.4 959.7 903.2 954.4 903.2 951.2 902.8 946.4 901.7 941.6 900.1 938.8 899.8 936.8 900.3 935.0 901.5 934.0 902.6 933.8 904.0 939.6 903.8 943.1 904.6 945.1 905.3 942.6 906.3 938.8 907.0 934.8 907.3 931.0 907.2 929.2 906.7 931.3 902.5 930.5 901.1 928.0 899.4 925.5 899.0 922.4 899.8 919.2 901.5 915.9 903.8 912.4 907.2 910.1 907.0 908.6 906.5 906.8 905.2 906.1 905.2 903.6 906.8 901.8 907.3 900.3 907.3 899.3 907.0 898.0 905.7 896.0 898.6 895.2 897.8 894.7 897.8 893.2 899.6 893.2 901.5 894.5 905.5 893.2 906.7 891.0 907.3 889.0 907.3 886.7 906.1 886.4 905.0 885.7 905.0 883.9 906.5 882.9 906.8 879.6 907.3 877.4 907.3 875.4 906.7 874.1 905.0 873.8 895.1 873.6 894.9 873.6 892.0 872.8 886.1 872.6 885.5 871.8 885.9ZM927.7 904.4 926.5 905.2 922.2 906.5 916.4 907.3 914.6 907.2 918.9 904.8 922.7 903.4 925.2 903.4ZM760.6 885.5 758.0 888.0 757.7 889.5 758.3 890.7 759.4 896.5 760.0 907.3 761.2 909.2 762.0 909.9 764.0 910.6 768.0 910.9 770.6 910.0 773.5 906.8 774.6 907.5 778.1 908.7 781.2 909.0 782.1 908.7 784.6 906.7 784.6 905.2 782.6 900.9 780.3 899.6 778.9 899.6 776.3 900.9 772.3 905.5 770.3 906.8 768.3 907.3 766.3 907.3 764.3 906.8 763.2 906.1 762.6 905.2 762.3 903.2 762.3 896.5 762.0 896.3 761.7 890.1 761.2 886.2ZM775.8 903.4 776.9 902.8 778.9 902.8 780.1 903.4 780.6 904.2 780.6 905.0 780.3 905.2 779.2 905.0ZM823.7 884.5 821.4 887.4 824.9 889.3 825.4 889.1 827.3 886.6 827.3 886.1 825.9 885.1ZM970.3 876.2 967.8 876.0 966.0 876.8 964.2 878.5 963.5 879.7 963.2 881.4 964.8 883.0 963.5 883.7 963.5 884.7 964.5 884.9 968.3 883.5 972.1 883.0 973.6 881.6 973.3 880.6 969.0 880.8 967.8 880.6 965.8 879.7 965.8 879.1 966.3 878.7 967.0 878.7 969.0 879.7 969.8 879.1 970.6 877.8ZM1037.7 875.4 1037.4 875.2 1036.0 875.4 1025.1 880.1 1024.6 880.6 1024.6 881.8 1025.7 882.0 1035.7 878.1 1036.8 877.4ZM1000.3 875.2 998.6 876.2 997.7 877.2 997.1 878.5 997.1 880.1 997.7 881.0 998.9 881.8 999.7 882.0 1003.4 881.8 1005.7 880.3 1006.0 877.9 1005.1 876.8 1003.7 875.8 1002.0 875.2ZM998.9 878.1 1000.0 877.4 1000.9 877.2 1002.3 877.4 1004.6 878.7 1004.6 879.1 1003.7 879.7 1000.0 879.7 998.9 878.9ZM945.9 875.2 944.1 876.4 943.4 877.6 943.1 880.3 943.9 881.4 945.4 882.0 948.6 881.8 950.7 880.3 950.9 879.5 950.7 877.6 949.9 876.6 948.4 875.6 947.4 875.2ZM944.6 877.9 945.4 877.4 946.4 877.2 947.6 877.4 949.4 878.5 949.6 879.1 948.6 879.7 945.6 879.7 944.6 879.1ZM921.9 875.4 921.7 875.2 920.4 875.4 910.9 880.1 910.4 880.6 910.4 881.8 911.4 882.0 920.2 878.1 921.2 877.4ZM892.7 875.2 891.5 876.0 890.5 877.4 890.0 879.1 890.2 880.6 891.2 881.6 892.2 882.0 895.5 881.8 896.5 881.4 897.5 880.5 897.8 877.9 897.3 877.0 895.5 875.6 894.2 875.2ZM891.5 878.3 892.5 877.4 894.5 877.4 896.3 878.3 896.5 879.1 895.8 879.7 892.5 879.7 891.5 878.9ZM887.2 875.4 886.4 875.2 876.9 879.7 875.6 880.8 875.9 882.0 877.6 881.6 886.2 877.8 886.7 877.2ZM783.2 875.4 782.9 875.2 781.5 875.4 770.6 880.1 770.0 880.6 770.0 881.8 771.2 882.0 781.2 878.1 782.3 877.4ZM970.8 871.2 970.0 871.0 962.5 874.3 962.2 874.9 962.5 875.8 964.5 875.4 969.8 873.5 970.6 872.9ZM862.0 871.2 861.5 871.0 860.2 871.2 858.2 872.5 857.2 874.1 857.2 874.7 857.7 875.4 859.7 876.6 857.5 878.5 852.7 881.2 853.2 882.0 854.2 882.0 856.7 880.8 861.2 877.4 863.0 877.8 863.8 877.0 864.0 876.0 862.8 875.2 863.3 873.1ZM859.2 873.7 860.0 873.3 861.0 874.5 860.7 874.7ZM728.6 871.2 727.9 871.0 726.4 871.2 724.8 871.8 723.5 872.7 722.6 873.9 722.6 874.9 725.4 876.8 721.6 879.1 716.9 881.0 717.2 882.0 718.8 882.0 721.9 880.8 727.6 877.4 729.5 877.8 730.5 877.2 731.1 876.2 729.5 875.2 729.8 872.3ZM725.1 873.7 726.0 873.3 727.0 873.9 727.0 874.3 726.4 874.5Z"/><circle cx="672.2" cy="414" r="13.6" fill="none" stroke="#1a1a1a" stroke-width="1.8"/><path transform="translate(672.2 414.0)" d="M-1.5 -10C1.5 -10.5 3.8 -8 3.5 -5.5L5 -7.5C5.2 -5 4.3 -3.2 2.8 -2.2C3.8 1.5 4.8 5 4.6 9.6L3.5 9.8C2 5.5 1 2.5 0.2 -1.8C-1.8 -1.5 -3.8 -2.8 -4 -5.5C-4 -8 -3 -9.6 -1.5 -10z"/><circle cx="414.8" cy="521" r="14.9" fill="none" stroke="#1a1a1a" stroke-width="1.8"/><path transform="translate(407.8 522.5)" d="M-3.2 -9.5C-1 -8 1.8 -3 2 9.2L1 9.4C0.2 1 -2.5 -4 -5.2 -7.2C-5 -8.6 -4.2 -9.6 -3.2 -9.5z"/><path transform="translate(415.3 521.0)" d="M0 -3C1.6 -2 2.2 -0.5 1.8 1C1.2 2.2 0.4 2.6 0 2.8C-1 1.8 -1.8 0.6 -1.6 -0.8C-1.3 -2 -0.6 -2.8 0 -3z"/><circle cx="693.1" cy="711.5" r="15.1" fill="none" stroke="#1a1a1a" stroke-width="1.8"/><path transform="translate(688.6 713.0)" d="M-3.2 -9.5C-1 -8 1.8 -3 2 9.2L1 9.4C0.2 1 -2.5 -4 -5.2 -7.2C-5 -8.6 -4.2 -9.6 -3.2 -9.5z"/><path transform="translate(695.6 712.0)" d="M-3.2 -9.5C-1 -8 1.8 -3 2 9.2L1 9.4C0.2 1 -2.5 -4 -5.2 -7.2C-5 -8.6 -4.2 -9.6 -3.2 -9.5z"/><circle cx="642.6" cy="889.3" r="13.6" fill="none" stroke="#1a1a1a" stroke-width="1.8"/><path transform="translate(637.6 892.3)" d="M-3.2 -9.5C-1 -8 1.8 -3 2 9.2L1 9.4C0.2 1 -2.5 -4 -5.2 -7.2C-5 -8.6 -4.2 -9.6 -3.2 -9.5z"/><path transform="translate(646.1 888.5)" d="M-3.5 -8.5C-1.5 -6.5 0.5 -5.5 2.5 -6.5L4.5 -9.5C5.5 -6.5 4 -3.5 0.8 -1.2C1.8 2.5 2.2 6 2 9L1 9.2C0 5 -1 2 -2 -1C-3.5 -3 -4 -5.5 -3.5 -8.5z"/></g></svg>
<svg class="a" style="left:1010px;top:580px;" width="44" height="42" viewBox="0 0 44 42"><g fill="#fff" stroke="#c4c4c4" stroke-width="1"><rect x="18.5" y="2.5" width="6" height="14"/><rect x="18.5" y="25.5" width="6" height="14"/><rect x="3.5" y="17.5" width="14" height="6"/><rect x="26.5" y="17.5" width="14" height="6"/><circle cx="21.5" cy="20.5" r="2.8"/></g><g fill="#000"><rect x="20.5" y="4.5" width="2" height="10"/><rect x="20.5" y="27.5" width="2" height="10"/><rect x="5.5" y="19.5" width="10" height="2"/><rect x="28.5" y="19.5" width="10" height="2"/><circle cx="21.5" cy="20.5" r="1.2"/></g></svg>
<!-- speaker video -->
<div class="a" style="left:1594px;top:167px;width:266px;height:151px;border-radius:8px;background:#22e58b"></div>
<svg class="a" style="left:1597px;top:170px;border-radius:6px;overflow:hidden" width="260" height="145" viewBox="0 0 260 145">
<defs>
<filter id="b8" x="-50%" y="-50%" width="200%" height="200%"><feGaussianBlur stdDeviation="8"/></filter>
<filter id="b3" x="-50%" y="-50%" width="200%" height="200%"><feGaussianBlur stdDeviation="3.5"/></filter>
<filter id="b1" x="-50%" y="-50%" width="200%" height="200%"><feGaussianBlur stdDeviation="1"/></filter><filter id="b2" x="-50%" y="-50%" width="200%" height="200%"><feGaussianBlur stdDeviation="2"/></filter>
<linearGradient id="gbg" x1="0" y1="0" x2="0" y2="1"><stop offset="0" stop-color="#e8eed2"/><stop offset="0.45" stop-color="#c8de98"/><stop offset="1" stop-color="#7cb244"/></linearGradient>
<clipPath id="cl"><rect width="260" height="145" rx="6"/></clipPath>
</defs>
<g clip-path="url(#cl)">
<rect width="260" height="145" fill="url(#gbg)"/>
<g filter="url(#b8)">
<rect x="-20" y="60" width="90" height="100" fill="#6fa83c"/>
<rect x="10" y="0" width="50" height="45" fill="#f2f3e2"/>
<rect x="150" y="-10" width="80" height="50" fill="#f0f2dc"/>
<rect x="195" y="70" width="60" height="70" fill="#dfe8d6"/>
<rect x="170" y="100" width="30" height="50" fill="#7fb546"/>
</g>
<g filter="url(#b3)">
<path d="M76 -5L90 -5L50 150L30 150z" fill="#5e9d2b"/>
<path d="M6 30L20 30L36 150L20 150z" fill="#8cc04f"/>
<path d="M52 60L64 62L34 150L16 150z" fill="#4f8e27"/>
<path d="M-4 70L10 70L14 150L-4 150z" fill="#94c45a"/>
<path d="M146 -5L160 -5L208 110L194 114z" fill="#8fc64a"/>
<path d="M182 10L194 8L234 150L216 150z" fill="#76b73a"/>
<path d="M230 0L244 0L250 150L234 150z" fill="#7cbc3f"/>
<path d="M174 60L188 62L164 150L146 150z" fill="#6aaa34"/>
<path d="M204 40L214 42L194 150L176 150z" fill="#a9d36a"/>
</g>
<!-- face -->
<g filter="url(#b1)">
<path d="M68 64C72 58 90 54 120 54C150 54 168 58 172 66L174 100C178 100 180 106 178 114L172 145L66 145L64 112C62 106 64 100 67 98z" fill="#d3cfd1"/>
<ellipse cx="140" cy="82" rx="26" ry="18" fill="#dcd8da"/>
</g><g filter="url(#b2)">
<path d="M78 95C84 86 104 86 112 94C106 104 84 104 78 95z" fill="#6f696b"/>
<path d="M128 92C136 84 156 84 162 92C156 101 134 101 128 92z" fill="#6f696b"/>
<ellipse cx="96" cy="97" rx="8" ry="3.5" fill="#bdb8ba"/>
<ellipse cx="146" cy="94.5" rx="8" ry="3.5" fill="#bdb8ba"/>
<path d="M76 88C86 82 104 82 112 88M128 86C138 80 154 80 162 86" stroke="#5a5456" stroke-width="3" fill="none"/>
</g><g filter="url(#b1)">
<path d="M90 2C100 -1 124 -2 136 1C150 20 160 40 167 60C145 54 100 56 68 66C72 44 80 20 90 2z" fill="#8e867d"/>
<path d="M68 66C100 56 145 54 167 60" stroke="#5f5850" stroke-width="2.5" fill="none"/>
<path d="M74 50C100 44 140 42 160 46M80 38C104 32 134 30 154 34M86 26C106 21 130 20 148 22M90 14C106 10 126 9 142 11" stroke="#a39b92" stroke-width="2.2" fill="none"/>
</g>
<path d="M4 145V123A8 8 0 0 1 12 115H190A8 8 0 0 1 198 123V145z" fill="rgba(45,45,45,0.78)"/>
</g>
</svg>
<svg class="a" style="left:1605px;top:288px" width="17" height="21" viewBox="0 0 17 21"><path d="M2.5 3h7l-1 5 3 3.5v1.5h-4.5v7.5l-1 0.5-1-0.5v-7.5h-4.5v-1.5l3-3.5z" fill="#fff"/><circle cx="13" cy="3.5" r="3.2" fill="#fff"/></svg>
<div class="t" style="left:1632px;top:290.8px;font-size:18.5px;color:#fff;letter-spacing:0.2px">Mukhammad Idrus</div>

<div class="t" style="left:1695px;top:376px;font-size:29px;font-weight:700;color:#fff;letter-spacing:0px">Host</div>
<div class="a" style="left:1598px;top:433px;width:77px;height:29px;background:#2a2b2d;border-radius:8px"></div>
<svg class="a" style="left:1602px;top:436px" width="22" height="22" viewBox="0 0 22 22"><rect x="7" y="1.2" width="8.6" height="15" rx="4.3" fill="#ef5b5b"/><rect x="6.8" y="15.5" width="9" height="4.6" fill="#ef5b5b"/><path d="M1.5 20.6L20.5 1.6" stroke="#2b2b2d" stroke-width="4.2"/><path d="M1.5 20.6L20.5 1.6" stroke="#f06a6a" stroke-width="1.9"/></svg>
<div class="t" style="left:1632px;top:439px;font-size:18.5px;color:#fff;letter-spacing:-0.3px">Host</div>

<!-- Maran video -->
<svg class="a" style="left:1595px;top:465px;overflow:hidden" width="264" height="148" viewBox="0 0 264 148">
<defs>
<linearGradient id="mw" x1="0" y1="0.3" x2="1" y2="0"><stop offset="0" stop-color="#a6a8a8"/><stop offset="0.4" stop-color="#bdbebe"/><stop offset="0.75" stop-color="#cdcece"/><stop offset="1" stop-color="#dedede"/></linearGradient>
<filter id="mb" x="-50%" y="-50%" width="200%" height="200%"><feGaussianBlur stdDeviation="10"/></filter>
<filter id="mb1" x="-50%" y="-50%" width="200%" height="200%"><feGaussianBlur stdDeviation="1.2"/></filter><filter id="mb2" x="-50%" y="-50%" width="200%" height="200%"><feGaussianBlur stdDeviation="2"/></filter>
</defs>
<rect width="264" height="148" fill="url(#mw)"/>
<ellipse cx="230" cy="20" rx="50" ry="25" fill="#e6e6e6" filter="url(#mb)"/>
<g filter="url(#mb1)">
<path d="M100 150C100 140 105 135 115 132L110 115C104 112 100 104 101 96C102 90 106 88 110 90L112 70L160 60L190 70L192 90C196 88 200 90 199 98C198 106 194 112 188 115L182 132C192 135 210 140 210 150z" fill="#5f4334"/>
<path d="M104 92C102 60 115 42 135 34C138 22 142 14 147 14C152 14 155 22 156 32C176 38 192 55 192 92C185 72 170 66 147 66C124 66 110 72 104 92z" fill="#2c221e"/>
<path d="M118 52C130 42 160 42 176 52L178 60C162 52 134 52 118 60z" fill="#6e3a20" opacity="0.8"/>
<path d="M150 18C154 26 152 36 148 40" stroke="#6a3a22" stroke-width="3" fill="none"/>
<ellipse cx="128" cy="46" rx="6" ry="4" fill="#8a4a26"/>
<ellipse cx="170" cy="62" rx="7" ry="4" fill="#8a4222"/>
</g>
<g filter="url(#mb2)">
<ellipse cx="150" cy="112" rx="30" ry="22" fill="#735444"/>
<path d="M120 94C126 90 136 90 142 94C136 100 126 100 120 94z" fill="#2a1c16"/>
<path d="M157 93C163 89 173 89 179 93C173 99 163 99 157 93z" fill="#2a1c16"/>
<path d="M116 86C124 82 136 82 142 86M156 85C164 81 174 81 180 85" stroke="#3a2820" stroke-width="3" fill="none"/>
<ellipse cx="150" cy="112" rx="7" ry="5" fill="#86644f"/>
<path d="M136 126C144 123 156 123 166 126C158 131 144 131 136 126z" fill="#3e2820"/>
</g>
<path d="M95 148C110 140 125 138 150 140C175 138 195 142 210 148z" fill="#8d8076" filter="url(#mb1)"/>
<rect x="4" y="116" width="93" height="30" rx="8" fill="rgba(62,62,62,0.9)"/>
</svg>
<svg class="a" style="left:1602px;top:585px" width="22" height="22" viewBox="0 0 22 22"><rect x="7" y="1.2" width="8.6" height="15" rx="4.3" fill="#ef5b5b"/><rect x="6.8" y="15.5" width="9" height="4.6" fill="#ef5b5b"/><path d="M1.5 20.6L20.5 1.6" stroke="#2b2b2d" stroke-width="4.2"/><path d="M1.5 20.6L20.5 1.6" stroke="#f06a6a" stroke-width="1.9"/></svg>
<div class="t" style="left:1632px;top:588.4px;font-size:18.5px;color:#fff;letter-spacing:0.2px">Maran</div>

<!-- Abbas video -->
<div class="a" style="left:1595px;top:613px;width:264px;height:149px;background:#202223"></div>
<svg class="a" style="left:1627px;top:613px;overflow:hidden" width="199" height="149" viewBox="0 0 199 149">
<defs>
<linearGradient id="rw" x1="0" y1="0" x2="0" y2="1"><stop offset="0" stop-color="#efe4a2"/><stop offset="0.35" stop-color="#e3cc74"/><stop offset="0.65" stop-color="#d6b24a"/><stop offset="1" stop-color="#b8902e"/></linearGradient>
<filter id="rb" x="-50%" y="-50%" width="200%" height="200%"><feGaussianBlur stdDeviation="0.8"/></filter>
<filter id="rb2" x="-50%" y="-50%" width="200%" height="200%"><feGaussianBlur stdDeviation="8"/></filter>
</defs>
<rect width="199" height="149" fill="url(#rw)"/>
<ellipse cx="90" cy="10" rx="60" ry="25" fill="#f6efc4" filter="url(#rb2)"/>
<g filter="url(#rb)">
<rect x="168" y="0" width="31" height="149" fill="#d8c070"/>
<path d="M184 30l12-8M184 36l12-8" stroke="#8a7a50" stroke-width="1.5"/>
<rect x="172" y="46" width="27" height="70" fill="#c9b060"/>
<rect x="176" y="50" width="23" height="66" fill="#e2d49a"/>
<rect x="5" y="49" width="30" height="22" fill="#3e3a30"/><rect x="7" y="51" width="26" height="18" fill="#77776c"/>
<rect x="0" y="80" width="38" height="22" fill="#9c8a6a"/>
<path d="M4 82h14v18h-14zM22 82h14v18h-14z" fill="none" stroke="#d8d0c0" stroke-width="1.2"/>
<rect x="0" y="100" width="40" height="49" fill="#4a2e1e"/>
<rect x="40" y="45" width="42" height="75" fill="#3e2418"/>
<rect x="43" y="48" width="37" height="72" fill="#6a3e2a"/>
<rect x="43" y="50" width="3" height="50" fill="#e8d8b0"/>
<circle cx="88" cy="27" r="9" fill="#b6ae8a"/><circle cx="88" cy="27" r="5" fill="#a29a78"/>
<path d="M86 36l-8 16h18z" fill="#9a9478" opacity="0.7"/>
<rect x="81" y="68" width="8" height="9" fill="#c8e0b0"/>
<rect x="88" y="60" width="14" height="25" fill="#c0ccc8"/>
<rect x="82" y="80" width="14" height="22" fill="#bcc8c4"/><rect x="100" y="80" width="15" height="22" fill="#c8d0cc"/>
<path d="M84 84h10M84 90h10M102 86h11M102 94h11" stroke="#5a7aa0" stroke-width="2"/>
<rect x="124" y="67" width="16" height="21" fill="#e8eaec" stroke="#6a88a8" stroke-width="1.2"/>
<rect x="145" y="66" width="19" height="14" fill="#4a3828"/><rect x="147" y="69" width="15" height="9" fill="#bbb6a8"/>
<ellipse cx="154" cy="63" rx="11" ry="4" fill="#6a9040"/><circle cx="150" cy="62" r="2" fill="#e8d040"/><circle cx="157" cy="61" r="2" fill="#e8d040"/>
<rect x="168" y="67" width="18" height="24" fill="#e4e4e2" stroke="#9aa0a8" stroke-width="1.2"/>
<rect x="0" y="118" width="199" height="31" fill="#3a3024"/>
<circle cx="60" cy="110" r="6" fill="#2e2620"/>
<path d="M52 149v-22c0-6 4-10 8-10s9 4 9 10v22z" fill="#2e2a26"/>
<circle cx="104" cy="118" r="6" fill="#3a3028"/>
<circle cx="127" cy="108" r="7" fill="#6a6258"/>
<path d="M110 149v-26c0-6 6-10 17-10s17 4 17 10v26z" fill="#3c3c3c"/>
<circle cx="155" cy="111" r="6" fill="#2a2420"/>
<path d="M140 149v-22c0-5 6-9 15-9s15 4 15 9v22z" fill="#444"/>
<path d="M172 149v-45c0-8 6-14 12-16l15-2v63z" fill="#1c1a18"/>
<ellipse cx="166" cy="97" rx="7" ry="8" fill="#3a2e26"/>
</g>
</svg>
<div class="a" style="left:1599px;top:730px;width:203px;height:29px;background:rgba(52,52,52,0.88);border-radius:8px"></div>
<svg class="a" style="left:1602px;top:733px" width="22" height="22" viewBox="0 0 22 22"><rect x="7" y="1.2" width="8.6" height="15" rx="4.3" fill="#ef5b5b"/><rect x="6.8" y="15.5" width="9" height="4.6" fill="#ef5b5b"/><path d="M1.5 20.6L20.5 1.6" stroke="#2b2b2d" stroke-width="4.2"/><path d="M1.5 20.6L20.5 1.6" stroke="#f06a6a" stroke-width="1.9"/></svg>
<div class="t" style="left:1632px;top:736px;font-size:18.5px;color:#fff;letter-spacing:0.2px">Abbas Abdulmanan</div>

<div class="t" style="left:1676px;top:821.6px;font-size:29px;font-weight:700;color:#fff;letter-spacing:0.6px">Maman</div>
<div class="a" style="left:1599px;top:879px;width:102px;height:29px;background:#2a2b2d;border-radius:8px"></div>
<svg class="a" style="left:1602px;top:882px" width="22" height="22" viewBox="0 0 22 22"><rect x="7" y="1.2" width="8.6" height="15" rx="4.3" fill="#ef5b5b"/><rect x="6.8" y="15.5" width="9" height="4.6" fill="#ef5b5b"/><path d="M1.5 20.6L20.5 1.6" stroke="#2b2b2d" stroke-width="4.2"/><path d="M1.5 20.6L20.5 1.6" stroke="#f06a6a" stroke-width="1.9"/></svg>
<div class="t" style="left:1632px;top:885px;font-size:18.5px;color:#fff;letter-spacing:0px">Maman</div>
<div class="a" style="left:1671px;top:910px;width:111px;height:51px;background:#0e0f10;border-radius:8px"></div>
<svg class="a" style="left:1716px;top:929px" width="22" height="13" viewBox="0 0 22 13"><path d="M1.5 1.5l9.5 9.5 9.5-9.5" fill="none" stroke="#8d8d96" stroke-width="2.4"/></svg>
<div class="a" style="left:1521px;top:505px;width:6px;height:61px;background:#858585;border-radius:1px"></div>

<!-- zoom bottom toolbar -->
<div class="a" style="left:0;top:992px;width:1920px;height:42px;background:#000;overflow:hidden">
<svg class="a" style="left:0;top:0" width="1920" height="42" viewBox="0 992 1920 42">
<g fill="none" stroke="#fff" stroke-width="2.2" stroke-linecap="round" stroke-linejoin="round">
  <!-- mic -->
  <rect x="74" y="1009" width="13" height="24" rx="6.5"/>
  <path d="M68.5 1024v3a12 12 0 0 0 24 0v-3"/>
  <!-- carets -->
  <path d="M121 1028l5.5-5 5.5 5M268 1028l5.5-5 5.5 5M483 1028l5.5-5 5.5 5M618 1028l5.5-5 5.5 5M738 1028l5.5-5 5.5 5M885 1028l5.5-5 5.5 5M1267 1028l5.5-5 5.5 5"/>
  <!-- video -->
  <rect x="199.5" y="1016.5" width="24" height="22" rx="4"/>
  <path d="M224 1025l10-6v18l-10-6"/>
  <!-- participants -->
  <circle cx="402.3" cy="1018" r="4"/><circle cx="413.2" cy="1022" r="3.6"/>
  <path d="M395 1040c0-6 3-10 8-10s6 2 7 4M408 1040c0-4 3-7 7-7s6 3 6 7"/>
  <!-- chat -->
  <path d="M564.5 1017.5c0-4.5 3-7.5 7.5-7.5h9M557.5 1040v-16c0-3.5 2.5-6 6-6h11.5c3.5 0 6 2.5 6 6v16"/>
  <!-- heart -->
  <path d="M701 1044c-10-7-17-13-17-21c0-6 4-11 10-11c4 0 6 2 7.5 4c2-2 4-3 7-3c6 0 10 5 10 11c0 8-8 14-17.5 20z"/>
  <!-- shield -->
  <path d="M955.5 1013.5c8.5-3 17.5-3 25 0v12c0 8-5 12.5-12.5 15.5c-7.5-3-12.5-7.5-12.5-15.5z"/>
  <!-- apps -->
  <path d="M1215 1029v-9c0-5 3.5-8.5 8.5-8.5h4M1245.5 1028v8"/>
  <circle cx="1239" cy="1017" r="6"/>
  <circle cx="1221.5" cy="1040" r="6.5"/>
  <!-- notes -->
  <rect x="1348.5" y="1009" width="30" height="34" rx="5"/>
  <path d="M1355 1017.2h16M1355 1023.7h13M1355 1030.3h8M1366 1034v-1M1370 1034v-3M1374 1034v-1"/>
  <!-- pause stop -->
  <rect x="1503" y="1009.5" width="33" height="34" rx="7"/><rect x="1541" y="1009.5" width="33" height="34" rx="7"/>
  <!-- more -->
  <circle cx="1704.5" cy="1026.5" r="17"/>
</g>
<g fill="#fff">
  <rect x="1514" y="1018" width="4.5" height="13" rx="2"/><rect x="1522" y="1018" width="4.5" height="13" rx="2"/>
  <rect x="1550" y="1018" width="14" height="14" rx="3"/>
  <circle cx="1696" cy="1026" r="2.3"/><circle cx="1704.5" cy="1026" r="2.3"/><circle cx="1713" cy="1026" r="2.3"/>
  <circle cx="563.5" cy="1027.5" r="1.7"/><circle cx="569.5" cy="1027.5" r="1.7"/><circle cx="575.5" cy="1027.5" r="1.7"/>
  <path d="M959 1017.5c3-0.8 6-1 8.6-1v8.5h-8.6z"/><path d="M967.6 1025h9.4v4c-1 5-4.5 8-9.4 10z"/>
</g>
<text x="433" y="1031" font-family="Liberation Sans" font-size="18.5" fill="#9b9b9b" letter-spacing="-0.3">75</text>
<!-- red slashes -->
<path d="M69 1033l26-24M206 1034l28-25" stroke="#e8175d" stroke-width="3.2" stroke-linecap="round"/>
<!-- chat badge -->
<circle cx="590" cy="1015.5" r="11.5" fill="#e5363b" stroke="#000" stroke-width="1"/>
<text x="590" y="1021.5" font-family="Liberation Sans" font-weight="700" font-size="16" fill="#fff" text-anchor="middle">1</text>
<!-- share -->
<rect x="815.5" y="1011" width="36.5" height="30" rx="5" fill="#1ae88c"/>
<path d="M834 1034v-14M827 1026l7-7 7 7" fill="none" stroke="#000" stroke-width="3.5" stroke-linejoin="miter"/>
<!-- AI sparkle -->
<defs><linearGradient id="sp" x1="0" y1="0" x2="1" y2="1"><stop offset="0" stop-color="#f4fbfd"/><stop offset="0.5" stop-color="#a9dbe8"/><stop offset="1" stop-color="#6fb6cf"/></linearGradient></defs>
<path d="M1098 1010c2.5 10 6 13.5 16 16c-10 2.5-13.5 6-16 16c-2.5-10-6-13.5-16-16c10-2.5 13.5-6 16-16z" fill="url(#sp)"/>
<path d="M1110.5 1007.5c1 4 2 5 6 6c-4 1-5 2-6 6c-1-4-2-5-6-6c4-1 5-2 6-6z" fill="#c8eaf2"/>
<!-- end -->
<path d="M1840 1011h17l9 15-9 15h-17l-9-15z" fill="none" stroke="#e8175d" stroke-width="2.2"/>
<path d="M1842.5 1020.5l12 12M1854.5 1020.5l-12 12" stroke="#fff" stroke-width="3.4" stroke-linecap="round"/>
</svg>
</div>

<!-- taskbar -->
<div class="a" style="left:0;top:1034px;width:1920px;height:46px;background:#1f1f1f"></div>
<svg class="a" style="left:14px;top:1044px" width="26" height="25" viewBox="0 0 26 25"><g fill="#fff"><path d="M0.5 3.5l10-1.4v9.6h-10z"/><path d="M12 1.9l13.5-1.9v11.7h-13.5z"/><path d="M0.5 13.2h10v9.6l-10-1.4z"/><path d="M12 13.2h13.5v11.8l-13.5-1.9z"/></g></svg>
<div class="a" style="left:54px;top:1034px;width:387px;height:46px;background:#f0f0f0;border:1px solid #c8c8c8;border-bottom:none"></div>
<svg class="a" style="left:71px;top:1045px" width="26" height="25" viewBox="0 0 26 25"><circle cx="16.5" cy="8.5" r="7" fill="none" stroke="#111" stroke-width="1.6"/><path d="M11.5 13.5l-10 10" stroke="#111" stroke-width="1.7"/></svg>
<div class="t" style="left:114px;top:1047.5px;font-size:23px;color:#2b2b2b;letter-spacing:-0.2px">Cari</div>
<div class="a" style="left:450px;top:1042px;width:1px;height:30px;background:#555"></div>
<div class="a" style="left:454px;top:1042px;width:1px;height:30px;background:#555"></div>

<svg class="a" style="left:0;top:1034px" width="1920" height="46" viewBox="0 1034 1920 46">
<defs>
<linearGradient id="edge" x1="0" y1="0" x2="1" y2="1"><stop offset="0" stop-color="#35c1f1"/><stop offset="0.6" stop-color="#2e8fd8"/><stop offset="1" stop-color="#5bd36f"/></linearGradient>
</defs>
<!-- underlines -->
<g fill="#77b6e6">
<rect x="479" y="1077" width="43" height="3"/><rect x="536" y="1077" width="43" height="3"/><rect x="707" y="1077" width="43" height="3"/>
<rect x="821" y="1077" width="43" height="3"/><rect x="878" y="1077" width="43" height="3"/><rect x="935" y="1077" width="43" height="3"/>
<rect x="992" y="1077" width="43" height="3"/><rect x="1043" y="1077" width="54" height="3"/><rect x="1106" y="1077" width="43" height="3"/>
</g>
<g fill="#5a8bb3"><rect x="508" y="1077" width="14" height="3"/><rect x="565" y="1077" width="14" height="3"/></g>
<!-- edge -->
<circle cx="500" cy="1056.5" r="12.5" fill="url(#edge)"/>
<path d="M494 1058c0-4 3-6 6-6s5 1.5 5 4h-7" fill="none" stroke="#1f1f1f" stroke-width="3"/>
<rect x="487.5" y="1059" width="13" height="10" rx="1.5" fill="#e8931a"/><rect x="492" y="1057" width="4" height="3" fill="none" stroke="#c87512" stroke-width="1"/>
<!-- explorer -->
<path d="M546 1049h8l2 2h12v15.5h-22z" fill="#f6c544"/><rect x="546" y="1053" width="22.5" height="13.5" fill="#ffd865"/>
<path d="M551 1066.5v-6h12v6h-3v-3h-6v3z" fill="#2f8ee0"/>
<!-- outlook -->
<path d="M606 1052l10-6 9 6v15h-19z" fill="#3a8ee6"/><path d="M606 1052l10 7 9-7" fill="#72b9f8"/><path d="M611 1048l10-2 4 6-9 5z" fill="#5fa8f0"/>
<rect x="602" y="1055" width="11" height="11" rx="2" fill="#1d67c8"/><circle cx="607.5" cy="1060.5" r="3" fill="none" stroke="#fff" stroke-width="1.6"/>
<!-- drive -->
<path d="M667.5 1047h8l7 12.5h-8z" fill="#fbbc04"/><path d="M667.5 1047l-7.5 13 4 7 7.5-13z" fill="#1ea362"/><path d="M664 1067l4-7.5h14.5l-4 7.5z" fill="#4285f4"/><path d="M678.5 1067l4-7.5-3.5-0.5-4 8z" fill="#ea4335"/>
<!-- pinterest -->
<circle cx="727.5" cy="1057" r="11" fill="#cb1f27"/><circle cx="727.5" cy="1057" r="11" fill="none" stroke="#f2f2f2" stroke-width="1"/>
<path d="M725 1066l2.5-10M724 1059.5c-2-1-2-4 0-6s6-2 7.5 0.5s0 7-3 7s-2.5-3-1.5-4" fill="none" stroke="#fff" stroke-width="1.8"/>
<!-- store -->
<rect x="772.5" y="1050" width="24" height="19" rx="3" fill="#f3f3f3"/><path d="M778 1050v-3c0-1.5 1-2.5 2.5-2.5h8c1.5 0 2.5 1 2.5 2.5v3" fill="none" stroke="#2fb0e8" stroke-width="2"/>
<rect x="779.5" y="1054" width="4.5" height="4.5" fill="#f25022"/><rect x="785" y="1054" width="4.5" height="4.5" fill="#7fba00"/><rect x="779.5" y="1059.5" width="4.5" height="4.5" fill="#00a4ef"/><rect x="785" y="1059.5" width="4.5" height="4.5" fill="#ffb900"/>
<!-- excel -->
<rect x="834" y="1045.5" width="21" height="22.5" rx="1.5" fill="#21a366"/><rect x="845" y="1045.5" width="10" height="7.5" fill="#33c481"/><rect x="845" y="1060.5" width="10" height="7.5" fill="#107c41"/>
<rect x="829.5" y="1050" width="13" height="13" rx="1.5" fill="#107c41"/><path d="M833 1053l6 7M839 1053l-6 7" stroke="#fff" stroke-width="1.8"/>
<!-- chrome -->
<circle cx="899" cy="1057" r="12.2" fill="#db4437"/><path d="M899 1057l-10.5 6.1a12.2 12.2 0 0 0 12.5 6l5-9.5z" fill="#0f9d58"/><path d="M899 1057h12.2a12.2 12.2 0 0 1-10.5 12.1z" fill="#ffcd40"/>
<circle cx="899" cy="1057" r="5.5" fill="#fff"/><circle cx="899" cy="1057" r="4.3" fill="#4285f4"/>
<circle cx="956" cy="1057" r="12.2" fill="#db4437"/><path d="M956 1057l-10.5 6.1a12.2 12.2 0 0 0 12.5 6l5-9.5z" fill="#0f9d58"/><path d="M956 1057h12.2a12.2 12.2 0 0 1-10.5 12.1z" fill="#ffcd40"/>
<circle cx="956" cy="1057" r="5.5" fill="#fff"/><circle cx="956" cy="1057" r="4.3" fill="#4285f4"/>
<circle cx="962.5" cy="1063" r="6" fill="#a8a8a8"/><rect x="960" y="1060" width="5" height="6.5" rx="1.5" fill="#e8e8e8"/>
<!-- whatsapp -->
<path d="M1002 1069.5l1.8-6.2a12 12 0 1 1 4.5 4.5z" fill="none" stroke="#25d366" stroke-width="2.4"/>
<path d="M1008.5 1052c1-1 2-1 2.5 0l1.5 3c0.3 0.7-0.5 1.5-1 2c1 2 2.5 3.5 4.5 4.5c0.5-0.5 1.3-1.3 2-1l3 1.5c1 0.5 1 1.5 0 2.5c-2 2-5 1.5-8-1s-5.5-5.5-6-8c-0.3-1.5 0.5-2.5 1.5-3.5z" fill="#25d366"/>
<!-- zoom active -->
<rect x="1043" y="1034" width="48" height="43" fill="#3a3a3a"/><rect x="1091" y="1034" width="6" height="43" fill="#474747"/>
<circle cx="1070" cy="1057" r="12.7" fill="#1b5fe6"/><circle cx="1070" cy="1054" r="10" fill="#3a7cf3" opacity="0.6"/>
<text x="1070" y="1061" font-family="Liberation Sans" font-weight="700" font-size="12" fill="#fff" text-anchor="middle" letter-spacing="-0.5">zm</text>
<!-- vlc -->
<path d="M1124 1046h5l6.5 18h-18z" fill="#f08a00"/><path d="M1122 1053h9l1.3 4h-11.6zM1119.8 1059.5h13.4l1 3h-15.4z" fill="#eee"/><rect x="1116.5" y="1064" width="20.5" height="4" rx="1" fill="#e07a00"/>
</svg>

<!-- tray -->
<div class="a" style="left:1426px;top:1042px;width:70px;height:31px;border:1.5px solid #f0f0f0;background:#000"></div>
<div class="a" style="left:1428px;top:1044px;width:59px;height:27px;background:linear-gradient(180deg,#2aa24b,#13772f)"></div>
<div class="a" style="left:1496px;top:1050px;width:4px;height:15px;background:#f0f0f0"></div>
<div class="t" style="left:1442px;top:1046.2px;font-size:21px;color:#fff;letter-spacing:-0.3px">3.59</div>
<svg class="a" style="left:1514px;top:1050px" width="20" height="13" viewBox="0 0 20 13"><path d="M1 12l9-10 9 10" fill="none" stroke="#fff" stroke-width="1.5"/></svg>
<svg class="a" style="left:1551px;top:1045px" width="20" height="24" viewBox="0 0 20 24"><g fill="none" stroke="#ddd" stroke-width="1.4"><rect x="2" y="7" width="10" height="10" rx="1.5"/><path d="M12 10l5-3v10l-5-3M3 3.5a10 6 0 0 1 14 0M3 20.5a10 6 0 0 0 14 0"/></g></svg>
<svg class="a" style="left:1583px;top:1047px" width="26" height="18" viewBox="0 0 26 18"><path d="M6 17.5a5.5 5.5 0 0 1-0.5-11a8 8 0 0 1 14.5 1.5a5 5 0 0 1 0.5 9.5z" fill="#2b83e6"/><path d="M9 8a8 8 0 0 1 11 0a5 5 0 0 1 0.5 9.5h-11z" fill="#48a5f5"/></svg>
<svg class="a" style="left:1619px;top:1047px" width="26" height="23" viewBox="0 0 26 23"><path d="M5.5 16.5a5 5 0 0 1-0.5-10a7.5 7.5 0 0 1 14 1.5a4.5 4.5 0 0 1 0.5 8.5z" fill="#d8d8d8"/><circle cx="17.5" cy="15.5" r="6.5" fill="#1473d8"/><rect x="16.6" y="14" width="1.8" height="5" fill="#fff"/><circle cx="17.5" cy="12" r="1.1" fill="#fff"/></svg>
<svg class="a" style="left:1659px;top:1045px" width="17" height="24" viewBox="0 0 17 24"><rect x="3.5" y="0.5" width="10" height="16" rx="3" fill="#f2f2f2"/><path d="M1 12a7.5 7.5 0 0 0 15 0M8.5 19.5v3.5M5 23h7" fill="none" stroke="#f2f2f2" stroke-width="1.3"/></svg>
<svg class="a" style="left:1692px;top:1050px" width="25" height="15" viewBox="0 0 25 15"><rect x="1" y="1" width="20.5" height="12.5" rx="1" fill="none" stroke="#eee" stroke-width="1.4"/><rect x="3" y="3" width="16.5" height="8.5" fill="#eee"/><rect x="22" y="4.5" width="2" height="5.5" fill="#eee"/></svg>
<div class="t" style="left:1734px;top:1048.4px;font-size:18px;color:#fff;letter-spacing:0.2px">IND</div>
<div class="t" style="left:1787px;top:1048.4px;font-size:18.5px;color:#fff;letter-spacing:-0.2px">19.47</div>
<svg class="a" style="left:1857px;top:1045px" width="26" height="25" viewBox="0 0 26 25"><path d="M1 1h24v18h-8l-4 4.5-4-4.5h-8z" fill="#f4f4f4"/><path d="M5.5 6h15M5.5 10h15M5.5 14h10" stroke="#1f1f1f" stroke-width="1.3"/></svg>
<div class="a" style="left:1912px;top:1034px;width:2px;height:46px;background:#6a6a6a"></div>

</body></html>
